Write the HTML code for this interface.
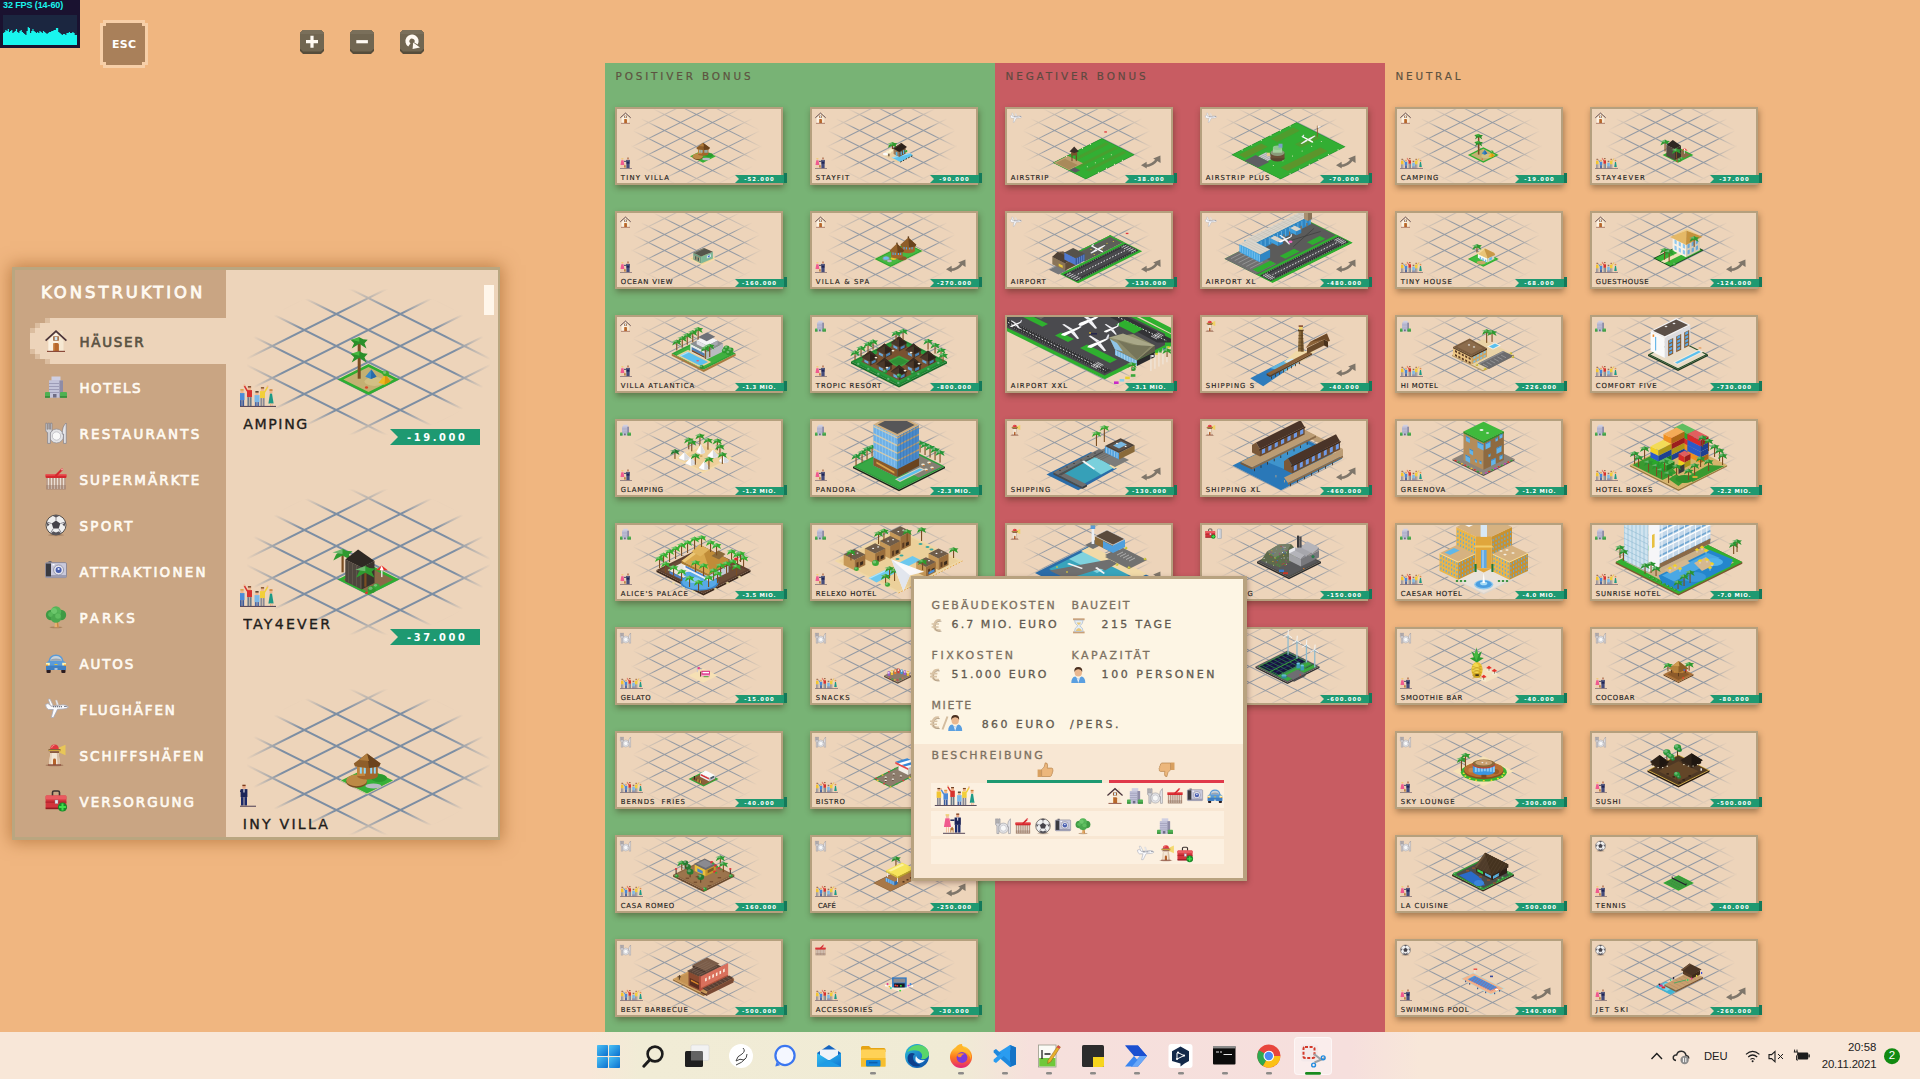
<!DOCTYPE html><html lang="de"><head><meta charset="utf-8"><title>Konstruktion</title><style>
*{box-sizing:border-box;margin:0;padding:0}
html,body{width:1920px;height:1079px;overflow:hidden}
body{background:#f0b680;position:relative;font-family:"DejaVu Sans","Liberation Sans",sans-serif}
.t{position:absolute;line-height:1;white-space:pre;font-weight:bold;font-family:"DejaVu Sans","Liberation Sans",sans-serif}
.t.r{font-weight:normal}
.abs{position:absolute}
.col{position:absolute;top:63px;height:969px;width:390px}
.card{position:absolute;width:168px;height:78px;background:#edd4ba;border:2px solid #b5a07e;box-shadow:1px 3px 6px rgba(60,40,20,.42)}
.card svg{position:absolute;left:-2px;top:-2px;overflow:visible}
.tag{position:absolute;left:122px;top:66px;width:44.5px;height:8px;background:#1e9971}
.tag:before{content:"";position:absolute;left:-4px;top:0;border-style:solid;border-width:4px 4px 4px 4px;border-color:#1e9971 #1e9971 #1e9971 transparent;width:0;height:0}
.tag:after{content:"";position:absolute;right:-3px;top:-2px;width:3px;height:10px;background:#13795a}
.tb{position:absolute;left:0;top:1032px;width:1920px;height:47px;background:linear-gradient(90deg,#f8e7d8 0,#f8e7d8 590px,#f1ecd6 640px,#f0ebd5 960px,#f6e0dc 1030px,#f6dfdd 1350px,#f8e7d9 1420px,#f8e7d9 100%)}
.ls{font-family:"Liberation Sans",sans-serif;position:absolute;white-space:nowrap;line-height:1}
</style></head><body>
<svg width="0" height="0" style="position:absolute"><defs>
<radialGradient id="gm" cx="81.5" cy="36" r="1" gradientUnits="userSpaceOnUse" gradientTransform="translate(81.5 36) scale(66 45) translate(-81.5 -36)"><stop offset="0" stop-color="#fff"/><stop offset=".66" stop-color="#fff"/><stop offset=".82" stop-color="#606060"/><stop offset="1" stop-color="#000"/></radialGradient>
<mask id="gmask" maskUnits="userSpaceOnUse" x="0" y="0" width="168" height="78"><rect x="2" y="2" width="164" height="74" fill="url(#gm)"/></mask>
<symbol id="grid" overflow="visible"><g mask="url(#gmask)"><path d="M1.5 -80.5L166.5 2.0M1.5 -64.5L166.5 18.0M1.5 15.5L166.5 -67.0M1.5 -48.5L166.5 34.0M1.5 31.5L166.5 -51.0M1.5 -32.5L166.5 50.0M1.5 47.5L166.5 -35.0M1.5 -16.5L166.5 66.0M1.5 63.5L166.5 -19.0M1.5 -0.5L166.5 82.0M1.5 79.5L166.5 -3.0M1.5 15.5L166.5 98.0M1.5 95.5L166.5 13.0M1.5 31.5L166.5 114.0M1.5 111.5L166.5 29.0M1.5 47.5L166.5 130.0M1.5 127.5L166.5 45.0M1.5 63.5L166.5 146.0M1.5 143.5L166.5 61.0M1.5 159.5L166.5 77.0" stroke="#5d7896" stroke-opacity=".62" stroke-width="1.05" fill="none"/></g></symbol>
<radialGradient id="gm2" cx="0" cy="0" r="1" gradientUnits="userSpaceOnUse" gradientTransform="translate(368.5 362) scale(122 74)"><stop offset="0" stop-color="#fff"/><stop offset=".72" stop-color="#fff"/><stop offset=".88" stop-color="#666"/><stop offset="1" stop-color="#000"/></radialGradient>
<mask id="gmask2" maskUnits="userSpaceOnUse" x="226" y="270" width="272" height="220"><rect x="240" y="270" width="258" height="220" fill="url(#gm2)"/></mask>
<symbol id="grid2" overflow="visible"><g mask="url(#gmask2)"><path d="M240.0 169.8L498.0 298.8M240.0 298.2L498.0 169.2M240.0 201.8L498.0 330.8M240.0 330.2L498.0 201.2M240.0 233.8L498.0 362.8M240.0 362.2L498.0 233.2M240.0 265.8L498.0 394.8M240.0 394.2L498.0 265.2M240.0 297.8L498.0 426.8M240.0 426.2L498.0 297.2M240.0 329.8L498.0 458.8M240.0 458.2L498.0 329.2M240.0 361.8L498.0 490.8M240.0 490.2L498.0 361.2M240.0 393.8L498.0 522.8M240.0 522.2L498.0 393.2M240.0 425.8L498.0 554.8M240.0 554.2L498.0 425.2M240.0 457.8L498.0 586.8M240.0 586.2L498.0 457.2" stroke="#5f7c9e" stroke-opacity=".8" stroke-width="2" fill="none"/></g></symbol>
<clipPath id="cardclip"><rect x="2" y="2" width="164" height="74"/></clipPath>
<symbol id="i-house" overflow="visible"><rect x="15.3" y="1" width="2.4" height="7" fill="#f3e2c8"/><path d="M3.5 10L11 3L18.5 10V21H3.5Z" fill="#f6e8d2"/><path d="M3.5 10L11 3L13 5V21H3.5Z" fill="#fbf1e2"/><rect x="8.2" y="6.3" width="5.6" height="4.4" fill="#9a5a2c"/><rect x="9.6" y="6.8" width="2.8" height="3.4" fill="#cfe6f5"/><path d="M8.3 21V14.5Q8.3 13 9.8 13H12.4Q13.9 13 13.9 14.5V21Z" fill="#b8682c"/><rect x="8.3" y="13" width="1.2" height="8" fill="#cf8a4a"/><path d="M.6 10.6L11 1.2L21.4 10.6" fill="none" stroke="#4a343a" stroke-width="1.7" stroke-linejoin="miter"/><rect x="2" y="20.8" width="18" height="1.2" fill="#8a4a3a"/></symbol><symbol id="i-hotel" overflow="visible"><rect x="6.5" y="0.5" width="9" height="5" fill="#cfcfe2"/><rect x="4" y="4.5" width="14" height="17" fill="#b5b4cc"/><rect x="4" y="4.5" width="10" height="17" fill="#c3c3d9"/><rect x="14.5" y="4.5" width="3.5" height="17" fill="#8f8ca6"/><path d="M4 7.5h10M4 10.5h10M4 13.5h10M4 16.5h10" stroke="#9d9cb8" stroke-width="1"/><rect x="8" y="18" width="3.5" height="3.5" fill="#6e6c84"/><rect x="0" y="16" width="5" height="5.8" rx="1" fill="#4fb152"/><rect x="15" y="16" width="7" height="5.8" rx="1" fill="#4fb152"/><rect x="0" y="20" width="5" height="1.8" fill="#3a8f3e"/><rect x="15" y="20" width="7" height="1.8" fill="#3a8f3e"/></symbol><symbol id="i-rest" overflow="visible"><circle cx="11.5" cy="14" r="7" fill="#e4e4e6" stroke="#8e8e96" stroke-width=".7"/><circle cx="11.5" cy="14" r="4.2" fill="#f8f8f8" stroke="#bdbdc4" stroke-width=".9"/><path d="M.8 1.2h1.4v6h1V1.2h1.4v6h1V1.2H7v7.3Q7 10 5.4 10.6V21.4H2.6V10.6Q.8 10 .8 8.5Z" fill="#d4d4d8" stroke="#7e7e88" stroke-width=".7"/><path d="M21.2 1V21.4H18.6V12H17.2Q17.2 4 21.2 1Z" fill="#e6e6ea" stroke="#7e7e88" stroke-width=".7"/></symbol><symbol id="i-basket" overflow="visible"><rect x="1.2" y="9" width="19.6" height="12.5" fill="#b89a86"/><path d="M3.5 10v11M6.5 10v11M9.5 10v11M12.5 10v11M15.5 10v11M18.5 10v11" stroke="#eadfd6" stroke-width="1.3"/><rect x="1.2" y="17" width="19.6" height="4.5" fill="#8a6a58" opacity=".35"/><rect x=".5" y="6.3" width="21" height="3.6" rx=".8" fill="#d5282e"/><rect x=".5" y="6.3" width="21" height="1.2" fill="#ee5a5a"/><path d="M11 7.5L17 1.5" stroke="#d5282e" stroke-width="2.2" stroke-linecap="round"/><circle cx="17" cy="1.6" r="1" fill="#f6a0a0"/></symbol><symbol id="i-ball" overflow="visible"><ellipse cx="11" cy="21" rx="8" ry="1.2" fill="#7a5a40" opacity=".35"/><circle cx="11" cy="11" r="10" fill="#efefef" stroke="#55504c" stroke-width="1"/><path d="M11 6.5L15.3 9.6L13.7 14.6H8.3L6.7 9.6Z" fill="#45434a"/><path d="M11 6.5V1.5M15.3 9.6L20 8M13.7 14.6L16.5 19M8.3 14.6L5.5 19M6.7 9.6L2 8" stroke="#8a8890" stroke-width="1"/><path d="M7.5 1.8L11 1L14.5 1.8L11 3.6Z M1.3 8L2.5 12.5L4.6 10.4Z M20.7 8L19.5 12.5L17.4 10.4Z M6 19.5L8 17.2L11 18.6L14 17.2L16 19.5Q11 22.5 6 19.5Z" fill="#55535a"/></symbol><symbol id="i-camera" overflow="visible"><rect x="3.5" y="1" width="3" height="2" fill="#6a6a72"/><rect x=".5" y="2.6" width="21" height="15" rx="1.3" fill="#c9c9dc" stroke="#77778a" stroke-width=".7"/><rect x=".8" y="15" width="20.4" height="2.6" fill="#9c9cb2"/><rect x="1" y="3.4" width="5" height="13" fill="#3a3a40"/><circle cx="13.6" cy="10" r="5" fill="#e4e4ee" stroke="#8a8a9c" stroke-width=".8"/><circle cx="13.6" cy="10" r="3" fill="#4a5fae"/><circle cx="13.6" cy="9" r="1.1" fill="#dfe8ff"/><rect x="7.5" y="4" width="2" height="1.4" fill="#fff"/></symbol><symbol id="i-tree" overflow="visible"><ellipse cx="11" cy="21.3" rx="6.5" ry=".9" fill="#8a6038" opacity=".5"/><path d="M9.4 21.3L10.4 14h2.4l1 7.3Z" fill="#e8b070"/><path d="M11.6 14h1.2l1 7.3h-1.6Z" fill="#c88a48"/><circle cx="6" cy="9" r="5.2" fill="#3f9a44"/><circle cx="16" cy="9" r="5.2" fill="#3f9a44"/><circle cx="11" cy="5.4" r="5.2" fill="#55b558"/><circle cx="11" cy="11.5" r="5.3" fill="#4aa84e"/><circle cx="9" cy="5" r="3" fill="#6cc76c"/><circle cx="5.5" cy="8.5" r="2.4" fill="#58b85a"/><circle cx="13" cy="10" r="2.8" fill="#5fbe60"/></symbol><symbol id="i-car" overflow="visible"><rect x="1.5" y="16" width="4.2" height="5" rx="1" fill="#2a1c20"/><rect x="16.3" y="16" width="4.2" height="5" rx="1" fill="#2a1c20"/><path d="M3.5 9Q4.5 2.5 11 2.5Q17.5 2.5 18.5 9L21 10.5V18H1V10.5Z" fill="#5b9bd8"/><path d="M5 8.8Q6 4 11 4Q16 4 17 8.8Z" fill="#c9d3dc"/><path d="M5 8.8Q6 6.5 11 6.5Q16 6.5 17 8.8Z" fill="#9aa6b2"/><rect x="1" y="13.6" width="20" height="4.4" fill="#3f7fc2"/><rect x="1" y="10.8" width="3.8" height="2.6" fill="#fff3b0"/><rect x="17.2" y="10.8" width="3.8" height="2.6" fill="#fff3b0"/><rect x="1" y="12.6" width="2" height="1.2" fill="#f39a1e"/><rect x="19" y="12.6" width="2" height="1.2" fill="#f39a1e"/><rect x="9.5" y="12" width="3" height="1" fill="#e8c030"/><rect x="9.5" y="16.4" width="3" height="1.2" fill="#eee"/></symbol><symbol id="i-plane" overflow="visible"><path d="M0.5 6.5L3 5.5L6.5 8.2L18 6.8Q21.5 6.8 23.5 9Q21.5 11 18 11L12.5 11.3L8.5 19.5H6.3L8.3 11.5L3.5 11.5Q.8 10.5 .5 6.5Z" fill="#fbfbfd" stroke="#a4a8b6" stroke-width=".8"/><path d="M3.2 1L5 1L8.3 7.8L5.6 8Z" fill="#fff" stroke="#a9adba" stroke-width=".7"/><path d="M10.5 2.2L12 2.2L13.5 6.8L11.8 7Z" fill="#eceef2" stroke="#c4c7d0" stroke-width=".4"/><path d="M8 8.8H17" stroke="#4a4f60" stroke-width="1.1" stroke-dasharray="1.3 .7"/><path d="M19 8.2h2.4l1 .9h-3.4Z" fill="#5a6070"/></symbol><symbol id="i-light" overflow="visible"><ellipse cx="9.5" cy="21.3" rx="9" ry="1" fill="#7a4a30" opacity=".45"/><path d="M13 4L20.5 .8V11.2L13 8Z" fill="#f2d24a" opacity=".75"/><path d="M5.2 5.2Q5.2 .4 9.5 .4Q13.8 .4 13.8 5.2Z" fill="#e0383e"/><path d="M6.6 4Q6.8 1.4 9.5 1.2" stroke="#f58a8a" stroke-width="1" fill="none"/><rect x="3.6" y="5" width="11.8" height="2.2" fill="#6a4a3a"/><rect x="3.6" y="5.8" width="11.8" height="1" fill="#e8c040"/><rect x="5" y="7.2" width="9" height="1.8" fill="#8a5a40"/><path d="M5.4 9H13.6L15.2 21H3.8Z" fill="#f4e6d4"/><path d="M11.8 9H13.6L15.2 21H12.6Z" fill="#d8bfa6"/><path d="M5.4 9H7L6 21H3.8Z" fill="#e6d2bc"/><path d="M8 21V16Q8 14.6 9.5 14.6Q11 14.6 11 16V21Z" fill="#b5622a"/><rect x="3" y="20.3" width="13" height="1.2" fill="#8a4a3a"/></symbol><symbol id="i-med" overflow="visible"><path d="M7.5 6V2.6Q7.5 1 9 1H13Q14.5 1 14.5 2.6V6" fill="none" stroke="#3c3230" stroke-width="1.6"/><rect x=".6" y="5.4" width="20.8" height="13.6" rx="1.4" fill="#d3343c"/><rect x=".6" y="5.4" width="20.8" height="4" rx="1.2" fill="#ea5a60"/><rect x=".6" y="11.6" width="20.8" height="1" fill="#a82028"/><rect x=".6" y="17.6" width="20.8" height="1.6" fill="#8e1c22"/><rect x="10" y="10" width="3" height="3.6" fill="#e8e8ee" stroke="#8a8a96" stroke-width=".4"/><circle cx="17.5" cy="17" r="4.6" fill="#1a8a2a"/><path d="M17.5 13.6V20.4M14.1 17H20.9" stroke="#3fe04a" stroke-width="2"/></symbol><symbol id="i-med2" overflow="visible"><g transform="scale(.95)"><path d="M7.5 6V2.6Q7.5 1 9 1H13Q14.5 1 14.5 2.6V6" fill="none" stroke="#3c3230" stroke-width="1.6"/><rect x=".6" y="5.4" width="20.8" height="13.6" rx="1.4" fill="#d3343c"/><rect x=".6" y="5.4" width="20.8" height="4" rx="1.2" fill="#ea5a60"/><rect x=".6" y="11.6" width="20.8" height="1" fill="#a82028"/><rect x=".6" y="17.6" width="20.8" height="1.6" fill="#8e1c22"/><rect x="10" y="10" width="3" height="3.6" fill="#e8e8ee" stroke="#8a8a96" stroke-width=".4"/><circle cx="17.5" cy="17" r="4.6" fill="#1a8a2a"/><path d="M17.5 13.6V20.4M14.1 17H20.9" stroke="#3fe04a" stroke-width="2"/></g><rect x="25" y="1" width="8" height="19" rx="1" fill="#c9cdd4" stroke="#8f949c" stroke-width=".8"/><rect x="26.4" y="2" width="2.2" height="17" fill="#e8ebef"/></symbol><symbol id="i-group" overflow="visible"><rect x="2.9" y="3.0" width="3.2" height="3.4" fill="#f0b48a"/><rect x="2.9" y="2.7" width="3.2" height="1.3" fill="#5a3a24"/><rect x="2.0" y="6.6" width="5.0" height="7" fill="#f2c531"/><rect x="2.4" y="13.6" width="1.8" height="8.0" fill="#8a8a94"/><rect x="4.8" y="13.6" width="1.8" height="8.0" fill="#8a8a94"/><rect x="10.4" y="5.0" width="3.2" height="3.4" fill="#f0b48a"/><rect x="10.4" y="4.7" width="3.2" height="1.3" fill="#d8a040"/><rect x="9.5" y="8.6" width="5.0" height="7" fill="#4a8ad8"/><rect x="9.9" y="15.6" width="1.8" height="6.0" fill="#3c5a9a"/><rect x="12.3" y="15.6" width="1.8" height="6.0" fill="#3c5a9a"/><path d="M9.9 9.6L6.9 4.4" stroke="#4a8ad8" stroke-width="1.6"/><rect x="6.1" y="3.0" width="1.6" height="1.6" fill="#f0b48a"/><rect x="17.9" y="2.0" width="3.2" height="3.4" fill="#f0b48a"/><rect x="17.9" y="1.7" width="3.2" height="1.3" fill="#6a3a20"/><rect x="17.0" y="5.6" width="5.0" height="7" fill="#d8322e"/><rect x="17.4" y="12.6" width="1.8" height="9.0" fill="#6a7a88"/><rect x="19.8" y="12.6" width="1.8" height="9.0" fill="#6a7a88"/><path d="M17.4 6.6L14.4 1.4" stroke="#d8322e" stroke-width="1.6"/><rect x="13.6" y="0.0" width="1.6" height="1.6" fill="#f0b48a"/><rect x="25.4" y="7.0" width="3.2" height="3.4" fill="#f0b48a"/><rect x="25.4" y="6.7" width="3.2" height="1.3" fill="#3a2a20"/><rect x="24.5" y="10.6" width="5.0" height="7" fill="#7ab8e8"/><rect x="24.9" y="17.6" width="1.8" height="4.0" fill="#4a6aa8"/><rect x="27.3" y="17.6" width="1.8" height="4.0" fill="#4a6aa8"/><rect x="30.9" y="3.0" width="3.2" height="3.4" fill="#f0b48a"/><rect x="30.9" y="2.7" width="3.2" height="1.3" fill="#7a4a24"/><rect x="30.0" y="6.6" width="5.0" height="7" fill="#f2cf3a"/><rect x="30.4" y="13.6" width="1.8" height="8.0" fill="#8a8a94"/><rect x="32.8" y="13.6" width="1.8" height="8.0" fill="#8a8a94"/><path d="M34.6 7.6L37.6 2.4" stroke="#f2cf3a" stroke-width="1.6"/><rect x="36.8" y="1.0" width="1.6" height="1.6" fill="#f0b48a"/><path d="M40 9L38.4 19H43.6L42 9Z" fill="#1e9a86"/><rect x="39.5" y="5.4" width="3" height="3.4" fill="#f0b48a"/><rect x="39.5" y="4.8" width="3" height="1.4" fill="#c87830"/><rect x="40" y="19" width="1" height="2.4" fill="#f0b48a"/><rect x="41.6" y="19" width="1" height="2.4" fill="#f0b48a"/><rect x="0" y="21.4" width="46" height="1.1" fill="#5a4a5a"/></symbol><symbol id="i-couple" overflow="visible"><rect x="3.2" y="1.6" width="3.2" height="3.4" fill="#f3c0a0"/><rect x="2.8" y="1" width="4" height="1.6" fill="#f0d070"/><path d="M2.6 5.4H7L8.8 15H1Z" fill="#f05a8e"/><rect x="3.2" y="15" width="1.1" height="5.8" fill="#f3c0a0"/><rect x="5.4" y="15" width="1.1" height="5.8" fill="#f3c0a0"/><path d="M8 16.5L10 14.5L11.5 16.5V20.8H10.5V18.5H9V20.8H8Z" fill="#b87838"/><path d="M8 7.5H12.5" stroke="#1c2458" stroke-width="1.6"/><rect x="14.4" y="0.8" width="3.2" height="3.4" fill="#e8a888"/><rect x="14.4" y=".2" width="3.2" height="1.4" fill="#7a3a1a"/><rect x="12.6" y="4.6" width="6.8" height="8" fill="#1c2458"/><rect x="15.5" y="4.6" width="1" height="3.4" fill="#fff"/><rect x="13" y="12.6" width="2.6" height="8.4" fill="#1c2a6a"/><rect x="16.4" y="12.6" width="2.6" height="8.4" fill="#1c2a6a"/><rect x="0" y="21.2" width="24" height="1.1" fill="#5a4a5a"/></symbol><symbol id="i-man" overflow="visible"><path d="M2 12L6 19" stroke="#c87a4a" stroke-width="1.2"/><path d="M4 9L9 6.4" stroke="#1c2458" stroke-width="1.6"/><rect x="2.6" y="8" width="1.8" height="1.8" fill="#e8a888"/><rect x="10.4" y="0.8" width="3.2" height="3.4" fill="#e8a888"/><rect x="10.4" y=".2" width="3.2" height="1.4" fill="#7a3a1a"/><rect x="8.6" y="4.6" width="6.8" height="8" fill="#1c2458"/><rect x="11.5" y="4.6" width="1" height="3.4" fill="#fff"/><rect x="9" y="12.6" width="2.6" height="8.4" fill="#1c2a6a"/><rect x="12.4" y="12.6" width="2.6" height="8.4" fill="#1c2a6a"/><rect x="0" y="21.2" width="24" height="1.1" fill="#5a4a5a"/></symbol><symbol id="i-euro" overflow="visible"><path d="M10 2.2Q4.4 1.2 3.6 7.4Q3 12.8 10 12.2" fill="none" stroke="#d9c3a5" stroke-width="2.4"/><path d="M10 2.2Q4.4 1.2 3.6 7.4Q3 12.8 10 12.2" fill="none" stroke="#8a7a68" stroke-width=".5" transform="translate(.9 .9)"/><path d="M1 5.8H8.4M1 8.8H8" stroke="#d9c3a5" stroke-width="1.6"/></symbol><symbol id="i-hour" overflow="visible"><rect x="1" y=".5" width="11" height="1.8" fill="#c9a078"/><rect x="1" y="13" width="11" height="1.8" fill="#c9a078"/><path d="M2.4 2.3H10.6Q10.6 6 7.4 7.6Q10.6 9.4 10.6 13H2.4Q2.4 9.4 5.6 7.6Q2.4 6 2.4 2.3Z" fill="#e4edf5" stroke="#a8b4c4" stroke-width=".6"/><path d="M3.6 12.6Q4 10.2 6.5 9.6Q9 10.2 9.4 12.6Z" fill="#e8c87a"/><path d="M4.4 4.4H8.6Q8 6 6.5 6.8Q5 6 4.4 4.4Z" fill="#e8c87a"/></symbol><symbol id="i-pers" overflow="visible"><path d="M.5 16.5Q.5 10.5 4.5 10L7.5 12.5L10.5 10Q14.5 10.5 14.5 16.5Z" fill="#5a9fe0"/><path d="M5.6 10.5L7.5 13L9.4 10.5L7.5 16.5Z" fill="#e6eef8"/><ellipse cx="7.5" cy="5.8" rx="3.7" ry="4.3" fill="#eab890"/><path d="M3.6 5.5Q3 .6 7.5 .6Q12 .6 11.4 5.5Q10.5 2.6 7.5 2.8Q4.5 2.6 3.6 5.5Z" fill="#4a3020"/></symbol><symbol id="i-up" overflow="visible"><path d="M1 8H5V15.5H1Z" fill="#d8a060"/><path d="M5 8.2Q8.4 6 8.6 1.4Q11.2 1 11 4.4L10.6 6.6H15Q16.6 6.8 16.2 8.4Q16.8 9.6 15.8 10.6Q16.2 11.8 15.2 12.6Q15.4 14.4 13.6 15H5Z" fill="#ecb77c" stroke="#b8844c" stroke-width=".7"/></symbol><symbol id="i-down" overflow="visible"><g transform="translate(17 16.5) scale(-1 -1)"><path d="M1 8H5V15.5H1Z" fill="#d8a060"/><path d="M5 8.2Q8.4 6 8.6 1.4Q11.2 1 11 4.4L10.6 6.6H15Q16.6 6.8 16.2 8.4Q16.8 9.6 15.8 10.6Q16.2 11.8 15.2 12.6Q15.4 14.4 13.6 15H5Z" fill="#ecb77c" stroke="#b8844c" stroke-width=".7"/></g></symbol><symbol id="rot" overflow="visible"><path d="M3.2 10.2Q11.5 10.5 16.2 3.6" fill="none" stroke="#7f766a" stroke-width="2.6"/><path d="M0 9.6L5.6 6.2L5.8 13Z" fill="#7f766a"/><path d="M12.2 3L19.4 0L19.6 7.4Z" fill="#7f766a"/></symbol>
</defs></svg>
<div class="abs" style="left:0;top:0;width:80px;height:48px;background:#1a1230"></div>
<div class="abs" style="left:3px;top:15px;width:74px;height:30px;background:#1b2640"></div>
<svg class="abs" style="left:0;top:0" width="80" height="48"><path d="M3 45L3.0 33.0L4.2 33.0L4.2 32.0L5.3 32.0L5.3 30.0L6.5 30.0L6.5 31.0L7.7 31.0L7.7 29.0L8.9 29.0L8.9 32.0L10.0 32.0L10.0 31.0L11.2 31.0L11.2 30.0L12.4 30.0L12.4 33.0L13.6 33.0L13.6 32.0L14.7 32.0L14.7 31.0L15.9 31.0L15.9 29.0L17.1 29.0L17.1 32.0L18.3 32.0L18.3 33.0L19.4 33.0L19.4 31.0L20.6 31.0L20.6 30.0L21.8 30.0L21.8 32.0L23.0 32.0L23.0 33.0L24.1 33.0L24.1 34.0L25.3 34.0L25.3 35.0L26.5 35.0L26.5 31.0L27.7 31.0L27.7 27.0L28.8 27.0L28.8 28.0L30.0 28.0L30.0 33.0L31.2 33.0L31.2 31.0L32.4 31.0L32.4 29.0L33.5 29.0L33.5 31.0L34.7 31.0L34.7 32.0L35.9 32.0L35.9 33.0L37.1 33.0L37.1 32.0L38.2 32.0L38.2 33.0L39.4 33.0L39.4 31.0L40.6 31.0L40.6 32.0L41.8 32.0L41.8 33.0L42.9 33.0L42.9 31.0L44.1 31.0L44.1 32.0L45.3 32.0L45.3 33.0L46.5 33.0L46.5 34.0L47.6 34.0L47.6 33.0L48.8 33.0L48.8 32.0L50.0 32.0L50.0 32.0L51.2 32.0L51.2 31.0L52.3 31.0L52.3 31.0L53.5 31.0L53.5 30.0L54.7 30.0L54.7 30.0L55.9 30.0L55.9 28.0L57.0 28.0L57.0 28.0L58.2 28.0L58.2 32.0L59.4 32.0L59.4 33.0L60.6 33.0L60.6 34.0L61.7 34.0L61.7 35.0L62.9 35.0L62.9 34.0L64.1 34.0L64.1 34.0L65.3 34.0L65.3 35.0L66.4 35.0L66.4 33.0L67.6 33.0L67.6 33.0L68.8 33.0L68.8 32.0L70.0 32.0L70.0 33.0L71.1 33.0L71.1 33.0L72.3 33.0L72.3 32.0L73.5 32.0L73.5 33.0L74.7 33.0L74.7 35.0L75.8 35.0L75.8 35.0L77.0 35.0L77 45Z" fill="#19f5ee"/></svg>
<span class="ls" style="left:3px;top:1px;font-size:9px;font-weight:bold;color:#19f5ee;letter-spacing:-.1px">32 FPS (14-60)</span>
<div class="abs" style="left:100px;top:23px;width:48px;height:42px;background:#f7cfa8"></div>
<div class="abs" style="left:103px;top:20px;width:42px;height:48px;background:#f7cfa8"></div>
<div class="abs" style="left:103px;top:26px;width:42px;height:36px;background:#a9805a"></div>
<div class="abs" style="left:106px;top:23px;width:36px;height:42px;background:#a9805a"></div>
<span class="t" style="left:112.0px;top:40.2px;font-size:10.97px;letter-spacing:0.27px;color:#fff;">ESC</span>
<svg class="abs" style="left:300px;top:30px" width="24" height="24"><path d="M3 0H21L24 3V21L21 24H3L0 21V3Z" fill="#564c3a"/><path d="M3 0H21L24 3V18.5L21 21.5H3L0 18.5V3Z" fill="#716651"/><path d="M3 0H21L24 3V4H0V3Z" fill="#7a6f5a"/>
<path d="M6 11.7h12M12 5.7v12" stroke="#fffaf2" stroke-width="3.2"/>
</svg>
<svg class="abs" style="left:350px;top:30px" width="24" height="24"><path d="M3 0H21L24 3V21L21 24H3L0 21V3Z" fill="#564c3a"/><path d="M3 0H21L24 3V18.5L21 21.5H3L0 18.5V3Z" fill="#716651"/><path d="M3 0H21L24 3V4H0V3Z" fill="#7a6f5a"/>
<path d="M6.3 11.7h11.6" stroke="#fffaf2" stroke-width="3.2"/>
</svg>
<svg class="abs" style="left:400px;top:30px" width="24" height="24"><path d="M3 0H21L24 3V21L21 24H3L0 21V3Z" fill="#564c3a"/><path d="M3 0H21L24 3V18.5L21 21.5H3L0 18.5V3Z" fill="#716651"/><path d="M3 0H21L24 3V4H0V3Z" fill="#7a6f5a"/>
<path d="M9.4 14.9A4.6 4.6 0 1 1 16 13.4" stroke="#fffaf2" stroke-width="4" fill="none"/><path d="M13.2 12.4L20 17.6L12.6 19Z" fill="#fffaf2"/>
</svg>
<div class="col" style="left:605px;background:#78b375"></div>
<div class="col" style="left:995px;background:#c85c62"></div>
<span class="t r" style="left:615.5px;top:70.7px;font-size:10.43px;letter-spacing:2.85px;color:#5d5240;-webkit-text-stroke:0.18px #5d5240;">POSITIVER BONUS</span>
<span class="t r" style="left:1005.5px;top:70.7px;font-size:10.43px;letter-spacing:2.88px;color:#5d4a40;-webkit-text-stroke:0.18px #5d4a40;">NEGATIVER BONUS</span>
<span class="t r" style="left:1395.5px;top:70.7px;font-size:10.43px;letter-spacing:2.81px;color:#5d5240;-webkit-text-stroke:0.18px #5d5240;">NEUTRAL</span>
<div class="card" style="left:615px;top:107px">
<svg width="168" height="78" viewBox="0 0 168 78"><use href="#grid"/>
<g clip-path="url(#cardclip)"><polygon points="74.4,49.3 88.0,42.5 101.6,49.3 88.0,56.1" fill="#f3d9a6"/><polygon points="75.0,49.3 88.0,42.9 101.0,49.3 88.0,55.7" fill="#37b038"/><ellipse cx="94.0" cy="48.0" rx="4.0" ry="2.0" fill="#2c9a2e"/><ellipse cx="82.8" cy="50.0" rx="5.2" ry="2.9" fill="#7a4c20"/><ellipse cx="82.8" cy="49.2" rx="5.2" ry="2.9" fill="#bd8a45"/><ellipse cx="91.2" cy="52.0" rx="4.0" ry="1.3" fill="#b9bac4"/><rect x="83.0" y="41.0" width="10.4" height="6.0" fill="#a2652a"/><ellipse cx="88.2" cy="47.0" rx="5.2" ry="1.7" fill="#a2652a"/><rect x="83.0" y="41.0" width="4.0" height="6.0" fill="#c0843c"/><rect x="84.4" y="42.6" width="1.0" height="3.2" fill="#8fd6f5"/><rect x="86.4" y="42.6" width="1.0" height="3.2" fill="#8fd6f5"/><rect x="89.6" y="42.6" width="1.0" height="3.2" fill="#8fd6f5"/><rect x="91.4" y="42.6" width="1.0" height="3.2" fill="#8fd6f5"/><polygon points="81.4,40.8 88.0,35.8 94.8,40.8 94.0,42.2 88.0,43.0 82.0,42.2" fill="#8e5e2a"/><polygon points="88.0,35.8 94.8,40.8 94.0,42.2 89.0,43.0" fill="#6b431c"/><polygon points="84.0,39.0 88.0,35.8 89.0,39.5" fill="#b07c3c"/></g>
<use href="#i-house" transform="translate(5 5.5) scale(.5)"/>
<use href="#i-couple" transform="translate(5 50.6) scale(.5)"/>
</svg>
<span class="t r" style="left:3.8px;top:65.5px;font-size:6.86px;letter-spacing:1.24px;color:#1f1d1b;-webkit-text-stroke:.14px #1f1d1b;">TINY VILLA</span>
<div class="tag"></div>
<span class="t" style="left:127.2px;top:68.1px;font-size:5.35px;letter-spacing:1.11px;color:#fff;">-52.000</span>
</div>
<div class="card" style="left:810px;top:107px">
<svg width="168" height="78" viewBox="0 0 168 78"><use href="#grid"/>
<g clip-path="url(#cardclip)"><polygon points="72.6,48.5 88.0,41.1 103.4,48.5 88.0,55.9" fill="#e9cfa4"/><polygon points="81.7,50.6 100.0,46.1 103.0,48.3 90.3,54.9" fill="#5cc3ee"/><polygon points="81.7,50.6 100.0,46.1 100.8,46.7 83.0,51.3" fill="#9fe0fa"/><polyline points="90.3,55.1 103.2,48.3" fill="none" stroke="#2a241c" stroke-width="1.0" stroke-dasharray="1.5 1.5"/><ellipse cx="75.5" cy="47.0" rx="2.6" ry="1.6" fill="#fbfbfb"/><ellipse cx="78.6" cy="44.9" rx="2.6" ry="1.5" fill="#f6f0d2"/><ellipse cx="81.0" cy="43.5" rx="2.0" ry="1.2" fill="#fff7d0"/><rect x="78.4" y="46.7" width="1.0" height="2.6" fill="#3a2a20"/><rect x="81.9" y="37.8" width="1.1" height="4.2" fill="#7a4e22"/><path d="M82.4 35.0l2.2 1.1l2.8 0.2l-1.8 1.6l1.4 3.0l-4.6 -2.5l-4.6 2.5l1.4 -3.0Z" fill="#2f9a2c"/><path d="M77.4 36.9l5.0 -1.8l0.0 2.6Z" fill="#6db86b"/><polygon points="83.6,41.7 89.2,44.1 89.2,49.9 83.6,47.1" fill="#9a7a58"/><polygon points="89.2,44.1 95.6,40.5 95.6,46.5 89.2,49.9" fill="#6b4f35"/><rect x="85.8" y="44.7" width="1.6" height="3.6" fill="#58b8e8" transform="skewY(22)" style="transform-box:fill-box"/><polygon points="90.6,44.9 91.8,44.2 91.8,47.9 90.6,48.6" fill="#58b8e8"/><polygon points="93.0,43.5 94.2,42.8 94.2,46.5 93.0,47.2" fill="#58b8e8"/><polygon points="83.0,41.5 91.4,35.9 97.0,39.9 89.2,44.9" fill="#2c201a"/><polygon points="83.0,41.5 91.4,35.9 92.4,36.6 84.2,42.1" fill="#4a382c"/><ellipse cx="96.0" cy="44.1" rx="1.4" ry="1.2" fill="#2fa030"/><ellipse cx="95.6" cy="43.7" rx="0.7" ry="0.6" fill="#6dbc6e"/></g>
<use href="#i-house" transform="translate(5 5.5) scale(.5)"/>
<use href="#i-couple" transform="translate(5 50.6) scale(.5)"/>
</svg>
<span class="t r" style="left:3.8px;top:65.5px;font-size:6.86px;letter-spacing:1.15px;color:#1f1d1b;-webkit-text-stroke:.14px #1f1d1b;">STAYFIT</span>
<div class="tag"></div>
<span class="t" style="left:127.2px;top:68.1px;font-size:5.35px;letter-spacing:1.11px;color:#fff;">-90.000</span>
</div>
<div class="card" style="left:1005px;top:107px">
<svg width="168" height="78" viewBox="0 0 168 78"><use href="#grid"/>
<g clip-path="url(#cardclip)"><polygon points="96.8,31.2 129.7,47.7 80.8,72.2 47.8,55.7" fill="#1f8f25"/><polygon points="96.8,31.7 128.8,47.7 80.8,71.7 48.8,55.7" fill="#33ae33"/><polygon points="100.8,35.3 104.0,36.9 66.3,55.7 63.1,54.1" fill="#5d8f2c" opacity=".5"/><polygon points="109.5,39.7 112.8,41.3 75.2,60.1 72.0,58.5" fill="#5d8f2c" opacity=".5"/><polygon points="118.3,44.1 121.5,45.7 84.0,64.5 80.8,62.9" fill="#5d8f2c" opacity=".5"/><polygon points="62.8,48.7 78.0,56.3 64.0,63.3 48.8,55.7" fill="#bfa070"/><polygon points="60.0,51.7 72.8,58.1 64.0,62.5 51.1,56.1" fill="#a98a5a"/><polygon points="69.5,60.5 75.2,63.3 70.3,65.7 64.8,62.9" fill="#5a5a5e"/><circle cx="117.5" cy="53.3" r="0.6" fill="#f4f4d0"/><circle cx="85.5" cy="37.3" r="0.6" fill="#f4f4d0"/><circle cx="106.3" cy="47.7" r="0.5" fill="#f4f4d0"/><circle cx="109.5" cy="57.3" r="0.6" fill="#f4f4d0"/><circle cx="77.5" cy="41.3" r="0.6" fill="#f4f4d0"/><circle cx="98.3" cy="51.7" r="0.5" fill="#f4f4d0"/><circle cx="101.5" cy="61.3" r="0.6" fill="#f4f4d0"/><circle cx="69.5" cy="45.3" r="0.6" fill="#f4f4d0"/><circle cx="90.3" cy="55.7" r="0.5" fill="#f4f4d0"/><circle cx="93.5" cy="65.3" r="0.6" fill="#f4f4d0"/><circle cx="61.5" cy="49.3" r="0.6" fill="#f4f4d0"/><circle cx="82.3" cy="59.7" r="0.5" fill="#f4f4d0"/><rect x="66.5" y="48.1" width="1.0" height="6.0" fill="#6a4424"/><rect x="70.8" y="48.1" width="1.0" height="6.0" fill="#6a4424"/><rect x="66.2" y="44.1" width="6.0" height="4.4" fill="#7a522c"/><polygon points="64.5,44.5 69.2,39.5 73.8,44.5 69.2,46.1" fill="#3a2e28"/><rect x="99.3" y="24.3" width="2.6" height="1.3" fill="#e0343a"/></g>
<use href="#rot" x="136" y="48.6"/>
<use href="#i-plane" transform="translate(5 5.5) scale(.5)"/>
</svg>
<span class="t r" style="left:3.8px;top:65.5px;font-size:6.86px;letter-spacing:0.95px;color:#1f1d1b;-webkit-text-stroke:.14px #1f1d1b;">AIRSTRIP</span>
<div class="tag"></div>
<span class="t" style="left:127.2px;top:68.1px;font-size:5.35px;letter-spacing:1.11px;color:#fff;">-38.000</span>
</div>
<div class="card" style="left:1200px;top:107px">
<svg width="168" height="78" viewBox="0 0 168 78"><use href="#grid"/>
<g clip-path="url(#cardclip)"><polygon points="96.5,15.2 145.5,39.7 80.5,72.2 31.5,47.7" fill="#1f8f25"/><polygon points="96.5,15.7 144.5,39.7 80.5,71.7 32.5,47.7" fill="#33ae33"/><polygon points="61.3,36.5 67.7,39.7 45.3,50.9 38.9,47.7" fill="#6d8a2a" opacity=".7"/><polygon points="93.3,20.5 99.7,23.7 77.3,34.9 70.9,31.7" fill="#6d8a2a" opacity=".5"/><polygon points="120.5,40.5 127.7,44.1 87.7,64.1 80.5,60.5" fill="#6d8a2a" opacity=".7"/><polygon points="114.1,27.7 120.5,30.9 101.3,40.5 94.9,37.3" fill="#6d8a2a" opacity=".45"/><circle cx="138.1" cy="42.9" r="0.6" fill="#f4f4d0"/><circle cx="90.1" cy="18.9" r="0.6" fill="#f4f4d0"/><circle cx="121.3" cy="34.5" r="0.5" fill="#f4f4d0"/><circle cx="128.5" cy="47.7" r="0.6" fill="#f4f4d0"/><circle cx="80.5" cy="23.7" r="0.6" fill="#f4f4d0"/><circle cx="111.7" cy="39.3" r="0.5" fill="#f4f4d0"/><circle cx="118.9" cy="52.5" r="0.6" fill="#f4f4d0"/><circle cx="70.9" cy="28.5" r="0.6" fill="#f4f4d0"/><circle cx="102.1" cy="44.1" r="0.5" fill="#f4f4d0"/><circle cx="109.3" cy="57.3" r="0.6" fill="#f4f4d0"/><circle cx="61.3" cy="33.3" r="0.6" fill="#f4f4d0"/><circle cx="92.5" cy="48.9" r="0.5" fill="#f4f4d0"/><circle cx="99.7" cy="62.1" r="0.6" fill="#f4f4d0"/><circle cx="51.7" cy="38.1" r="0.6" fill="#f4f4d0"/><circle cx="82.9" cy="53.7" r="0.5" fill="#f4f4d0"/><circle cx="90.1" cy="66.9" r="0.6" fill="#f4f4d0"/><circle cx="42.1" cy="42.9" r="0.6" fill="#f4f4d0"/><circle cx="73.3" cy="58.5" r="0.5" fill="#f4f4d0"/><polygon points="55.7,48.1 69.3,54.9 58.1,60.5 44.5,53.7" fill="#5e5e62"/><polygon points="66.1,45.3 75.7,50.1 67.7,54.1 58.1,49.3" fill="#a9a9ac"/><line x1="66.1" y1="46.1" x2="59.2" y2="49.5" stroke="#f0f0f0" stroke-width="0.5"/><line x1="68.0" y1="47.1" x2="61.1" y2="50.5" stroke="#f0f0f0" stroke-width="0.5"/><line x1="69.9" y1="48.0" x2="63.1" y2="51.5" stroke="#f0f0f0" stroke-width="0.5"/><line x1="71.9" y1="49.0" x2="65.0" y2="52.4" stroke="#f0f0f0" stroke-width="0.5"/><line x1="73.8" y1="49.9" x2="66.9" y2="53.4" stroke="#f0f0f0" stroke-width="0.5"/><ellipse cx="77.5" cy="51.3" rx="7.0" ry="3.2" fill="#5a4430"/><rect x="70.5" y="45.7" width="14.0" height="5.6" fill="#6a4e36"/><ellipse cx="77.5" cy="45.7" rx="7.0" ry="3.2" fill="#8a9a7a"/><rect x="72.9" y="40.7" width="9.2" height="5.0" fill="#a6d0a0"/><ellipse cx="77.5" cy="40.7" rx="4.6" ry="2.2" fill="#8fc88f"/><rect x="78.5" y="36.7" width="4.0" height="4.0" fill="#7aa0c8"/><rect x="66.9" y="45.7" width="3.0" height="3.4" fill="#e8c890"/><polygon points="101.4,29.8 102.5,29.1 112.8,34.3 113.3,35.7 111.7,35.5" fill="#ffffff"/><polygon points="108.1,31.7 114.5,28.6 115.6,29.1 109.6,33.2" fill="#f2f2f6"/><polygon points="106.3,32.4 100.5,36.5 101.9,37.0 107.9,33.8" fill="#f2f2f6"/><polygon points="101.7,29.4 103.8,27.5 104.3,28.1 103.3,30.4" fill="#e4e6ee"/><rect x="116.9" y="18.7" width="0.9" height="11.0" fill="#8a5a2a"/><polygon points="117.7,18.7 121.1,19.7 117.7,21.1" fill="#f4f4f4"/></g>
<use href="#rot" x="136" y="48.6"/>
<use href="#i-plane" transform="translate(5 5.5) scale(.5)"/>
</svg>
<span class="t r" style="left:3.8px;top:65.5px;font-size:6.86px;letter-spacing:1.11px;color:#1f1d1b;-webkit-text-stroke:.14px #1f1d1b;">AIRSTRIP PLUS</span>
<div class="tag"></div>
<span class="t" style="left:127.2px;top:68.1px;font-size:5.35px;letter-spacing:1.11px;color:#fff;">-70.000</span>
</div>
<div class="card" style="left:1395px;top:107px">
<svg width="168" height="78" viewBox="0 0 168 78"><use href="#grid"/>
<g clip-path="url(#cardclip)"><polygon points="72.9,48.0 88.3,40.3 103.7,48.0 88.3,55.7" fill="#2fae30"/><polygon points="75.7,48.0 88.3,41.7 100.9,48.0 88.3,54.3" fill="#c4b072"/><ellipse cx="91.3" cy="49.0" rx="5.0" ry="2.2" fill="#d2c084"/><rect x="82.9" y="30.0" width="1.5" height="17.6" fill="#7a4e22"/><polygon points="83.7,26.9 85.7,27.9 87.9,28.1 86.3,29.9 87.3,32.5 83.7,30.1 79.9,32.5 81.1,29.9 79.3,28.1 81.7,27.9" fill="#2a8f2a"/><polygon points="79.7,28.1 83.7,26.7 83.7,29.1" fill="#46b840"/><polygon points="83.7,33.9 85.7,34.9 87.9,35.1 86.3,36.9 87.3,39.5 83.7,37.1 79.9,39.5 81.1,36.9 79.3,35.1 81.7,34.9" fill="#2a8f2a"/><polygon points="79.7,35.1 83.7,33.7 83.7,36.1" fill="#46b840"/><polygon points="86.7,46.6 89.7,43.0 92.3,46.6 89.5,47.8" fill="#3a8ac8"/><polygon points="89.7,43.0 92.3,46.6 89.5,47.8" fill="#2a6aa8"/><polygon points="93.3,49.6 96.7,45.4 99.3,49.0 96.3,50.6" fill="#f0b820"/><polygon points="96.7,45.4 99.3,49.0 96.3,50.6" fill="#d89810"/><ellipse cx="96.9" cy="45.0" rx="1.6" ry="1.4" fill="#3aa830"/><ellipse cx="96.4" cy="44.5" rx="0.8" ry="0.7" fill="#75c26e"/><ellipse cx="87.3" cy="52.0" rx="0.8" ry="0.6" fill="#d8482a"/></g>
<use href="#i-house" transform="translate(5 5.5) scale(.5)"/>
<use href="#i-group" transform="translate(5 50.5) scale(.5)"/>
</svg>
<span class="t r" style="left:3.8px;top:65.5px;font-size:6.86px;letter-spacing:0.93px;color:#1f1d1b;-webkit-text-stroke:.14px #1f1d1b;">CAMPING</span>
<div class="tag"></div>
<span class="t" style="left:127.2px;top:68.1px;font-size:5.35px;letter-spacing:1.11px;color:#fff;">-19.000</span>
</div>
<div class="card" style="left:1590px;top:107px">
<svg width="168" height="78" viewBox="0 0 168 78"><use href="#grid"/>
<g clip-path="url(#cardclip)"><polygon points="72.6,48.0 88.0,40.3 103.4,48.0 88.0,55.7" fill="#2fae30"/><polygon points="75.4,48.0 88.0,41.7 100.6,48.0 88.0,54.3" fill="#8a6a48"/><rect x="74.5" y="35.4" width="1.1" height="9.0" fill="#7a4e22"/><path d="M75.0 32.6l2.2 1.1l2.8 0.2l-1.8 1.6l1.4 3.0l-4.6 -2.5l-4.6 2.5l1.4 -3.0Z" fill="#2f9a30"/><path d="M70.0 34.5l5.0 -1.8l0.0 2.6Z" fill="#6db86e"/><polygon points="76.4,38.0 84.6,42.0 84.6,53.0 76.4,49.0" fill="#4e463e"/><polygon points="84.6,42.0 91.0,38.8 91.0,49.8 84.6,53.0" fill="#3a332c"/><polygon points="76.4,38.0 82.8,33.0 91.0,38.8 84.6,42.0" fill="#2e2823"/><polyline points="78.0,38.8 78.0,49.6" fill="none" stroke="#5e554b" stroke-width="0.5"/><polyline points="80.0,39.8 80.0,50.6" fill="none" stroke="#5e554b" stroke-width="0.5"/><polyline points="82.0,40.8 82.0,51.6" fill="none" stroke="#5e554b" stroke-width="0.5"/><polyline points="84.0,41.8 84.0,52.6" fill="none" stroke="#5e554b" stroke-width="0.5"/><rect x="85.9" y="44.0" width="1.1" height="7.6" fill="#7a4e22"/><path d="M86.4 41.2l2.2 1.1l2.8 0.2l-1.8 1.6l1.4 3.0l-4.6 -2.5l-4.6 2.5l1.4 -3.0Z" fill="#2f9a30"/><path d="M81.4 43.1l5.0 -1.8l0.0 2.6Z" fill="#6db86e"/><polygon points="91.6,43.4 94.6,41.0 97.6,43.4" fill="#e8302a"/><polygon points="93.6,43.4 94.6,41.0 95.6,43.4" fill="#ffffff"/><rect x="94.3" y="43.4" width="0.7" height="3.4" fill="#e8e8e8"/><ellipse cx="89.6" cy="53.0" rx="2.0" ry="1.7" fill="#2f9a30"/><ellipse cx="89.0" cy="52.4" rx="1.0" ry="0.9" fill="#6db86e"/><ellipse cx="92.0" cy="51.4" rx="1.6" ry="1.4" fill="#38a838"/><ellipse cx="91.5" cy="50.9" rx="0.8" ry="0.7" fill="#73c273"/><ellipse cx="87.0" cy="54.6" rx="0.7" ry="0.6" fill="#e8302a"/></g>
<use href="#i-house" transform="translate(5 5.5) scale(.5)"/>
<use href="#i-group" transform="translate(5 50.5) scale(.5)"/>
</svg>
<span class="t r" style="left:3.8px;top:65.5px;font-size:6.86px;letter-spacing:1.27px;color:#1f1d1b;-webkit-text-stroke:.14px #1f1d1b;">STAY4EVER</span>
<div class="tag"></div>
<span class="t" style="left:127.2px;top:68.1px;font-size:5.35px;letter-spacing:1.11px;color:#fff;">-37.000</span>
</div>
<div class="card" style="left:615px;top:211px">
<svg width="168" height="78" viewBox="0 0 168 78"><use href="#grid"/>
<g clip-path="url(#cardclip)"><polygon points="72.9,47.6 87.5,40.6 102.1,47.6 87.5,54.6" fill="#f6dfae"/><polygon points="75.5,47.6 87.5,42.0 99.5,47.6 87.5,53.2" fill="#f1d295"/><polygon points="78.3,41.8 86.1,45.4 86.1,52.4 78.3,48.6" fill="#6f9f84"/><polygon points="86.1,45.4 97.9,40.8 97.9,47.4 86.1,52.4" fill="#7fb897"/><polygon points="78.3,41.8 89.1,37.0 97.9,40.8 86.1,45.4" fill="#55564c"/><polygon points="78.3,41.8 89.1,37.0 90.1,37.5 79.5,42.4" fill="#7a7c6e"/><polygon points="79.5,44.4 84.9,46.8 84.9,50.8 79.5,48.2" fill="#cdb48a"/><polygon points="80.1,45.0 81.5,45.6 81.5,49.0 80.1,48.4" fill="#3f5a50"/><polygon points="82.5,46.0 84.1,46.7 84.1,50.2 82.5,49.5" fill="#3f5a50"/><polygon points="91.9,44.8 95.9,43.2 95.9,45.8 91.9,47.4" fill="#dbe9f3"/><polygon points="92.9,45.0 94.9,44.2 94.9,45.6 92.9,46.4" fill="#3a6fc0"/></g>
<use href="#i-house" transform="translate(5 5.5) scale(.5)"/>
<use href="#i-couple" transform="translate(5 50.6) scale(.5)"/>
</svg>
<span class="t r" style="left:3.8px;top:65.5px;font-size:6.86px;letter-spacing:0.81px;color:#1f1d1b;-webkit-text-stroke:.14px #1f1d1b;">OCEAN VIEW</span>
<div class="tag"></div>
<span class="t" style="left:125.0px;top:68.1px;font-size:5.35px;letter-spacing:1.06px;color:#fff;">-160.000</span>
</div>
<div class="card" style="left:810px;top:211px">
<svg width="168" height="78" viewBox="0 0 168 78"><use href="#grid"/>
<g clip-path="url(#cardclip)"><polygon points="96.5,31.4 113.8,40.0 80.5,56.6 63.2,48.0" fill="#f3d9a6"/><polygon points="96.5,32.0 112.5,40.0 80.5,56.0 64.5,48.0" fill="#2fa532"/><polygon points="96.5,33.3 109.9,40.0 80.5,54.7 67.1,48.0" fill="#46b840"/><ellipse cx="76.1" cy="47.4" rx="3.6" ry="2.2" fill="#8f8f98"/><ellipse cx="76.1" cy="47.2" rx="2.8" ry="1.6" fill="#6cc0ee"/><ellipse cx="83.5" cy="47.6" rx="3.0" ry="1.4" fill="#e8c52e"/><ellipse cx="79.5" cy="50.0" rx="2.4" ry="1.2" fill="#b7b9c2"/><ellipse cx="92.1" cy="47.2" rx="4.6" ry="2.0" fill="#8a5a2a"/><rect x="91.7" y="33.6" width="13.2" height="6.4" fill="#a2652a"/><ellipse cx="98.3" cy="40.0" rx="6.6" ry="2.2" fill="#a2652a"/><rect x="93.5" y="35.4" width="1.1" height="3.0" fill="#5aa8e0"/><rect x="95.9" y="35.4" width="1.1" height="3.0" fill="#5aa8e0"/><rect x="99.1" y="35.4" width="1.1" height="3.0" fill="#5aa8e0"/><rect x="101.5" y="35.4" width="1.1" height="3.0" fill="#5aa8e0"/><polygon points="90.3,33.8 98.3,26.4 106.3,33.8 105.1,35.6 98.3,36.6 91.5,35.6" fill="#8e5e2a"/><polygon points="98.3,26.4 106.3,33.8 105.1,35.6 99.1,36.6" fill="#6b431c"/><rect x="97.7" y="25.4" width="1.4" height="1.6" fill="#5a3a18"/><rect x="81.1" y="39.2" width="11.6" height="6.2" fill="#a2652a"/><ellipse cx="86.9" cy="45.4" rx="5.8" ry="2.0" fill="#a2652a"/><rect x="82.5" y="41.0" width="1.1" height="3.0" fill="#5aa8e0"/><rect x="84.7" y="41.0" width="1.1" height="3.0" fill="#5aa8e0"/><rect x="87.9" y="41.0" width="1.1" height="3.0" fill="#5aa8e0"/><rect x="90.1" y="41.0" width="1.1" height="3.0" fill="#5aa8e0"/><polygon points="79.7,39.4 86.9,32.6 94.1,39.4 93.1,41.0 86.9,42.0 80.7,41.0" fill="#94622c"/><polygon points="86.9,32.6 94.1,39.4 93.1,41.0 87.7,42.0" fill="#6b431c"/><rect x="86.3" y="31.6" width="1.3" height="1.5" fill="#5a3a18"/></g>
<use href="#rot" x="136" y="48.6"/>
<use href="#i-house" transform="translate(5 5.5) scale(.5)"/>
<use href="#i-couple" transform="translate(5 50.6) scale(.5)"/>
</svg>
<span class="t r" style="left:3.8px;top:65.5px;font-size:6.86px;letter-spacing:1.17px;color:#1f1d1b;-webkit-text-stroke:.14px #1f1d1b;">VILLA &amp; SPA</span>
<div class="tag"></div>
<span class="t" style="left:125.0px;top:68.1px;font-size:5.35px;letter-spacing:1.06px;color:#fff;">-270.000</span>
</div>
<div class="card" style="left:1005px;top:211px">
<svg width="168" height="78" viewBox="0 0 168 78"><use href="#grid"/>
<g clip-path="url(#cardclip)"><polygon points="118.8,31.0 137.2,40.2 73.2,72.2 54.8,63.0" fill="#2fae30"/><polygon points="120.4,32.8 133.7,39.4 71.6,70.4 58.3,63.8" fill="#333336"/><polygon points="122.6,33.9 131.4,38.3 69.4,69.3 60.6,64.9" fill="#48484c"/><line x1="120.0" y1="39.6" x2="72.0" y2="63.6" stroke="#f4f4f4" stroke-width="0.9" stroke-dasharray="1.6 1.6"/><line x1="118.8" y1="34.2" x2="61.2" y2="63.0" stroke="#e8e8e8" stroke-width="0.5" stroke-dasharray=".8 1.6"/><line x1="130.8" y1="40.2" x2="73.2" y2="69.0" stroke="#e8e8e8" stroke-width="0.5" stroke-dasharray=".8 1.6"/><line x1="61.2" y1="64.3" x2="66.0" y2="61.9" stroke="#f4f4f4" stroke-width="0.7"/><line x1="121.4" y1="34.2" x2="116.6" y2="36.6" stroke="#f4f4f4" stroke-width="0.7"/><line x1="63.6" y1="65.5" x2="68.4" y2="63.1" stroke="#f4f4f4" stroke-width="0.7"/><line x1="123.7" y1="35.4" x2="118.9" y2="37.8" stroke="#f4f4f4" stroke-width="0.7"/><line x1="65.9" y1="66.6" x2="70.7" y2="64.2" stroke="#f4f4f4" stroke-width="0.7"/><line x1="126.1" y1="36.6" x2="121.3" y2="39.0" stroke="#f4f4f4" stroke-width="0.7"/><line x1="68.3" y1="67.8" x2="73.1" y2="65.4" stroke="#f4f4f4" stroke-width="0.7"/><line x1="128.4" y1="37.7" x2="123.6" y2="40.1" stroke="#f4f4f4" stroke-width="0.7"/><line x1="70.6" y1="69.0" x2="75.4" y2="66.6" stroke="#f4f4f4" stroke-width="0.7"/><line x1="130.8" y1="38.9" x2="126.0" y2="41.3" stroke="#f4f4f4" stroke-width="0.7"/><polygon points="105.2,24.2 118.8,31.0 79.6,50.6 66.0,43.8" fill="#5d5e58"/><polygon points="105.2,24.2 106.8,25.0 67.6,44.6 66.0,43.8" fill="#2fae30"/><polygon points="105.2,24.2 118.8,31.0 117.2,31.8 103.6,25.0" fill="#2fae30"/><ellipse cx="102.0" cy="32.2" rx="0.7" ry="0.5" fill="#d8c838"/><ellipse cx="97.2" cy="37.8" rx="0.7" ry="0.5" fill="#d8c838"/><ellipse cx="86.0" cy="38.6" rx="0.7" ry="0.5" fill="#d8c838"/><ellipse cx="89.2" cy="43.4" rx="0.7" ry="0.5" fill="#d8c838"/><ellipse cx="108.4" cy="30.6" rx="0.7" ry="0.5" fill="#d8c838"/><polygon points="53.2,54.2 62.8,59.0 53.5,63.6 43.9,58.8" fill="#77777a"/><polygon points="47.3,53.2 60.1,59.6 60.1,52.2 47.3,45.8" fill="#8a7458"/><polygon points="70.8,54.2 60.1,59.6 60.1,52.2 70.8,46.8" fill="#5f4c38"/><polygon points="58.0,40.4 70.8,46.8 60.1,52.2 47.3,45.8" fill="#5a4a3c"/><polygon points="58.0,40.4 70.8,46.8 65.5,47.2 52.7,40.8" fill="#6a5848"/><polygon points="47.3,45.8 60.1,52.2 65.5,47.2 52.7,40.8" fill="#4e4034"/><polygon points="53.7,54.9 57.7,56.9 57.7,54.4 53.7,52.4" fill="#e8c838"/><polygon points="59.3,48.4 70.8,54.2 70.8,47.2 59.3,41.4" fill="#4f79cf"/><polygon points="79.6,49.8 70.8,54.2 70.8,47.2 79.6,42.8" fill="#35579f"/><polygon points="68.1,37.0 79.6,42.8 70.8,47.2 59.3,41.4" fill="#55524c"/><line x1="78.8" y1="49.6" x2="78.8" y2="43.8" stroke="#8fb4f0" stroke-width="0.5"/><line x1="76.7" y1="50.6" x2="76.7" y2="44.8" stroke="#8fb4f0" stroke-width="0.5"/><line x1="74.6" y1="51.7" x2="74.6" y2="45.9" stroke="#8fb4f0" stroke-width="0.5"/><line x1="72.6" y1="52.7" x2="72.6" y2="46.9" stroke="#8fb4f0" stroke-width="0.5"/><polygon points="85.9,35.3 87.1,34.5 97.7,39.9 98.2,41.2 96.5,41.1" fill="#ffffff"/><polygon points="92.8,37.2 99.4,34.0 100.5,34.5 94.3,38.7" fill="#f2f2f6"/><polygon points="91.0,37.9 85.1,42.1 86.4,42.6 92.6,39.4" fill="#f2f2f6"/><polygon points="86.3,34.8 88.4,32.8 88.9,33.5 87.9,35.8" fill="#e4e6ee"/><rect x="120.8" y="21.8" width="2.6" height="1.3" fill="#e0343a"/></g>
<use href="#rot" x="136" y="48.6"/>
<use href="#i-plane" transform="translate(5 5.5) scale(.5)"/>
</svg>
<span class="t r" style="left:3.8px;top:65.5px;font-size:6.86px;letter-spacing:0.92px;color:#1f1d1b;-webkit-text-stroke:.14px #1f1d1b;">AIRPORT</span>
<div class="tag"></div>
<span class="t" style="left:125.0px;top:68.1px;font-size:5.35px;letter-spacing:1.06px;color:#fff;">-130.000</span>
</div>
<div class="card" style="left:1200px;top:211px">
<svg width="168" height="78" viewBox="0 0 168 78"><use href="#grid"/>
<g clip-path="url(#cardclip)"><polygon points="104.5,7.7 152.5,31.7 72.5,71.7 24.5,47.7" fill="#2fae30"/><polygon points="104.5,8.5 136.5,24.5 57.3,64.1 25.3,48.1" fill="#5b5b5a"/><polygon points="136.5,23.7 152.5,31.7 72.5,71.7 56.5,63.7" fill="#2fae30"/><polygon points="138.1,25.5 149.0,30.9 70.9,69.9 60.0,64.5" fill="#333336"/><polygon points="140.3,26.6 146.7,29.8 68.7,68.8 62.3,65.6" fill="#48484c"/><line x1="136.5" y1="31.7" x2="72.5" y2="63.7" stroke="#f4f4f4" stroke-width="0.9" stroke-dasharray="1.6 1.6"/><line x1="136.5" y1="26.9" x2="62.9" y2="63.7" stroke="#e8e8e8" stroke-width="0.5" stroke-dasharray=".8 1.6"/><line x1="146.1" y1="31.7" x2="72.5" y2="68.5" stroke="#e8e8e8" stroke-width="0.5" stroke-dasharray=".8 1.6"/><line x1="62.9" y1="65.0" x2="67.7" y2="62.6" stroke="#f4f4f4" stroke-width="0.7"/><line x1="139.1" y1="26.9" x2="134.3" y2="29.3" stroke="#f4f4f4" stroke-width="0.7"/><line x1="64.7" y1="65.9" x2="69.5" y2="63.5" stroke="#f4f4f4" stroke-width="0.7"/><line x1="140.8" y1="27.8" x2="136.0" y2="30.2" stroke="#f4f4f4" stroke-width="0.7"/><line x1="66.4" y1="66.7" x2="71.2" y2="64.3" stroke="#f4f4f4" stroke-width="0.7"/><line x1="142.6" y1="28.7" x2="137.8" y2="31.1" stroke="#f4f4f4" stroke-width="0.7"/><line x1="68.2" y1="67.6" x2="73.0" y2="65.2" stroke="#f4f4f4" stroke-width="0.7"/><line x1="144.3" y1="29.5" x2="139.5" y2="31.9" stroke="#f4f4f4" stroke-width="0.7"/><line x1="69.9" y1="68.5" x2="74.7" y2="66.1" stroke="#f4f4f4" stroke-width="0.7"/><line x1="146.1" y1="30.4" x2="141.3" y2="32.8" stroke="#f4f4f4" stroke-width="0.7"/><polygon points="45.3,37.3 76.5,52.9 55.7,63.3 24.5,47.7" fill="#707070"/><line x1="43.7" y1="41.3" x2="30.9" y2="47.7" stroke="#c8c8c8" stroke-width="0.4"/><line x1="47.5" y1="43.2" x2="34.7" y2="49.6" stroke="#c8c8c8" stroke-width="0.4"/><line x1="51.4" y1="45.1" x2="38.6" y2="51.5" stroke="#c8c8c8" stroke-width="0.4"/><line x1="55.2" y1="47.1" x2="42.4" y2="53.5" stroke="#c8c8c8" stroke-width="0.4"/><line x1="59.1" y1="49.0" x2="46.3" y2="55.4" stroke="#c8c8c8" stroke-width="0.4"/><line x1="62.9" y1="50.9" x2="50.1" y2="57.3" stroke="#c8c8c8" stroke-width="0.4"/><line x1="66.7" y1="52.8" x2="53.9" y2="59.2" stroke="#c8c8c8" stroke-width="0.4"/><polygon points="119.7,24.9 125.3,27.7 112.5,34.1 106.9,31.3" fill="#2fae30"/><polygon points="94.1,37.7 99.7,40.5 85.3,47.7 79.7,44.9" fill="#2fae30"/><polygon points="70.1,49.7 75.7,52.5 58.1,61.3 52.5,58.5" fill="#2fae30"/><line x1="114.1" y1="17.3" x2="93.3" y2="35.7" stroke="#3c3c3c" stroke-width="0.7"/><line x1="120.5" y1="20.5" x2="88.5" y2="30.1" stroke="#3c3c3c" stroke-width="0.7"/><polygon points="44.5,37.7 53.3,42.1 53.3,33.1 44.5,28.7" fill="#3f9fdc"/><polygon points="110.9,13.3 53.3,42.1 53.3,33.1 110.9,4.3" fill="#2f86c4"/><polygon points="102.1,-0.1 110.9,4.3 53.3,33.1 44.5,28.7" fill="#d9d5cc"/><line x1="110.1" y1="12.7" x2="110.1" y2="5.7" stroke="#8fd0f4" stroke-width="0.5"/><line x1="106.0" y1="14.7" x2="106.0" y2="7.7" stroke="#8fd0f4" stroke-width="0.5"/><line x1="101.9" y1="16.8" x2="101.9" y2="9.8" stroke="#8fd0f4" stroke-width="0.5"/><line x1="97.9" y1="18.8" x2="97.9" y2="11.8" stroke="#8fd0f4" stroke-width="0.5"/><line x1="93.8" y1="20.9" x2="93.8" y2="13.9" stroke="#8fd0f4" stroke-width="0.5"/><line x1="89.7" y1="22.9" x2="89.7" y2="15.9" stroke="#8fd0f4" stroke-width="0.5"/><line x1="85.6" y1="24.9" x2="85.6" y2="17.9" stroke="#8fd0f4" stroke-width="0.5"/><line x1="81.5" y1="27.0" x2="81.5" y2="20.0" stroke="#8fd0f4" stroke-width="0.5"/><line x1="77.5" y1="29.0" x2="77.5" y2="22.0" stroke="#8fd0f4" stroke-width="0.5"/><line x1="73.4" y1="31.1" x2="73.4" y2="24.1" stroke="#8fd0f4" stroke-width="0.5"/><line x1="69.3" y1="33.1" x2="69.3" y2="26.1" stroke="#8fd0f4" stroke-width="0.5"/><line x1="65.2" y1="35.1" x2="65.2" y2="28.1" stroke="#8fd0f4" stroke-width="0.5"/><line x1="61.1" y1="37.2" x2="61.1" y2="30.2" stroke="#8fd0f4" stroke-width="0.5"/><line x1="57.1" y1="39.2" x2="57.1" y2="32.2" stroke="#8fd0f4" stroke-width="0.5"/><line x1="104.3" y1="1.0" x2="46.7" y2="29.8" stroke="#bdb8ae" stroke-width="0.4"/><line x1="106.6" y1="2.1" x2="49.0" y2="30.9" stroke="#bdb8ae" stroke-width="0.4"/><line x1="108.8" y1="3.2" x2="51.2" y2="32.0" stroke="#bdb8ae" stroke-width="0.4"/><line x1="98.0" y1="1.9" x2="106.8" y2="6.3" stroke="#bdb8ae" stroke-width="0.4"/><line x1="93.9" y1="4.0" x2="102.7" y2="8.4" stroke="#bdb8ae" stroke-width="0.4"/><line x1="89.8" y1="6.0" x2="98.6" y2="10.4" stroke="#bdb8ae" stroke-width="0.4"/><line x1="85.7" y1="8.1" x2="94.5" y2="12.5" stroke="#bdb8ae" stroke-width="0.4"/><line x1="81.5" y1="10.1" x2="90.3" y2="14.5" stroke="#bdb8ae" stroke-width="0.4"/><line x1="77.4" y1="12.2" x2="86.2" y2="16.6" stroke="#bdb8ae" stroke-width="0.4"/><line x1="73.3" y1="14.2" x2="82.1" y2="18.6" stroke="#bdb8ae" stroke-width="0.4"/><line x1="69.2" y1="16.3" x2="78.0" y2="20.7" stroke="#bdb8ae" stroke-width="0.4"/><line x1="65.1" y1="18.4" x2="73.9" y2="22.8" stroke="#bdb8ae" stroke-width="0.4"/><line x1="61.0" y1="20.4" x2="69.8" y2="24.8" stroke="#bdb8ae" stroke-width="0.4"/><line x1="56.9" y1="22.5" x2="65.7" y2="26.9" stroke="#bdb8ae" stroke-width="0.4"/><line x1="52.8" y1="24.5" x2="61.6" y2="28.9" stroke="#bdb8ae" stroke-width="0.4"/><line x1="48.6" y1="26.6" x2="57.4" y2="31.0" stroke="#bdb8ae" stroke-width="0.4"/><line x1="106.9" y1="15.3" x2="106.9" y2="11.9" stroke="#8a6a4a" stroke-width="1.2"/><line x1="101.1" y1="18.2" x2="101.1" y2="14.8" stroke="#8a6a4a" stroke-width="1.2"/><line x1="95.4" y1="21.1" x2="95.4" y2="17.7" stroke="#8a6a4a" stroke-width="1.2"/><line x1="89.6" y1="23.9" x2="89.6" y2="20.5" stroke="#8a6a4a" stroke-width="1.2"/><line x1="83.9" y1="26.8" x2="83.9" y2="23.4" stroke="#8a6a4a" stroke-width="1.2"/><line x1="78.1" y1="29.7" x2="78.1" y2="26.3" stroke="#8a6a4a" stroke-width="1.2"/><line x1="72.3" y1="32.6" x2="72.3" y2="29.2" stroke="#8a6a4a" stroke-width="1.2"/><polygon points="90.1,21.1 96.5,24.3 96.5,20.3 90.1,17.1" fill="#3f9fdc"/><polygon points="101.3,21.9 96.5,24.3 96.5,20.3 101.3,17.9" fill="#2f86c4"/><polygon points="94.9,14.7 101.3,17.9 96.5,20.3 90.1,17.1" fill="#d9d5cc"/><polygon points="70.1,31.1 78.1,35.1 78.1,31.1 70.1,27.1" fill="#3f9fdc"/><polygon points="82.9,32.7 78.1,35.1 78.1,31.1 82.9,28.7" fill="#2f86c4"/><polygon points="74.9,24.7 82.9,28.7 78.1,31.1 70.1,27.1" fill="#d9d5cc"/><polygon points="39.4,41.1 60.2,51.5 60.2,43.5 39.4,33.1" fill="#46a6e2"/><polygon points="70.1,46.5 60.2,51.5 60.2,43.5 70.1,38.5" fill="#2f86c4"/><polygon points="49.3,28.1 70.1,38.5 60.2,43.5 39.4,33.1" fill="#d9d5cc"/><line x1="40.2" y1="40.7" x2="40.2" y2="34.3" stroke="#a2d8f6" stroke-width="0.5"/><line x1="42.6" y1="41.9" x2="42.6" y2="35.5" stroke="#a2d8f6" stroke-width="0.5"/><line x1="45.0" y1="43.1" x2="45.0" y2="36.7" stroke="#a2d8f6" stroke-width="0.5"/><line x1="47.4" y1="44.3" x2="47.4" y2="37.9" stroke="#a2d8f6" stroke-width="0.5"/><line x1="49.8" y1="45.5" x2="49.8" y2="39.1" stroke="#a2d8f6" stroke-width="0.5"/><line x1="52.2" y1="46.7" x2="52.2" y2="40.3" stroke="#a2d8f6" stroke-width="0.5"/><line x1="54.6" y1="47.9" x2="54.6" y2="41.5" stroke="#a2d8f6" stroke-width="0.5"/><line x1="57.0" y1="49.1" x2="57.0" y2="42.7" stroke="#a2d8f6" stroke-width="0.5"/><line x1="59.4" y1="50.3" x2="59.4" y2="43.9" stroke="#a2d8f6" stroke-width="0.5"/><line x1="46.8" y1="29.3" x2="67.6" y2="39.7" stroke="#bdb8ae" stroke-width="0.4"/><line x1="44.3" y1="30.5" x2="65.1" y2="40.9" stroke="#bdb8ae" stroke-width="0.4"/><line x1="41.9" y1="31.8" x2="62.7" y2="42.2" stroke="#bdb8ae" stroke-width="0.4"/><polygon points="104.0,7.9 108.0,9.9 108.0,-11.1 104.0,-13.1" fill="#a89070"/><polygon points="112.0,7.9 108.0,9.9 108.0,-11.1 112.0,-13.1" fill="#8a7458"/><polygon points="108.0,-15.1 112.0,-13.1 108.0,-11.1 104.0,-13.1" fill="#8a7458"/><polygon points="78.5,31.1 79.3,30.0 90.5,25.5 91.6,25.8 89.7,27.1 80.9,31.6" fill="#ffffff"/><polygon points="84.1,27.9 79.3,24.2 80.6,23.9 86.5,27.4" fill="#f0f0f4"/><polygon points="84.4,29.2 88.9,33.5 90.2,33.2 86.8,28.4" fill="#f0f0f4"/><polygon points="90.0,25.7 91.3,23.1 92.1,23.4 91.5,26.0" fill="#e2e4ec"/><ellipse cx="90.5" cy="30.7" rx="2.0" ry="1.2" fill="#f06ac0"/></g>
<use href="#rot" x="136" y="48.6"/>
<use href="#i-plane" transform="translate(5 5.5) scale(.5)"/>
</svg>
<span class="t r" style="left:3.8px;top:65.5px;font-size:6.86px;letter-spacing:1.03px;color:#1f1d1b;-webkit-text-stroke:.14px #1f1d1b;">AIRPORT XL</span>
<div class="tag"></div>
<span class="t" style="left:125.0px;top:68.1px;font-size:5.35px;letter-spacing:1.06px;color:#fff;">-480.000</span>
</div>
<div class="card" style="left:1395px;top:211px">
<svg width="168" height="78" viewBox="0 0 168 78"><use href="#grid"/>
<g clip-path="url(#cardclip)"><polygon points="72.9,48.0 88.3,40.3 103.7,48.0 88.3,55.7" fill="#2fae30"/><polygon points="74.9,48.0 88.3,41.3 101.7,48.0 88.3,54.7" fill="#41bc3e"/><ellipse cx="86.3" cy="51.6" rx="4.6" ry="1.8" fill="#c8a868"/><rect x="81.4" y="35.8" width="1.1" height="5.6" fill="#7a4e22"/><path d="M81.9 33.0l2.2 1.1l2.8 0.2l-1.8 1.6l1.4 3.0l-4.6 -2.5l-4.6 2.5l1.4 -3.0Z" fill="#2f9a30"/><path d="M76.9 34.9l5.0 -1.8l0.0 2.6Z" fill="#6db86e"/><polygon points="82.9,42.4 92.3,47.0 92.3,51.4 82.9,46.8" fill="#fbfbf6"/><polygon points="92.3,47.0 99.3,43.6 99.3,48.0 92.3,51.4" fill="#d9d4c8"/><polygon points="81.7,42.6 88.9,37.0 99.3,42.0 92.3,47.4" fill="#e9c478"/><polygon points="88.9,37.0 99.3,42.0 100.3,44.0 92.3,47.4 92.3,46.0" fill="#c89848"/><polygon points="81.7,42.6 88.9,37.0 90.3,37.6 83.1,43.2" fill="#f6dc9c"/><polygon points="84.7,45.6 86.1,46.3 86.1,49.0 84.7,48.3" fill="#6ab8e8"/><polygon points="87.3,46.9 88.7,47.6 88.7,50.3 87.3,49.6" fill="#6ab8e8"/><polygon points="89.9,48.2 91.3,48.9 91.3,51.6 89.9,50.9" fill="#6ab8e8"/><polygon points="94.3,47.0 96.9,45.7 96.9,48.4 94.3,49.7" fill="#6ab8e8"/></g>
<use href="#i-house" transform="translate(5 5.5) scale(.5)"/>
<use href="#i-group" transform="translate(5 50.5) scale(.5)"/>
</svg>
<span class="t r" style="left:3.8px;top:65.5px;font-size:6.86px;letter-spacing:1.00px;color:#1f1d1b;-webkit-text-stroke:.14px #1f1d1b;">TINY HOUSE</span>
<div class="tag"></div>
<span class="t" style="left:127.2px;top:68.1px;font-size:5.35px;letter-spacing:1.11px;color:#fff;">-68.000</span>
</div>
<div class="card" style="left:1590px;top:211px">
<svg width="168" height="78" viewBox="0 0 168 78"><use href="#grid"/>
<g clip-path="url(#cardclip)"><polygon points="96.5,30.7 113.8,39.3 80.5,55.9 63.2,47.3" fill="#1a4a1c"/><polygon points="96.5,31.6 111.9,39.3 80.5,55.0 65.1,47.3" fill="#38b236"/><polygon points="89.8,40.7 93.6,42.7 74.7,52.1 70.9,50.2" fill="#f1e2b8"/><polygon points="82.6,39.5 96.0,46.3 96.0,32.7 82.6,25.9" fill="#f8f2e6"/><polygon points="109.9,39.3 96.0,46.3 96.0,32.7 109.9,25.7" fill="#d6ccb8"/><polygon points="96.5,19.0 109.9,25.7 96.0,32.7 82.6,25.9" fill="#f4ecdc"/><polygon points="84.5,32.5 86.7,33.6 86.7,29.6 84.5,28.5" fill="#8fc8ee"/><polygon points="84.5,38.5 86.7,39.6 86.7,35.6 84.5,34.5" fill="#8fc8ee"/><polygon points="88.7,34.6 90.9,35.7 90.9,31.7 88.7,30.6" fill="#8fc8ee"/><polygon points="88.7,40.6 90.9,41.7 90.9,37.7 88.7,36.6" fill="#8fc8ee"/><polygon points="92.8,36.7 95.1,37.8 95.1,33.8 92.8,32.7" fill="#8fc8ee"/><polygon points="92.8,42.7 95.1,43.8 95.1,39.8 92.8,38.7" fill="#8fc8ee"/><polygon points="108.0,32.3 105.8,33.4 105.8,29.4 108.0,28.3" fill="#6aa8d8"/><polygon points="108.0,38.3 105.8,39.4 105.8,35.4 108.0,34.3" fill="#6aa8d8"/><polygon points="103.9,34.3 101.6,35.5 101.6,31.5 103.9,30.3" fill="#6aa8d8"/><polygon points="103.9,40.3 101.6,41.5 101.6,37.5 103.9,36.3" fill="#6aa8d8"/><polygon points="99.7,36.4 97.5,37.5 97.5,33.5 99.7,32.4" fill="#6aa8d8"/><polygon points="99.7,42.4 97.5,43.5 97.5,39.5 99.7,38.4" fill="#6aa8d8"/><polygon points="96.5,17.7 112.5,25.7 96.3,19.4" fill="#f0cf88"/><polygon points="96.5,17.7 80.0,25.9 96.3,19.4" fill="#f0cf88"/><polygon points="80.0,25.9 96.0,33.9 96.3,19.4" fill="#e4b866"/><polygon points="112.5,25.7 96.0,33.9 96.3,19.4" fill="#c4923e"/><rect x="74.0" y="39.7" width="1.1" height="9.0" fill="#7a4e22"/><path d="M74.5 36.9l2.2 1.1l2.8 0.2l-1.8 1.6l1.4 3.0l-4.6 -2.5l-4.6 2.5l1.4 -3.0Z" fill="#2f9a30"/><path d="M69.5 38.8l5.0 -1.8l0.0 2.6Z" fill="#6db86e"/><rect x="78.6" y="41.3" width="1.1" height="9.6" fill="#7a4e22"/><path d="M79.1 38.5l2.2 1.1l2.8 0.2l-1.8 1.6l1.4 3.0l-4.6 -2.5l-4.6 2.5l1.4 -3.0Z" fill="#2f9a30"/><path d="M74.1 40.4l5.0 -1.8l0.0 2.6Z" fill="#6db86e"/><rect x="103.6" y="27.9" width="1.1" height="8.0" fill="#7a4e22"/><path d="M104.1 25.1l2.2 1.1l2.8 0.2l-1.8 1.6l1.4 3.0l-4.6 -2.5l-4.6 2.5l1.4 -3.0Z" fill="#2f9a30"/><path d="M99.1 27.0l5.0 -1.8l0.0 2.6Z" fill="#6db86e"/><ellipse cx="84.5" cy="52.9" rx="1.8" ry="1.5" fill="#2f9a30"/><ellipse cx="84.0" cy="52.4" rx="0.9" ry="0.8" fill="#6db86e"/></g>
<use href="#rot" x="136" y="48.6"/>
<use href="#i-house" transform="translate(5 5.5) scale(.5)"/>
<use href="#i-group" transform="translate(5 50.5) scale(.5)"/>
</svg>
<span class="t r" style="left:3.8px;top:65.5px;font-size:6.86px;letter-spacing:0.58px;color:#1f1d1b;-webkit-text-stroke:.14px #1f1d1b;">GUESTHOUSE</span>
<div class="tag"></div>
<span class="t" style="left:125.0px;top:68.1px;font-size:5.35px;letter-spacing:1.06px;color:#fff;">-124.000</span>
</div>
<div class="card" style="left:615px;top:315px">
<svg width="168" height="78" viewBox="0 0 168 78"><use href="#grid"/>
<g clip-path="url(#cardclip)"><polygon points="56.7,38.4 88.7,54.4 120.7,38.4 120.7,40.8 88.7,57.0 56.7,40.8" fill="#a87a40"/><polygon points="56.7,38.4 88.7,22.4 120.7,38.4 88.7,54.4" fill="#2fa136"/><polygon points="59.7,38.4 88.7,23.9 117.7,38.4 88.7,52.9" fill="#3fb03f"/><polygon points="61.7,40.4 73.1,34.8 96.3,47.0 85.3,52.4" fill="#ecd09a"/><polygon points="64.7,40.6 72.7,36.8 93.1,47.0 85.3,50.8" fill="#5cc0ee"/><polygon points="64.7,40.6 72.7,36.8 74.1,37.5 66.1,41.3" fill="#a8e2fa"/><ellipse cx="82.7" cy="45.8" rx="1.4" ry="0.8" fill="#e85a6a"/><rect x="61.2" y="27.4" width="1.1" height="8.0" fill="#7a4e22"/><path d="M61.7 24.6l2.2 1.1l2.8 0.2l-1.8 1.6l1.4 3.0l-4.6 -2.5l-4.6 2.5l1.4 -3.0Z" fill="#2f9a2c"/><path d="M56.7 26.5l5.0 -1.8l0.0 2.6Z" fill="#6db86b"/><rect x="66.7" y="23.9" width="1.1" height="8.5" fill="#7a4e22"/><path d="M67.2 21.1l2.2 1.1l2.8 0.2l-1.8 1.6l1.4 3.0l-4.6 -2.5l-4.6 2.5l1.4 -3.0Z" fill="#2f9a2c"/><path d="M62.2 23.0l5.0 -1.8l0.0 2.6Z" fill="#6db86b"/><rect x="71.7" y="20.8" width="1.1" height="9.0" fill="#7a4e22"/><path d="M72.2 18.0l2.2 1.1l2.8 0.2l-1.8 1.6l1.4 3.0l-4.6 -2.5l-4.6 2.5l1.4 -3.0Z" fill="#2f9a2c"/><path d="M67.2 19.9l5.0 -1.8l0.0 2.6Z" fill="#6db86b"/><rect x="77.2" y="17.9" width="1.1" height="9.5" fill="#7a4e22"/><path d="M77.7 15.1l2.2 1.1l2.8 0.2l-1.8 1.6l1.4 3.0l-4.6 -2.5l-4.6 2.5l1.4 -3.0Z" fill="#2f9a2c"/><path d="M72.7 17.0l5.0 -1.8l0.0 2.6Z" fill="#6db86b"/><rect x="82.6" y="14.8" width="1.1" height="10.0" fill="#7a4e22"/><path d="M83.1 12.0l2.2 1.1l2.8 0.2l-1.8 1.6l1.4 3.0l-4.6 -2.5l-4.6 2.5l1.4 -3.0Z" fill="#2f9a2c"/><path d="M78.1 13.9l5.0 -1.8l0.0 2.6Z" fill="#6db86b"/><polygon points="75.3,28.8 91.3,37.0 91.3,44.8 75.3,36.6" fill="#e9e9ec"/><polygon points="91.3,37.0 108.1,28.6 108.1,36.4 91.3,44.8" fill="#b9bac0"/><polygon points="75.3,28.8 92.1,20.4 108.1,28.6 91.3,37.0" fill="#8c8e94"/><polygon points="81.7,25.4 92.1,20.2 102.7,25.6 92.3,30.8" fill="#f4f4f6"/><polygon points="81.7,25.4 92.3,30.8 92.3,34.6 81.7,29.2" fill="#dfe0e4"/><polygon points="92.3,30.8 102.7,25.6 102.7,29.4 92.3,34.6" fill="#a6a8b0"/><polygon points="83.3,22.0 92.1,17.6 100.3,21.8 91.7,26.2" fill="#6f7178"/><polygon points="76.7,32.0 89.7,38.6 89.7,41.6 76.7,35.0" fill="#4f7fb0"/><polygon points="76.7,34.8 89.7,41.4 89.7,43.0 76.7,36.4" fill="#7a4a2a"/><rect x="89.8" y="34.0" width="1.1" height="10.0" fill="#7a4e22"/><path d="M90.3 31.2l2.2 1.1l2.8 0.2l-1.8 1.6l1.4 3.0l-4.6 -2.5l-4.6 2.5l1.4 -3.0Z" fill="#2f9a2c"/><path d="M85.3 33.1l5.0 -1.8l0.0 2.6Z" fill="#6db86b"/><rect x="94.2" y="31.5" width="1.1" height="10.5" fill="#7a4e22"/><path d="M94.7 28.7l2.2 1.1l2.8 0.2l-1.8 1.6l1.4 3.0l-4.6 -2.5l-4.6 2.5l1.4 -3.0Z" fill="#2f9a2c"/><path d="M89.7 30.6l5.0 -1.8l0.0 2.6Z" fill="#6db86b"/><ellipse cx="111.7" cy="32.8" rx="2.8" ry="2.4" fill="#2f9a30"/><ellipse cx="110.9" cy="32.0" rx="1.4" ry="1.3" fill="#6db86e"/><ellipse cx="115.7" cy="35.0" rx="2.8" ry="2.4" fill="#2f9a30"/><ellipse cx="114.9" cy="34.2" rx="1.4" ry="1.3" fill="#6db86e"/><ellipse cx="109.7" cy="35.8" rx="2.8" ry="2.4" fill="#2f9a30"/><ellipse cx="108.9" cy="35.0" rx="1.4" ry="1.3" fill="#6db86e"/><ellipse cx="113.7" cy="37.8" rx="2.8" ry="2.4" fill="#2f9a30"/><ellipse cx="112.9" cy="37.0" rx="1.4" ry="1.3" fill="#6db86e"/><ellipse cx="86.7" cy="52.0" rx="2.2" ry="1.9" fill="#2f8f30"/><ellipse cx="86.0" cy="51.3" rx="1.1" ry="1.0" fill="#6db06e"/></g>
<use href="#i-house" transform="translate(5 5.5) scale(.5)"/>
<use href="#i-couple" transform="translate(5 50.6) scale(.5)"/>
</svg>
<span class="t r" style="left:3.8px;top:65.5px;font-size:6.86px;letter-spacing:1.02px;color:#1f1d1b;-webkit-text-stroke:.14px #1f1d1b;">VILLA ATLANTICA</span>
<div class="tag"></div>
<span class="t" style="left:125.5px;top:68.1px;font-size:5.35px;letter-spacing:0.71px;color:#fff;">-1.3 MIO.</span>
</div>
<div class="card" style="left:810px;top:315px">
<svg width="168" height="78" viewBox="0 0 168 78"><use href="#grid"/>
<g clip-path="url(#cardclip)"><polygon points="41.0,46.6 89.0,70.6 137.0,46.6 137.0,48.6 89.0,72.6 41.0,48.6" fill="#146a28"/><polygon points="41.0,46.6 89.0,22.6 137.0,46.6 89.0,70.6" fill="#1f8a34"/><polygon points="45.0,46.6 89.0,24.6 133.0,46.6 89.0,68.6" fill="#2a9a3c"/><polygon points="51.0,46.6 89.0,27.6 127.0,46.6 89.0,65.6" fill="#7a5230"/><polygon points="76.5,46.6 89.0,40.4 101.5,46.6 89.0,52.8" fill="#3da13f"/><polygon points="80.0,46.6 89.0,42.2 98.0,46.6 89.0,51.0" fill="#2f8f35"/><polygon points="81.6,28.2 89.0,31.9 89.0,36.4 81.6,32.6" fill="#6f5238"/><polygon points="89.0,31.9 96.4,28.2 96.4,32.6 89.0,36.4" fill="#4d3826"/><polygon points="83.4,30.0 87.4,32.0 87.4,34.6 83.4,32.6" fill="#6aa6d8"/><polygon points="90.6,32.0 94.6,30.0 94.6,32.6 90.6,34.6" fill="#4a84b8"/><polygon points="80.6,28.0 89.0,21.2 89.0,32.0" fill="#4a382a"/><polygon points="97.4,28.0 89.0,21.2 89.0,32.0" fill="#2e221a"/><polygon points="80.6,28.0 89.0,24.0 97.4,28.0 89.0,21.2" fill="#3a2c22"/><polygon points="96.1,35.4 103.5,39.1 103.5,43.6 96.1,39.8" fill="#6f5238"/><polygon points="103.5,39.1 110.9,35.4 110.9,39.8 103.5,43.6" fill="#4d3826"/><polygon points="97.9,37.2 101.9,39.2 101.9,41.8 97.9,39.8" fill="#6aa6d8"/><polygon points="105.1,39.2 109.1,37.2 109.1,39.8 105.1,41.8" fill="#4a84b8"/><polygon points="95.1,35.2 103.5,28.4 103.5,39.2" fill="#4a382a"/><polygon points="111.9,35.2 103.5,28.4 103.5,39.2" fill="#2e221a"/><polygon points="95.1,35.2 103.5,31.2 111.9,35.2 103.5,28.4" fill="#3a2c22"/><polygon points="67.1,35.4 74.5,39.1 74.5,43.6 67.1,39.8" fill="#6f5238"/><polygon points="74.5,39.1 81.9,35.4 81.9,39.8 74.5,43.6" fill="#4d3826"/><polygon points="68.9,37.2 72.9,39.2 72.9,41.8 68.9,39.8" fill="#6aa6d8"/><polygon points="76.1,39.2 80.1,37.2 80.1,39.8 76.1,41.8" fill="#4a84b8"/><polygon points="66.1,35.2 74.5,28.4 74.5,39.2" fill="#4a382a"/><polygon points="82.9,35.2 74.5,28.4 74.5,39.2" fill="#2e221a"/><polygon points="66.1,35.2 74.5,31.2 82.9,35.2 74.5,28.4" fill="#3a2c22"/><polygon points="110.6,42.6 118.0,46.3 118.0,50.8 110.6,47.0" fill="#6f5238"/><polygon points="118.0,46.3 125.4,42.6 125.4,47.0 118.0,50.8" fill="#4d3826"/><polygon points="112.4,44.4 116.4,46.4 116.4,49.0 112.4,47.0" fill="#6aa6d8"/><polygon points="119.6,46.4 123.6,44.4 123.6,47.0 119.6,49.0" fill="#4a84b8"/><polygon points="109.6,42.4 118.0,35.6 118.0,46.4" fill="#4a382a"/><polygon points="126.4,42.4 118.0,35.6 118.0,46.4" fill="#2e221a"/><polygon points="109.6,42.4 118.0,38.4 126.4,42.4 118.0,35.6" fill="#3a2c22"/><polygon points="52.6,42.6 60.0,46.3 60.0,50.8 52.6,47.0" fill="#6f5238"/><polygon points="60.0,46.3 67.4,42.6 67.4,47.0 60.0,50.8" fill="#4d3826"/><polygon points="54.4,44.4 58.4,46.4 58.4,49.0 54.4,47.0" fill="#6aa6d8"/><polygon points="61.6,46.4 65.6,44.4 65.6,47.0 61.6,49.0" fill="#4a84b8"/><polygon points="51.6,42.4 60.0,35.6 60.0,46.4" fill="#4a382a"/><polygon points="68.4,42.4 60.0,35.6 60.0,46.4" fill="#2e221a"/><polygon points="51.6,42.4 60.0,38.4 68.4,42.4 60.0,35.6" fill="#3a2c22"/><polygon points="96.1,49.8 103.5,53.5 103.5,58.0 96.1,54.2" fill="#6f5238"/><polygon points="103.5,53.5 110.9,49.8 110.9,54.2 103.5,58.0" fill="#4d3826"/><polygon points="97.9,51.6 101.9,53.6 101.9,56.2 97.9,54.2" fill="#6aa6d8"/><polygon points="105.1,53.6 109.1,51.6 109.1,54.2 105.1,56.2" fill="#4a84b8"/><polygon points="95.1,49.6 103.5,42.8 103.5,53.6" fill="#4a382a"/><polygon points="111.9,49.6 103.5,42.8 103.5,53.6" fill="#2e221a"/><polygon points="95.1,49.6 103.5,45.6 111.9,49.6 103.5,42.8" fill="#3a2c22"/><polygon points="67.1,49.8 74.5,53.5 74.5,58.0 67.1,54.2" fill="#6f5238"/><polygon points="74.5,53.5 81.9,49.8 81.9,54.2 74.5,58.0" fill="#4d3826"/><polygon points="68.9,51.6 72.9,53.6 72.9,56.2 68.9,54.2" fill="#6aa6d8"/><polygon points="76.1,53.6 80.1,51.6 80.1,54.2 76.1,56.2" fill="#4a84b8"/><polygon points="66.1,49.6 74.5,42.8 74.5,53.6" fill="#4a382a"/><polygon points="82.9,49.6 74.5,42.8 74.5,53.6" fill="#2e221a"/><polygon points="66.1,49.6 74.5,45.6 82.9,49.6 74.5,42.8" fill="#3a2c22"/><polygon points="81.6,57.0 89.0,60.7 89.0,65.2 81.6,61.4" fill="#6f5238"/><polygon points="89.0,60.7 96.4,57.0 96.4,61.4 89.0,65.2" fill="#4d3826"/><polygon points="83.4,58.8 87.4,60.8 87.4,63.4 83.4,61.4" fill="#6aa6d8"/><polygon points="90.6,60.8 94.6,58.8 94.6,61.4 90.6,63.4" fill="#4a84b8"/><polygon points="80.6,56.8 89.0,50.0 89.0,60.8" fill="#4a382a"/><polygon points="97.4,56.8 89.0,50.0 89.0,60.8" fill="#2e221a"/><polygon points="80.6,56.8 89.0,52.8 97.4,56.8 89.0,50.0" fill="#3a2c22"/><rect x="44.5" y="38.1" width="1.1" height="7.0" fill="#7a4e22"/><path d="M45.0 35.3l2.2 1.1l2.8 0.2l-1.8 1.6l1.4 3.0l-4.6 -2.5l-4.6 2.5l1.4 -3.0Z" fill="#2a9a34"/><path d="M40.0 37.2l5.0 -1.8l0.0 2.6Z" fill="#69b870"/><rect x="50.5" y="33.6" width="1.1" height="8.0" fill="#7a4e22"/><path d="M51.0 30.8l2.2 1.1l2.8 0.2l-1.8 1.6l1.4 3.0l-4.6 -2.5l-4.6 2.5l1.4 -3.0Z" fill="#2a9a34"/><path d="M46.0 32.7l5.0 -1.8l0.0 2.6Z" fill="#69b870"/><rect x="57.5" y="29.6" width="1.1" height="8.0" fill="#7a4e22"/><path d="M58.0 26.8l2.2 1.1l2.8 0.2l-1.8 1.6l1.4 3.0l-4.6 -2.5l-4.6 2.5l1.4 -3.0Z" fill="#2a9a34"/><path d="M53.0 28.7l5.0 -1.8l0.0 2.6Z" fill="#69b870"/><rect x="62.5" y="27.1" width="1.1" height="7.5" fill="#7a4e22"/><path d="M63.0 24.3l2.2 1.1l2.8 0.2l-1.8 1.6l1.4 3.0l-4.6 -2.5l-4.6 2.5l1.4 -3.0Z" fill="#2a9a34"/><path d="M58.0 26.2l5.0 -1.8l0.0 2.6Z" fill="#69b870"/><rect x="92.5" y="16.6" width="1.1" height="8.0" fill="#7a4e22"/><path d="M93.0 13.8l2.2 1.1l2.8 0.2l-1.8 1.6l1.4 3.0l-4.6 -2.5l-4.6 2.5l1.4 -3.0Z" fill="#2a9a34"/><path d="M88.0 15.7l5.0 -1.8l0.0 2.6Z" fill="#69b870"/><rect x="85.5" y="18.6" width="1.1" height="7.0" fill="#7a4e22"/><path d="M86.0 15.8l2.2 1.1l2.8 0.2l-1.8 1.6l1.4 3.0l-4.6 -2.5l-4.6 2.5l1.4 -3.0Z" fill="#2a9a34"/><path d="M81.0 17.7l5.0 -1.8l0.0 2.6Z" fill="#69b870"/><rect x="117.5" y="26.6" width="1.1" height="8.0" fill="#7a4e22"/><path d="M118.0 23.8l2.2 1.1l2.8 0.2l-1.8 1.6l1.4 3.0l-4.6 -2.5l-4.6 2.5l1.4 -3.0Z" fill="#2a9a34"/><path d="M113.0 25.7l5.0 -1.8l0.0 2.6Z" fill="#69b870"/><rect x="124.5" y="30.6" width="1.1" height="8.0" fill="#7a4e22"/><path d="M125.0 27.8l2.2 1.1l2.8 0.2l-1.8 1.6l1.4 3.0l-4.6 -2.5l-4.6 2.5l1.4 -3.0Z" fill="#2a9a34"/><path d="M120.0 29.7l5.0 -1.8l0.0 2.6Z" fill="#69b870"/><rect x="130.5" y="35.6" width="1.1" height="8.0" fill="#7a4e22"/><path d="M131.0 32.8l2.2 1.1l2.8 0.2l-1.8 1.6l1.4 3.0l-4.6 -2.5l-4.6 2.5l1.4 -3.0Z" fill="#2a9a34"/><path d="M126.0 34.7l5.0 -1.8l0.0 2.6Z" fill="#69b870"/><rect x="132.5" y="40.6" width="1.1" height="6.0" fill="#7a4e22"/><path d="M133.0 37.8l2.2 1.1l2.8 0.2l-1.8 1.6l1.4 3.0l-4.6 -2.5l-4.6 2.5l1.4 -3.0Z" fill="#2a9a34"/><path d="M128.0 39.7l5.0 -1.8l0.0 2.6Z" fill="#69b870"/><ellipse cx="49.0" cy="49.6" rx="2.4" ry="2.0" fill="#23903a"/><ellipse cx="48.3" cy="48.9" rx="1.2" ry="1.1" fill="#65b175"/><ellipse cx="59.0" cy="54.6" rx="2.4" ry="2.0" fill="#23903a"/><ellipse cx="58.3" cy="53.9" rx="1.2" ry="1.1" fill="#65b175"/><ellipse cx="69.0" cy="59.6" rx="2.4" ry="2.0" fill="#23903a"/><ellipse cx="68.3" cy="58.9" rx="1.2" ry="1.1" fill="#65b175"/><ellipse cx="79.0" cy="64.6" rx="2.4" ry="2.0" fill="#23903a"/><ellipse cx="78.3" cy="63.9" rx="1.2" ry="1.1" fill="#65b175"/><ellipse cx="89.0" cy="68.6" rx="2.4" ry="2.0" fill="#23903a"/><ellipse cx="88.3" cy="67.9" rx="1.2" ry="1.1" fill="#65b175"/><ellipse cx="99.0" cy="64.6" rx="2.4" ry="2.0" fill="#23903a"/><ellipse cx="98.3" cy="63.9" rx="1.2" ry="1.1" fill="#65b175"/><ellipse cx="109.0" cy="59.6" rx="2.4" ry="2.0" fill="#23903a"/><ellipse cx="108.3" cy="58.9" rx="1.2" ry="1.1" fill="#65b175"/><ellipse cx="119.0" cy="54.6" rx="2.4" ry="2.0" fill="#23903a"/><ellipse cx="118.3" cy="53.9" rx="1.2" ry="1.1" fill="#65b175"/><ellipse cx="129.0" cy="48.6" rx="2.4" ry="2.0" fill="#23903a"/><ellipse cx="128.3" cy="47.9" rx="1.2" ry="1.1" fill="#65b175"/><ellipse cx="75.0" cy="56.6" rx="2.4" ry="2.0" fill="#23903a"/><ellipse cx="74.3" cy="55.9" rx="1.2" ry="1.1" fill="#65b175"/><ellipse cx="103.0" cy="57.6" rx="2.4" ry="2.0" fill="#23903a"/><ellipse cx="102.3" cy="56.9" rx="1.2" ry="1.1" fill="#65b175"/><ellipse cx="89.0" cy="60.6" rx="2.4" ry="2.0" fill="#23903a"/><ellipse cx="88.3" cy="59.9" rx="1.2" ry="1.1" fill="#65b175"/><ellipse cx="66.0" cy="42.6" rx="1.4" ry="0.9" fill="#f4ecd8"/><ellipse cx="83.0" cy="35.6" rx="1.4" ry="0.9" fill="#f4ecd8"/><ellipse cx="101.0" cy="37.6" rx="1.4" ry="0.9" fill="#f4ecd8"/><ellipse cx="109.0" cy="48.6" rx="1.4" ry="0.9" fill="#f4ecd8"/><ellipse cx="77.0" cy="52.6" rx="1.4" ry="0.9" fill="#f4ecd8"/><ellipse cx="95.0" cy="55.6" rx="1.4" ry="0.9" fill="#f4ecd8"/></g>
<use href="#i-hotel" transform="translate(5 5.5) scale(.5)"/>
<use href="#i-couple" transform="translate(5 50.6) scale(.5)"/>
</svg>
<span class="t r" style="left:3.8px;top:65.5px;font-size:6.86px;letter-spacing:0.89px;color:#1f1d1b;-webkit-text-stroke:.14px #1f1d1b;">TROPIC RESORT</span>
<div class="tag"></div>
<span class="t" style="left:125.0px;top:68.1px;font-size:5.35px;letter-spacing:1.06px;color:#fff;">-800.000</span>
</div>
<div class="card" style="left:1005px;top:315px">
<svg width="168" height="78" viewBox="0 0 168 78"><use href="#grid"/>
<g clip-path="url(#cardclip)"><polygon points="1.5,1.5 130.7,1.5 166.5,19.4 166.5,31.0 99.9,64.3 1.5,16.0" fill="#2fb02f"/><polygon points="1.5,1.5 125.0,1.5 160.0,19.0 160.0,30.0 99.6,60.4 1.5,12.4" fill="#4a4a4e"/><polygon points="1.5,3.4 106.4,55.2 99.6,58.6 1.5,10.6" fill="#333336"/><polyline points="3.0,7.4 101.0,55.6" fill="none" stroke="#f4f4f4" stroke-width="0.9" stroke-dasharray="1.6 1.8"/><polyline points="4.0,5.2 104.0,54.4" fill="none" stroke="#dcdcdc" stroke-width="0.5" stroke-dasharray=".8 1.8"/><polyline points="2.0,9.6 99.0,57.4" fill="none" stroke="#dcdcdc" stroke-width="0.5" stroke-dasharray=".8 1.8"/><polyline points="86.0,50.4 92.0,53.4" fill="none" stroke="#f0f0f0" stroke-width="0.7"/><polyline points="87.6,49.6 93.6,52.6" fill="none" stroke="#f0f0f0" stroke-width="0.7"/><polyline points="89.2,48.8 95.2,51.8" fill="none" stroke="#f0f0f0" stroke-width="0.7"/><polyline points="90.8,48.0 96.8,51.0" fill="none" stroke="#f0f0f0" stroke-width="0.7"/><polyline points="92.4,47.2 98.4,50.2" fill="none" stroke="#f0f0f0" stroke-width="0.7"/><polygon points="104.0,1.5 121.0,1.5 166.5,24.0 166.5,27.6 152.0,27.6" fill="#333336"/><polyline points="113.0,2.0 162.0,26.0" fill="none" stroke="#f4f4f4" stroke-width="0.9" stroke-dasharray="1.6 1.8"/><polyline points="146.0,21.0 152.0,24.0" fill="none" stroke="#f0f0f0" stroke-width="0.7"/><polyline points="147.6,20.2 153.6,23.2" fill="none" stroke="#f0f0f0" stroke-width="0.7"/><polyline points="149.2,19.4 155.2,22.4" fill="none" stroke="#f0f0f0" stroke-width="0.7"/><polyline points="150.8,18.6 156.8,21.6" fill="none" stroke="#f0f0f0" stroke-width="0.7"/><polyline points="152.4,17.8 158.4,20.8" fill="none" stroke="#f0f0f0" stroke-width="0.7"/><polygon points="17.0,1.5 28.0,1.5 43.0,9.0 37.4,11.8" fill="#2fb02f"/><polygon points="50.0,20.4 56.0,17.4 69.0,24.0 63.0,27.0" fill="#2fb02f"/><polygon points="75.0,33.0 82.0,29.4 112.0,44.4 105.0,48.0" fill="#2fb02f"/><polygon points="111.0,9.6 120.0,5.0 138.0,14.0 129.0,18.6" fill="#2fb02f"/><polygon points="134.0,1.5 144.0,1.5 166.5,13.0 166.5,18.6" fill="#2fb02f"/><polygon points="29.0,1.5 40.0,1.5 36.0,4.0" fill="#6e6e66"/><polygon points="5.0,11.7 5.7,10.7 15.5,6.8 16.5,7.1 14.8,8.2 7.1,12.1" fill="#ffffff"/><polygon points="9.9,8.9 5.7,5.7 6.8,5.4 12.0,8.5" fill="#f0f0f4"/><polygon points="10.2,10.0 14.1,13.8 15.2,13.5 12.3,9.3" fill="#f0f0f4"/><polygon points="15.1,6.9 16.2,4.7 16.9,5.0 16.3,7.2" fill="#e2e4ec"/><polygon points="56.0,20.1 57.2,18.4 74.8,11.4 76.5,11.9 73.5,13.9 59.8,20.9" fill="#ffffff"/><polygon points="64.8,15.1 57.2,9.4 59.2,8.9 68.5,14.4" fill="#f0f0f4"/><polygon points="65.2,17.1 72.2,23.9 74.2,23.4 69.0,15.9" fill="#f0f0f4"/><polygon points="74.0,11.6 76.0,7.6 77.2,8.1 76.2,12.1" fill="#e2e4ec"/><polygon points="73.2,9.9 74.5,8.1 92.7,0.8 94.5,1.3 91.4,3.4 77.1,10.7" fill="#ffffff"/><polygon points="82.3,4.7 74.5,-1.3 76.6,-1.8 86.2,3.9" fill="#f0f0f4"/><polygon points="82.8,6.8 90.1,13.8 92.2,13.3 86.7,5.5" fill="#f0f0f4"/><polygon points="91.9,1.1 94.0,-3.1 95.3,-2.6 94.3,1.6" fill="#e2e4ec"/><polygon points="82.2,32.3 83.5,30.5 101.7,23.2 103.5,23.7 100.4,25.8 86.1,33.1" fill="#ffffff"/><polygon points="91.3,27.1 83.5,21.1 85.6,20.6 95.2,26.3" fill="#f0f0f4"/><polygon points="91.8,29.2 99.1,36.2 101.2,35.7 95.7,27.9" fill="#f0f0f4"/><polygon points="100.9,23.5 103.0,19.3 104.3,19.8 103.3,24.0" fill="#e2e4ec"/><polygon points="98.8,17.1 99.7,15.8 112.3,10.8 113.6,11.2 111.4,12.6 101.5,17.6" fill="#ffffff"/><polygon points="105.1,13.5 99.7,9.4 101.1,9.0 107.8,13.0" fill="#f0f0f4"/><polygon points="105.5,14.9 110.5,19.8 111.9,19.4 108.2,14.0" fill="#f0f0f4"/><polygon points="111.8,11.0 113.2,8.1 114.1,8.5 113.4,11.3" fill="#e2e4ec"/><rect x="84.0" y="18.0" width="8.0" height="1.6" fill="#26264a"/><rect x="84.0" y="17.4" width="2.0" height="1.2" fill="#e8c030"/><polygon points="104.0,22.6 128.0,19.0 150.0,30.4 132.0,45.6 110.0,34.4" fill="#8c8b6a"/><polygon points="104.0,22.6 118.0,18.6 150.0,30.4 140.0,32.0 112.0,24.6" fill="#a9a888"/><polygon points="112.0,25.0 128.0,30.0 146.0,31.0 132.0,44.4" fill="#76755a"/><polygon points="105.0,24.0 112.0,28.0 118.0,36.6 110.0,34.6" fill="#8fc4e8"/><polygon points="110.0,34.6 132.0,45.6 132.0,51.0 110.0,40.0" fill="#7ab8e0"/><polyline points="111.4,35.4 111.4,40.6" fill="none" stroke="#d8ecfa" stroke-width="0.5"/><polyline points="114.1,36.8 114.1,42.0" fill="none" stroke="#d8ecfa" stroke-width="0.5"/><polyline points="116.8,38.1 116.8,43.3" fill="none" stroke="#d8ecfa" stroke-width="0.5"/><polyline points="119.5,39.5 119.5,44.7" fill="none" stroke="#d8ecfa" stroke-width="0.5"/><polyline points="122.2,40.8 122.2,46.0" fill="none" stroke="#d8ecfa" stroke-width="0.5"/><polyline points="124.9,42.1 124.9,47.4" fill="none" stroke="#d8ecfa" stroke-width="0.5"/><polyline points="127.6,43.5 127.6,48.7" fill="none" stroke="#d8ecfa" stroke-width="0.5"/><polyline points="130.3,44.9 130.3,50.1" fill="none" stroke="#d8ecfa" stroke-width="0.5"/><polygon points="132.0,45.6 150.0,36.6 150.0,42.0 132.0,51.0" fill="#2a2a2c"/><polygon points="132.0,45.6 150.0,30.4 150.0,36.6" fill="#5e5d48"/><rect x="145.6" y="40.0" width="0.7" height="16.0" fill="#f2f2f2"/><rect x="146.3" y="40.0" width="2.4" height="2.0" fill="#e8e8e8"/><rect x="149.6" y="37.8" width="0.7" height="16.0" fill="#f2f2f2"/><rect x="150.3" y="37.8" width="2.4" height="2.0" fill="#d8d030"/><rect x="153.6" y="35.6" width="0.7" height="16.0" fill="#f2f2f2"/><rect x="154.3" y="35.6" width="2.4" height="2.0" fill="#3a9a3a"/><rect x="157.6" y="33.4" width="0.7" height="16.0" fill="#f2f2f2"/><rect x="158.3" y="33.4" width="2.4" height="2.0" fill="#2a4ac8"/><rect x="161.6" y="31.2" width="0.7" height="16.0" fill="#f2f2f2"/><rect x="162.3" y="31.2" width="2.4" height="2.0" fill="#d8d030"/><rect x="126.5" y="50.0" width="1.1" height="6.0" fill="#7a4e22"/><path d="M127.0 47.2l2.2 1.1l2.8 0.2l-1.8 1.6l1.4 3.0l-4.6 -2.5l-4.6 2.5l1.4 -3.0Z" fill="#2f9a2c"/><path d="M122.0 49.1l5.0 -1.8l0.0 2.6Z" fill="#6db86b"/><rect x="161.5" y="36.0" width="1.1" height="6.0" fill="#7a4e22"/><path d="M162.0 33.2l2.2 1.1l2.8 0.2l-1.8 1.6l1.4 3.0l-4.6 -2.5l-4.6 2.5l1.4 -3.0Z" fill="#2f9a2c"/><path d="M157.0 35.1l5.0 -1.8l0.0 2.6Z" fill="#6db86b"/><ellipse cx="128.6" cy="54.0" rx="2.2" ry="1.9" fill="#2f9a30"/><ellipse cx="127.9" cy="53.3" rx="1.1" ry="1.0" fill="#6db86e"/><rect x="109.0" y="66.4" width="4.6" height="2.6" fill="#c82ac8"/><rect x="114.6" y="64.0" width="4.6" height="2.6" fill="#8ad0e8"/><rect x="120.2" y="61.6" width="4.6" height="2.6" fill="#e8d030"/><rect x="125.8" y="59.2" width="4.6" height="2.6" fill="#3aa83a"/><polygon points="100.0,64.6 134.0,47.6 166.5,47.6 166.5,31.4" fill="#00000000"/></g>
</svg>
<span class="t r" style="left:3.8px;top:65.5px;font-size:6.86px;letter-spacing:1.14px;color:#1f1d1b;-webkit-text-stroke:.14px #1f1d1b;">AIRPORT XXL</span>
<div class="tag"></div>
<span class="t" style="left:125.5px;top:68.1px;font-size:5.35px;letter-spacing:0.71px;color:#fff;">-3.1 MIO.</span>
</div>
<div class="card" style="left:1200px;top:315px">
<svg width="168" height="78" viewBox="0 0 168 78"><use href="#grid"/>
<g clip-path="url(#cardclip)"><polygon points="50.3,63.3 87.0,44.4 102.8,44.5 63.2,71.2" fill="#2f7cbc"/><polygon points="70.0,53.0 87.0,44.4 102.8,44.5 84.0,57.0" fill="#5fb4dc"/><polygon points="84.0,47.0 96.0,36.0 116.0,36.0 104.0,45.0 92.0,50.0" fill="#f1daa8"/><polygon points="86.0,45.6 92.0,43.6 98.0,46.0 88.0,51.0" fill="#cfeaf4"/><polygon points="66.6,58.6 108.7,36.6 112.0,38.2 70.0,60.4" fill="#8a6038"/><polygon points="66.6,58.6 70.0,60.4 70.0,62.0 66.6,60.2" fill="#5a3c20"/><polygon points="70.0,60.4 112.0,38.2 112.0,39.8 70.0,62.0" fill="#5a3c20"/><rect x="71.0" y="61.4" width="0.8" height="2.4" fill="#4a3018"/><rect x="75.0" y="59.3" width="0.8" height="2.4" fill="#4a3018"/><rect x="79.0" y="57.2" width="0.8" height="2.4" fill="#4a3018"/><rect x="83.0" y="55.1" width="0.8" height="2.4" fill="#4a3018"/><rect x="87.0" y="53.0" width="0.8" height="2.4" fill="#4a3018"/><rect x="91.0" y="50.9" width="0.8" height="2.4" fill="#4a3018"/><rect x="95.0" y="48.8" width="0.8" height="2.4" fill="#4a3018"/><rect x="99.0" y="46.7" width="0.8" height="2.4" fill="#4a3018"/><polygon points="98.0,36.6 103.6,36.6 102.8,16.0 98.8,16.0" fill="#8a6a3a"/><polygon points="100.8,36.6 103.6,36.6 102.8,16.0 100.8,16.0" fill="#6e5028"/><rect x="98.0" y="14.6" width="5.6" height="1.6" fill="#5a4020"/><rect x="99.0" y="11.6" width="3.6" height="3.0" fill="#f2d668"/><rect x="98.6" y="10.4" width="4.4" height="1.4" fill="#7a3a20"/><rect x="98.4" y="20.0" width="5.0" height="0.5" fill="#5a4020"/><rect x="98.4" y="23.4" width="5.0" height="0.5" fill="#5a4020"/><rect x="98.4" y="26.8" width="5.0" height="0.5" fill="#5a4020"/><rect x="98.4" y="30.2" width="5.0" height="0.5" fill="#5a4020"/><rect x="98.4" y="33.6" width="5.0" height="0.5" fill="#5a4020"/><polygon points="107.0,33.0 124.0,24.6 124.0,30.6 107.0,39.0" fill="#6a4a2a"/><polygon points="124.0,24.6 128.0,26.6 128.0,32.6 124.0,30.6" fill="#4a321c"/><polygon points="105.6,33.0 110.0,27.0 127.0,18.6 124.0,24.6" fill="#8a6238"/><polygon points="110.0,27.0 127.0,18.6 130.0,26.0 128.0,26.6 124.0,24.6" fill="#6e4a28"/></g>
<use href="#rot" x="136" y="48.6"/>
<use href="#i-light" transform="translate(5 5.5) scale(.5)"/>
</svg>
<span class="t r" style="left:3.8px;top:65.5px;font-size:6.86px;letter-spacing:1.05px;color:#1f1d1b;-webkit-text-stroke:.14px #1f1d1b;">SHIPPING S</span>
<div class="tag"></div>
<span class="t" style="left:127.2px;top:68.1px;font-size:5.35px;letter-spacing:1.11px;color:#fff;">-40.000</span>
</div>
<div class="card" style="left:1395px;top:315px">
<svg width="168" height="78" viewBox="0 0 168 78"><use href="#grid"/>
<g clip-path="url(#cardclip)"><polygon points="57.0,39.5 88.0,55.0 119.0,39.5 119.0,40.9 88.0,56.5 57.0,40.9" fill="#b89a68"/><polygon points="57.0,39.5 88.0,24.0 119.0,39.5 88.0,55.0" fill="#e9d3a6"/><polygon points="83.0,48.5 108.0,35.9 119.0,41.1 94.0,53.9" fill="#6c6c6e"/><polygon points="83.0,48.5 108.0,35.9 109.6,36.7 84.6,49.3" fill="#8a8a8c"/><polyline points="88.0,49.1 93.0,51.7" fill="none" stroke="#c8c8c8" stroke-width="0.4"/><polyline points="91.6,47.3 96.6,49.9" fill="none" stroke="#c8c8c8" stroke-width="0.4"/><polyline points="95.2,45.5 100.2,48.1" fill="none" stroke="#c8c8c8" stroke-width="0.4"/><polyline points="98.8,43.7 103.8,46.3" fill="none" stroke="#c8c8c8" stroke-width="0.4"/><polyline points="102.4,41.9 107.4,44.5" fill="none" stroke="#c8c8c8" stroke-width="0.4"/><polyline points="106.0,40.1 111.0,42.7" fill="none" stroke="#c8c8c8" stroke-width="0.4"/><ellipse cx="82.0" cy="49.9" rx="1.3" ry="1.1" fill="#c8b830"/><ellipse cx="81.6" cy="49.5" rx="0.7" ry="0.6" fill="#d8cd6e"/><ellipse cx="90.0" cy="53.9" rx="1.3" ry="1.1" fill="#c8b830"/><ellipse cx="89.6" cy="53.5" rx="0.7" ry="0.6" fill="#d8cd6e"/><ellipse cx="116.0" cy="38.3" rx="1.3" ry="1.1" fill="#c8b830"/><ellipse cx="115.6" cy="37.9" rx="0.7" ry="0.6" fill="#d8cd6e"/><ellipse cx="118.0" cy="42.1" rx="1.3" ry="1.1" fill="#c8b830"/><ellipse cx="117.6" cy="41.7" rx="0.7" ry="0.6" fill="#d8cd6e"/><polygon points="92.0,31.5 100.0,27.5 106.0,30.5 98.0,34.5" fill="#f6f2e6"/><polygon points="94.0,31.5 100.0,28.5 104.0,30.5 98.0,33.5" fill="#5cc0ee"/><rect x="91.1" y="16.9" width="1.1" height="11.0" fill="#7a4e22"/><path d="M91.6 14.1l2.2 1.1l2.8 0.2l-1.8 1.6l1.4 3.0l-4.6 -2.5l-4.6 2.5l1.4 -3.0Z" fill="#2f9a30"/><path d="M86.6 16.0l5.0 -1.8l0.0 2.6Z" fill="#6db86e"/><rect x="96.5" y="17.9" width="1.1" height="9.0" fill="#7a4e22"/><path d="M97.0 15.1l2.2 1.1l2.8 0.2l-1.8 1.6l1.4 3.0l-4.6 -2.5l-4.6 2.5l1.4 -3.0Z" fill="#2f9a30"/><path d="M92.0 17.0l5.0 -1.8l0.0 2.6Z" fill="#6db86e"/><polygon points="58.0,31.9 76.4,41.1 76.4,49.5 58.0,40.3" fill="#ecc684"/><polygon points="76.4,41.1 92.0,33.3 92.0,41.7 76.4,49.5" fill="#cfa460"/><polygon points="58.0,31.9 74.6,23.5 92.0,33.3 76.4,41.1" fill="#7a5c3e"/><polygon points="62.0,31.7 74.6,25.3 88.0,33.1 76.4,38.9" fill="#8c6c4c"/><polygon points="58.0,31.9 76.4,41.1 76.4,42.5 58.0,33.3" fill="#5a402a"/><polygon points="76.4,41.1 92.0,33.3 92.0,34.7 76.4,42.5" fill="#4a3422"/><polygon points="60.0,35.1 62.0,36.1 62.0,38.1 60.0,37.1" fill="#5a3a24"/><polygon points="63.4,36.8 65.4,37.8 65.4,39.8 63.4,38.8" fill="#5a3a24"/><polygon points="66.8,38.5 68.8,39.5 68.8,41.5 66.8,40.5" fill="#5a3a24"/><polygon points="70.2,40.2 72.2,41.2 72.2,43.2 70.2,42.2" fill="#5a3a24"/><polygon points="73.6,41.9 75.6,42.9 75.6,44.9 73.6,43.9" fill="#5a3a24"/><polygon points="78.4,41.9 80.4,40.9 80.4,42.9 78.4,43.9" fill="#7ac0e8"/><polygon points="81.8,40.2 83.8,39.2 83.8,41.2 81.8,42.2" fill="#7ac0e8"/><polygon points="85.2,38.5 87.2,37.5 87.2,39.5 85.2,40.5" fill="#7ac0e8"/><polygon points="88.6,36.8 90.6,35.8 90.6,37.8 88.6,38.8" fill="#7ac0e8"/><polygon points="60.0,39.1 62.0,40.1 62.0,42.1 60.0,41.1" fill="#5a3a24"/><polygon points="63.4,40.8 65.4,41.8 65.4,43.8 63.4,42.8" fill="#5a3a24"/><polygon points="66.8,42.5 68.8,43.5 68.8,45.5 66.8,44.5" fill="#5a3a24"/><polygon points="70.2,44.2 72.2,45.2 72.2,47.2 70.2,46.2" fill="#5a3a24"/><polygon points="73.6,45.9 75.6,46.9 75.6,48.9 73.6,47.9" fill="#5a3a24"/><polygon points="78.4,45.9 80.4,44.9 80.4,46.9 78.4,47.9" fill="#7ac0e8"/><polygon points="81.8,44.2 83.8,43.2 83.8,45.2 81.8,46.2" fill="#7ac0e8"/><polygon points="85.2,42.5 87.2,41.5 87.2,43.5 85.2,44.5" fill="#7ac0e8"/><polygon points="88.6,40.8 90.6,39.8 90.6,41.8 88.6,42.8" fill="#7ac0e8"/><ellipse cx="74.0" cy="29.9" rx="1.2" ry="0.7" fill="#e8e8e8"/><ellipse cx="79.0" cy="31.9" rx="1.2" ry="0.7" fill="#e8e8e8"/></g>
<use href="#i-hotel" transform="translate(5 5.5) scale(.5)"/>
<use href="#i-group" transform="translate(5 50.5) scale(.5)"/>
</svg>
<span class="t r" style="left:3.8px;top:65.5px;font-size:6.86px;letter-spacing:0.57px;color:#1f1d1b;-webkit-text-stroke:.14px #1f1d1b;">HI MOTEL</span>
<div class="tag"></div>
<span class="t" style="left:125.0px;top:68.1px;font-size:5.35px;letter-spacing:1.06px;color:#fff;">-226.000</span>
</div>
<div class="card" style="left:1590px;top:315px">
<svg width="168" height="78" viewBox="0 0 168 78"><use href="#grid"/>
<g clip-path="url(#cardclip)"><polygon points="58.0,39.5 88.0,54.5 118.0,39.5 118.0,40.9 88.0,55.9 58.0,40.9" fill="#1e3a22"/><polygon points="58.0,39.5 88.0,24.5 118.0,39.5 88.0,54.5" fill="#24502a"/><polygon points="60.4,39.5 88.0,25.7 115.6,39.5 88.0,53.3" fill="#eadcc6"/><polygon points="83.0,47.5 109.0,34.5 113.6,36.7 87.6,49.7" fill="#f1ece0"/><polygon points="85.0,47.5 108.6,35.7 111.0,36.9 87.4,48.7" fill="#5cc0ee"/><ellipse cx="110.0" cy="32.9" rx="1.6" ry="0.9" fill="#e8a870"/><polygon points="60.6,35.9 74.8,42.9 74.8,22.9 60.6,15.9" fill="#fafafa"/><polygon points="74.8,42.9 100.4,30.1 100.4,10.1 74.8,22.9" fill="#dcdce0"/><polygon points="60.6,15.9 86.2,3.1 100.4,10.1 74.8,22.9" fill="#f2f2f4"/><polygon points="63.0,15.7 86.2,4.5 98.0,9.9 74.8,21.3" fill="#5c5048"/><ellipse cx="76.0" cy="11.5" rx="1.4" ry="0.8" fill="#e8e8e8"/><ellipse cx="84.0" cy="8.5" rx="1.4" ry="0.8" fill="#e8e8e8"/><rect x="65.0" y="21.9" width="1.2" height="13.6" fill="#6ab8e8"/><rect x="62.6" y="19.5" width="1.6" height="2.4" fill="#f08a2a"/><polygon points="78.2,41.2 83.2,38.7 83.2,23.1 78.2,25.6" fill="#8a5a2a"/><polygon points="79.2,39.6 82.2,38.1 82.2,35.5 79.2,37.0" fill="#5aa8e8"/><polygon points="79.2,35.8 82.2,34.3 82.2,31.7 79.2,33.2" fill="#5aa8e8"/><polygon points="79.2,32.0 82.2,30.5 82.2,27.9 79.2,29.4" fill="#5aa8e8"/><polygon points="79.2,28.2 82.2,26.7 82.2,24.1 79.2,25.6" fill="#5aa8e8"/><polygon points="86.2,37.2 91.2,34.7 91.2,19.1 86.2,21.6" fill="#8a5a2a"/><polygon points="87.2,35.6 90.2,34.1 90.2,31.5 87.2,33.0" fill="#5aa8e8"/><polygon points="87.2,31.8 90.2,30.3 90.2,27.7 87.2,29.2" fill="#5aa8e8"/><polygon points="87.2,28.0 90.2,26.5 90.2,23.9 87.2,25.4" fill="#5aa8e8"/><polygon points="87.2,24.2 90.2,22.7 90.2,20.1 87.2,21.6" fill="#5aa8e8"/><polygon points="94.2,33.2 99.2,30.7 99.2,15.1 94.2,17.6" fill="#8a5a2a"/><polygon points="95.2,31.6 98.2,30.1 98.2,27.5 95.2,29.0" fill="#5aa8e8"/><polygon points="95.2,27.8 98.2,26.3 98.2,23.7 95.2,25.2" fill="#5aa8e8"/><polygon points="95.2,24.0 98.2,22.5 98.2,19.9 95.2,21.4" fill="#5aa8e8"/><polygon points="95.2,20.2 98.2,18.7 98.2,16.1 95.2,17.6" fill="#5aa8e8"/></g>
<use href="#i-hotel" transform="translate(5 5.5) scale(.5)"/>
<use href="#i-group" transform="translate(5 50.5) scale(.5)"/>
</svg>
<span class="t r" style="left:3.8px;top:65.5px;font-size:6.86px;letter-spacing:0.88px;color:#1f1d1b;-webkit-text-stroke:.14px #1f1d1b;">COMFORT FIVE</span>
<div class="tag"></div>
<span class="t" style="left:125.0px;top:68.1px;font-size:5.35px;letter-spacing:1.06px;color:#fff;">-730.000</span>
</div>
<div class="card" style="left:615px;top:419px">
<svg width="168" height="78" viewBox="0 0 168 78"><use href="#grid"/>
<g clip-path="url(#cardclip)"><polygon points="58.3,39.3 88.3,24.3 118.3,39.3 88.3,54.3" fill="#f3dbab"/><polygon points="62.3,39.3 88.3,26.3 114.3,39.3 88.3,52.3" fill="#efd09a"/><rect x="59.4" y="32.9" width="1.1" height="7.0" fill="#7a4e22"/><path d="M59.9 30.1l2.2 1.1l2.8 0.2l-1.8 1.6l1.4 3.0l-4.6 -2.5l-4.6 2.5l1.4 -3.0Z" fill="#1f7a2e"/><path d="M54.9 32.0l5.0 -1.8l0.0 2.6Z" fill="#62a16c"/><rect x="73.2" y="21.3" width="1.1" height="9.0" fill="#7a4e22"/><path d="M73.7 18.5l2.2 1.1l2.8 0.2l-1.8 1.6l1.4 3.0l-4.6 -2.5l-4.6 2.5l1.4 -3.0Z" fill="#2f9a2c"/><path d="M68.7 20.4l5.0 -1.8l0.0 2.6Z" fill="#6db86b"/><rect x="76.2" y="23.7" width="1.1" height="8.6" fill="#7a4e22"/><path d="M76.7 20.9l2.2 1.1l2.8 0.2l-1.8 1.6l1.4 3.0l-4.6 -2.5l-4.6 2.5l1.4 -3.0Z" fill="#2f9a2c"/><path d="M71.7 22.8l5.0 -1.8l0.0 2.6Z" fill="#6db86b"/><rect x="84.4" y="17.3" width="1.1" height="10.0" fill="#7a4e22"/><path d="M84.9 14.5l2.2 1.1l2.8 0.2l-1.8 1.6l1.4 3.0l-4.6 -2.5l-4.6 2.5l1.4 -3.0Z" fill="#2f9a2c"/><path d="M79.9 16.4l5.0 -1.8l0.0 2.6Z" fill="#6db86b"/><rect x="92.4" y="21.7" width="1.1" height="9.0" fill="#7a4e22"/><path d="M92.9 18.9l2.2 1.1l2.8 0.2l-1.8 1.6l1.4 3.0l-4.6 -2.5l-4.6 2.5l1.4 -3.0Z" fill="#2f9a2c"/><path d="M87.9 20.8l5.0 -1.8l0.0 2.6Z" fill="#6db86b"/><ellipse cx="85.7" cy="32.9" rx="4.4" ry="2.0" fill="#d9d9de"/><polygon points="81.3,32.9 85.7,24.9 90.1,32.9 85.7,34.9" fill="#ffffff"/><polygon points="85.7,24.9 90.1,32.9 85.7,34.9" fill="#d9dade"/><ellipse cx="69.3" cy="38.9" rx="5.6" ry="2.5" fill="#d9d9de"/><polygon points="63.7,38.9 69.3,33.3 74.9,38.9 69.3,41.4" fill="#ffffff"/><polygon points="69.3,33.3 74.9,38.9 69.3,41.4" fill="#d9dade"/><ellipse cx="97.9" cy="36.7" rx="5.4" ry="2.4" fill="#d9d9de"/><polygon points="92.5,36.7 97.9,30.7 103.3,36.7 97.9,39.1" fill="#ffffff"/><polygon points="97.9,30.7 103.3,36.7 97.9,39.1" fill="#d9dade"/><rect x="101.8" y="22.3" width="1.1" height="9.0" fill="#7a4e22"/><path d="M102.3 19.5l2.2 1.1l2.8 0.2l-1.8 1.6l1.4 3.0l-4.6 -2.5l-4.6 2.5l1.4 -3.0Z" fill="#2f9a2c"/><path d="M97.3 21.4l5.0 -1.8l0.0 2.6Z" fill="#6db86b"/><rect x="104.4" y="27.9" width="1.1" height="8.0" fill="#7a4e22"/><path d="M104.9 25.1l2.2 1.1l2.8 0.2l-1.8 1.6l1.4 3.0l-4.6 -2.5l-4.6 2.5l1.4 -3.0Z" fill="#2f9a2c"/><path d="M99.9 27.0l5.0 -1.8l0.0 2.6Z" fill="#6db86b"/><ellipse cx="75.9" cy="44.3" rx="5.4" ry="2.4" fill="#d9d9de"/><polygon points="70.5,44.3 75.9,37.9 81.3,44.3 75.9,46.7" fill="#ffffff"/><polygon points="75.9,37.9 81.3,44.3 75.9,46.7" fill="#d9dade"/><ellipse cx="89.3" cy="48.7" rx="5.4" ry="2.4" fill="#d9d9de"/><polygon points="83.9,48.7 89.3,42.1 94.7,48.7 89.3,51.1" fill="#ffffff"/><polygon points="89.3,42.1 94.7,48.7 89.3,51.1" fill="#d9dade"/><ellipse cx="108.9" cy="41.9" rx="4.8" ry="2.2" fill="#d9d9de"/><polygon points="104.1,41.9 108.9,35.5 113.7,41.9 108.9,44.1" fill="#ffffff"/><polygon points="108.9,35.5 113.7,41.9 108.9,44.1" fill="#d9dade"/><rect x="79.8" y="37.1" width="1.1" height="8.6" fill="#7a4e22"/><path d="M80.3 34.3l2.2 1.1l2.8 0.2l-1.8 1.6l1.4 3.0l-4.6 -2.5l-4.6 2.5l1.4 -3.0Z" fill="#2f9a2c"/><path d="M75.3 36.2l5.0 -1.8l0.0 2.6Z" fill="#6db86b"/><rect x="93.4" y="40.7" width="1.1" height="9.6" fill="#7a4e22"/><path d="M93.9 37.9l2.2 1.1l2.8 0.2l-1.8 1.6l1.4 3.0l-4.6 -2.5l-4.6 2.5l1.4 -3.0Z" fill="#2f9a2c"/><path d="M88.9 39.8l5.0 -1.8l0.0 2.6Z" fill="#6db86b"/><rect x="106.8" y="35.9" width="1.1" height="9.0" fill="#7a4e22"/><path d="M107.3 33.1l2.2 1.1l2.8 0.2l-1.8 1.6l1.4 3.0l-4.6 -2.5l-4.6 2.5l1.4 -3.0Z" fill="#2f9a2c"/><path d="M102.3 35.0l5.0 -1.8l0.0 2.6Z" fill="#6db86b"/><ellipse cx="86.1" cy="37.1" rx="1.6" ry="0.8" fill="#c9a45c"/></g>
<use href="#i-hotel" transform="translate(5 5.5) scale(.5)"/>
<use href="#i-couple" transform="translate(5 50.6) scale(.5)"/>
</svg>
<span class="t r" style="left:3.8px;top:65.5px;font-size:6.86px;letter-spacing:0.84px;color:#1f1d1b;-webkit-text-stroke:.14px #1f1d1b;">GLAMPING</span>
<div class="tag"></div>
<span class="t" style="left:125.5px;top:68.1px;font-size:5.35px;letter-spacing:0.71px;color:#fff;">-1.2 MIO.</span>
</div>
<div class="card" style="left:810px;top:419px">
<svg width="168" height="78" viewBox="0 0 168 78"><use href="#grid"/>
<g clip-path="url(#cardclip)"><polygon points="43.0,47.6 89.0,70.6 135.0,47.6 135.0,49.2 89.0,72.2 43.0,49.2" fill="#1c2a1c"/><polygon points="43.0,47.6 89.0,24.6 135.0,47.6 89.0,70.6" fill="#2d9b3c"/><polygon points="46.0,47.6 89.0,26.1 132.0,47.6 89.0,69.1" fill="#37a845"/><polygon points="107.0,35.6 132.0,47.6 109.0,58.6 87.0,48.6" fill="#857f73"/><ellipse cx="113.0" cy="45.6" rx="1.8" ry="1.0" fill="#f3e9d2"/><ellipse cx="113.6" cy="46.6" rx="1.0" ry="0.6" fill="#d8782a"/><ellipse cx="119.0" cy="43.6" rx="1.8" ry="1.0" fill="#f3e9d2"/><ellipse cx="119.6" cy="44.6" rx="1.0" ry="0.6" fill="#d8782a"/><ellipse cx="122.0" cy="48.6" rx="1.8" ry="1.0" fill="#f3e9d2"/><ellipse cx="122.6" cy="49.6" rx="1.0" ry="0.6" fill="#d8782a"/><ellipse cx="116.0" cy="50.6" rx="1.8" ry="1.0" fill="#f3e9d2"/><ellipse cx="116.6" cy="51.6" rx="1.0" ry="0.6" fill="#d8782a"/><polygon points="85.0,60.2 110.0,48.2 115.0,50.6 90.0,63.0" fill="#d8d2c4"/><polygon points="87.0,60.2 109.6,49.4 112.6,50.8 90.0,61.8" fill="#5cc0ee"/><rect x="45.5" y="37.6" width="1.1" height="9.0" fill="#7a4e22"/><path d="M46.0 34.8l2.2 1.1l2.8 0.2l-1.8 1.6l1.4 3.0l-4.6 -2.5l-4.6 2.5l1.4 -3.0Z" fill="#259638"/><path d="M41.0 36.7l5.0 -1.8l0.0 2.6Z" fill="#66b573"/><rect x="51.5" y="34.1" width="1.1" height="9.5" fill="#7a4e22"/><path d="M52.0 31.3l2.2 1.1l2.8 0.2l-1.8 1.6l1.4 3.0l-4.6 -2.5l-4.6 2.5l1.4 -3.0Z" fill="#259638"/><path d="M47.0 33.2l5.0 -1.8l0.0 2.6Z" fill="#66b573"/><rect x="56.5" y="30.6" width="1.1" height="10.0" fill="#7a4e22"/><path d="M57.0 27.8l2.2 1.1l2.8 0.2l-1.8 1.6l1.4 3.0l-4.6 -2.5l-4.6 2.5l1.4 -3.0Z" fill="#259638"/><path d="M52.0 29.7l5.0 -1.8l0.0 2.6Z" fill="#66b573"/><rect x="61.5" y="28.6" width="1.1" height="9.0" fill="#7a4e22"/><path d="M62.0 25.8l2.2 1.1l2.8 0.2l-1.8 1.6l1.4 3.0l-4.6 -2.5l-4.6 2.5l1.4 -3.0Z" fill="#259638"/><path d="M57.0 27.7l5.0 -1.8l0.0 2.6Z" fill="#66b573"/><rect x="109.5" y="24.6" width="1.1" height="9.0" fill="#7a4e22"/><path d="M110.0 21.8l2.2 1.1l2.8 0.2l-1.8 1.6l1.4 3.0l-4.6 -2.5l-4.6 2.5l1.4 -3.0Z" fill="#259638"/><path d="M105.0 23.7l5.0 -1.8l0.0 2.6Z" fill="#66b573"/><rect x="114.5" y="26.4" width="1.1" height="9.6" fill="#7a4e22"/><path d="M115.0 23.6l2.2 1.1l2.8 0.2l-1.8 1.6l1.4 3.0l-4.6 -2.5l-4.6 2.5l1.4 -3.0Z" fill="#259638"/><path d="M110.0 25.5l5.0 -1.8l0.0 2.6Z" fill="#66b573"/><rect x="119.5" y="28.6" width="1.1" height="10.0" fill="#7a4e22"/><path d="M120.0 25.8l2.2 1.1l2.8 0.2l-1.8 1.6l1.4 3.0l-4.6 -2.5l-4.6 2.5l1.4 -3.0Z" fill="#259638"/><path d="M115.0 27.7l5.0 -1.8l0.0 2.6Z" fill="#66b573"/><rect x="124.5" y="31.2" width="1.1" height="10.0" fill="#7a4e22"/><path d="M125.0 28.4l2.2 1.1l2.8 0.2l-1.8 1.6l1.4 3.0l-4.6 -2.5l-4.6 2.5l1.4 -3.0Z" fill="#259638"/><path d="M120.0 30.3l5.0 -1.8l0.0 2.6Z" fill="#66b573"/><rect x="129.5" y="34.0" width="1.1" height="9.6" fill="#7a4e22"/><path d="M130.0 31.2l2.2 1.1l2.8 0.2l-1.8 1.6l1.4 3.0l-4.6 -2.5l-4.6 2.5l1.4 -3.0Z" fill="#259638"/><path d="M125.0 33.1l5.0 -1.8l0.0 2.6Z" fill="#66b573"/><polygon points="63.4,46.4 87.4,58.2 87.4,17.2 63.4,5.4" fill="#6fb0e6"/><polygon points="87.4,58.2 109.0,47.0 109.0,6.0 87.4,17.2" fill="#4a8acb"/><polygon points="63.4,46.4 87.4,58.2 87.4,50.2 63.4,38.4" fill="#8a5a2a"/><polygon points="87.4,58.2 109.0,47.0 109.0,39.0 87.4,50.2" fill="#6a4420"/><polygon points="66.4,44.4 84.4,54.8 84.4,52.8 66.4,42.4" fill="#d8a24a"/><polygon points="63.4,30.8 87.4,42.6 87.4,41.0 63.4,29.2" fill="#d9c8a4"/><polygon points="87.4,42.6 109.0,31.4 109.0,29.8 87.4,41.0" fill="#b89a6e"/><polygon points="63.4,23.2 87.4,35.0 87.4,33.4 63.4,21.6" fill="#d9c8a4"/><polygon points="87.4,35.0 109.0,23.8 109.0,22.2 87.4,33.4" fill="#b89a6e"/><polygon points="63.4,15.6 87.4,27.4 87.4,25.8 63.4,14.0" fill="#d9c8a4"/><polygon points="87.4,27.4 109.0,16.2 109.0,14.6 87.4,25.8" fill="#b89a6e"/><polygon points="63.4,8.0 87.4,19.8 87.4,18.2 63.4,6.4" fill="#d9c8a4"/><polygon points="87.4,19.8 109.0,8.6 109.0,7.0 87.4,18.2" fill="#b89a6e"/><polyline points="66.4,38.9 66.4,6.9" fill="none" stroke="#9fd0f5" stroke-width="0.5"/><polyline points="69.4,40.4 69.4,8.4" fill="none" stroke="#9fd0f5" stroke-width="0.5"/><polyline points="72.4,41.8 72.4,9.8" fill="none" stroke="#9fd0f5" stroke-width="0.5"/><polyline points="75.4,43.3 75.4,11.3" fill="none" stroke="#9fd0f5" stroke-width="0.5"/><polyline points="78.4,44.8 78.4,12.8" fill="none" stroke="#9fd0f5" stroke-width="0.5"/><polyline points="81.4,46.2 81.4,14.2" fill="none" stroke="#9fd0f5" stroke-width="0.5"/><polyline points="84.4,47.7 84.4,15.7" fill="none" stroke="#9fd0f5" stroke-width="0.5"/><polyline points="90.5,47.6 90.5,15.6" fill="none" stroke="#3670ad" stroke-width="0.5"/><polyline points="93.6,46.0 93.6,14.0" fill="none" stroke="#3670ad" stroke-width="0.5"/><polyline points="96.7,44.4 96.7,12.4" fill="none" stroke="#3670ad" stroke-width="0.5"/><polyline points="99.7,42.8 99.7,10.8" fill="none" stroke="#3670ad" stroke-width="0.5"/><polyline points="102.8,41.2 102.8,9.2" fill="none" stroke="#3670ad" stroke-width="0.5"/><polyline points="105.9,39.6 105.9,7.6" fill="none" stroke="#3670ad" stroke-width="0.5"/><polygon points="63.4,5.4 87.4,17.2 109.0,6.0 85.0,-5.8" fill="#cfae7e"/><polygon points="67.8,5.4 87.4,15.0 104.6,6.0 86.0,-3.6" fill="#565658"/></g>
<use href="#i-hotel" transform="translate(5 5.5) scale(.5)"/>
<use href="#i-couple" transform="translate(5 50.6) scale(.5)"/>
</svg>
<span class="t r" style="left:3.8px;top:65.5px;font-size:6.86px;letter-spacing:1.00px;color:#1f1d1b;-webkit-text-stroke:.14px #1f1d1b;">PANDORA</span>
<div class="tag"></div>
<span class="t" style="left:125.5px;top:68.1px;font-size:5.35px;letter-spacing:0.71px;color:#fff;">-2.3 MIO.</span>
</div>
<div class="card" style="left:1005px;top:419px">
<svg width="168" height="78" viewBox="0 0 168 78"><use href="#grid"/>
<g clip-path="url(#cardclip)"><polygon points="41.5,55.4 86.0,33.0 111.8,49.4 73.2,71.2" fill="#2a6ca8"/><polygon points="52.0,53.6 88.0,36.0 109.0,48.6 74.0,67.6" fill="#36a0b8"/><polygon points="78.0,43.6 92.0,38.0 109.0,48.6 96.0,55.6" fill="#7ad0dc"/><polygon points="104.0,46.0 110.0,43.0 116.0,46.6 109.0,50.0" fill="#f1daa8"/><polygon points="82.0,38.0 88.0,35.0 92.0,37.0 86.0,40.0" fill="#f1daa8"/><polygon points="86.0,36.0 100.0,29.0 124.0,41.0 110.0,48.0" fill="#7c7c7a"/><polyline points="88.0,37.4 101.0,31.0" fill="none" stroke="#5e5e5c" stroke-width="0.5"/><polyline points="90.4,38.6 103.4,32.2" fill="none" stroke="#5e5e5c" stroke-width="0.5"/><polyline points="92.8,39.8 105.8,33.4" fill="none" stroke="#5e5e5c" stroke-width="0.5"/><polyline points="95.2,41.0 108.2,34.6" fill="none" stroke="#5e5e5c" stroke-width="0.5"/><polygon points="48.4,53.4 94.0,30.0 98.0,32.0 53.0,55.4" fill="#6f6f6f"/><polygon points="48.4,53.4 53.0,51.0 82.0,65.6 77.4,68.0" fill="#6f6f6f"/><polygon points="48.4,53.4 77.4,68.0 77.4,70.0 48.4,55.4" fill="#4a4a4a"/><polygon points="77.4,68.0 82.0,65.6 82.0,67.6 77.4,70.0" fill="#3c3c3c"/><polygon points="53.0,55.4 98.0,32.0 98.0,33.6 56.0,56.6" fill="#4f4f4f"/><ellipse cx="55.0" cy="51.6" rx="0.7" ry="0.5" fill="#2a2a2a"/><ellipse cx="62.0" cy="48.1" rx="0.7" ry="0.5" fill="#2a2a2a"/><ellipse cx="69.0" cy="44.6" rx="0.7" ry="0.5" fill="#2a2a2a"/><ellipse cx="76.0" cy="41.1" rx="0.7" ry="0.5" fill="#2a2a2a"/><ellipse cx="83.0" cy="37.6" rx="0.7" ry="0.5" fill="#2a2a2a"/><ellipse cx="90.0" cy="34.1" rx="0.7" ry="0.5" fill="#2a2a2a"/><polygon points="77.0,42.4 79.0,41.4 90.0,49.6 88.6,50.6" fill="#f4f4f4"/><polygon points="99.9,27.0 114.0,34.0 114.0,40.6 99.9,33.6" fill="#4f9fdc"/><polyline points="101.6,28.4 101.6,34.0" fill="none" stroke="#c8e6fa" stroke-width="0.6"/><polyline points="104.2,29.7 104.2,35.3" fill="none" stroke="#c8e6fa" stroke-width="0.6"/><polyline points="106.8,31.0 106.8,36.6" fill="none" stroke="#c8e6fa" stroke-width="0.6"/><polyline points="109.4,32.3 109.4,37.9" fill="none" stroke="#c8e6fa" stroke-width="0.6"/><polyline points="112.0,33.6 112.0,39.2" fill="none" stroke="#c8e6fa" stroke-width="0.6"/><polygon points="114.0,34.0 129.6,26.2 129.6,32.8 114.0,40.6" fill="#8a6a3a"/><polygon points="99.9,27.0 115.6,19.2 129.6,26.2 114.0,34.0" fill="#4a4038"/><polygon points="103.0,27.0 115.6,20.8 126.6,26.2 114.0,32.4" fill="#5e5248"/><polygon points="108.0,26.6 116.0,22.6 122.0,25.6 114.0,29.6" fill="#7ab8e0"/><ellipse cx="112.0" cy="24.4" rx="1.0" ry="0.6" fill="#f0f0f0"/><ellipse cx="120.6" cy="27.4" rx="1.0" ry="0.6" fill="#f0f0f0"/><rect x="90.9" y="15.0" width="1.1" height="12.0" fill="#7a4e22"/><path d="M91.4 12.2l2.2 1.1l2.8 0.2l-1.8 1.6l1.4 3.0l-4.6 -2.5l-4.6 2.5l1.4 -3.0Z" fill="#3aa830"/><path d="M86.4 14.1l5.0 -1.8l0.0 2.6Z" fill="#75c26e"/><rect x="98.8" y="9.0" width="1.1" height="14.0" fill="#7a4e22"/><path d="M99.3 6.2l2.2 1.1l2.8 0.2l-1.8 1.6l1.4 3.0l-4.6 -2.5l-4.6 2.5l1.4 -3.0Z" fill="#3aa830"/><path d="M94.3 8.1l5.0 -1.8l0.0 2.6Z" fill="#75c26e"/></g>
<use href="#rot" x="136" y="48.6"/>
<use href="#i-light" transform="translate(5 5.5) scale(.5)"/>
</svg>
<span class="t r" style="left:3.8px;top:65.5px;font-size:6.86px;letter-spacing:1.02px;color:#1f1d1b;-webkit-text-stroke:.14px #1f1d1b;">SHIPPING</span>
<div class="tag"></div>
<span class="t" style="left:125.0px;top:68.1px;font-size:5.35px;letter-spacing:1.06px;color:#fff;">-130.000</span>
</div>
<div class="card" style="left:1200px;top:419px">
<svg width="168" height="78" viewBox="0 0 168 78"><use href="#grid"/>
<g clip-path="url(#cardclip)"><polygon points="32.5,46.5 96.0,15.0 142.4,39.5 81.0,71.2" fill="#2a78b8"/><polygon points="60.0,40.0 100.0,21.0 120.0,31.0 84.0,50.0" fill="#3f94cc"/><polygon points="40.5,43.0 104.8,11.0 116.0,16.6 52.0,48.6" fill="#bb9c74"/><polygon points="104.8,11.0 143.0,30.0 137.0,33.0 98.6,14.0" fill="#bb9c74"/><polygon points="143.0,30.0 143.0,36.6 88.0,64.0 84.0,58.6 131.0,35.6" fill="#bb9c74"/><polygon points="40.5,43.0 52.0,48.6 52.0,50.6 40.5,45.0" fill="#7a5a3a"/><polygon points="52.0,48.6 116.0,16.6 116.0,18.6 52.0,50.6" fill="#8a6a48"/><polygon points="88.0,64.0 143.0,36.6 143.0,38.6 88.0,66.0" fill="#8a6a48"/><rect x="54.0" y="49.6" width="0.8" height="2.6" fill="#3a2a1c"/><rect x="60.6" y="46.3" width="0.8" height="2.6" fill="#3a2a1c"/><rect x="67.2" y="43.0" width="0.8" height="2.6" fill="#3a2a1c"/><rect x="73.8" y="39.7" width="0.8" height="2.6" fill="#3a2a1c"/><rect x="80.4" y="36.4" width="0.8" height="2.6" fill="#3a2a1c"/><rect x="87.0" y="33.1" width="0.8" height="2.6" fill="#3a2a1c"/><rect x="93.6" y="29.8" width="0.8" height="2.6" fill="#3a2a1c"/><rect x="100.2" y="26.5" width="0.8" height="2.6" fill="#3a2a1c"/><rect x="106.8" y="23.2" width="0.8" height="2.6" fill="#3a2a1c"/><rect x="90.0" y="64.6" width="0.8" height="2.6" fill="#3a2a1c"/><rect x="97.0" y="61.1" width="0.8" height="2.6" fill="#3a2a1c"/><rect x="104.0" y="57.6" width="0.8" height="2.6" fill="#3a2a1c"/><rect x="111.0" y="54.1" width="0.8" height="2.6" fill="#3a2a1c"/><rect x="118.0" y="50.6" width="0.8" height="2.6" fill="#3a2a1c"/><rect x="125.0" y="47.1" width="0.8" height="2.6" fill="#3a2a1c"/><rect x="132.0" y="43.6" width="0.8" height="2.6" fill="#3a2a1c"/><polygon points="60.0,37.6 104.6,15.4 104.6,7.8 60.0,30.0" fill="#6a4a30"/><polygon points="61.9,35.0 65.1,33.5 65.1,28.9 61.9,30.4" fill="#6f9ae6"/><polygon points="68.3,31.9 71.5,30.3 71.5,25.7 68.3,27.3" fill="#6f9ae6"/><polygon points="74.7,28.7 77.8,27.1 77.8,22.5 74.7,24.1" fill="#6f9ae6"/><polygon points="81.0,25.5 84.2,23.9 84.2,19.3 81.0,20.9" fill="#6f9ae6"/><polygon points="87.4,22.4 90.6,20.8 90.6,16.2 87.4,17.8" fill="#6f9ae6"/><polygon points="93.8,19.2 97.0,17.6 97.0,13.0 93.8,14.6" fill="#6f9ae6"/><polygon points="100.1,16.0 103.3,14.4 103.3,9.8 100.1,11.4" fill="#6f9ae6"/><polygon points="60.0,37.6 52.0,33.6 52.0,26.0 56.0,23.4 60.0,30.0" fill="#7a5838"/><polygon points="60.0,30.0 104.6,7.8 100.6,1.2 56.0,23.4" fill="#4a3428"/><polygon points="59.2,30.6 105.4,7.6 105.4,8.8 59.2,31.8" fill="#3a281e"/><polygon points="92.0,54.6 140.0,30.6 140.0,22.2 92.0,46.2" fill="#6a4a30"/><polygon points="93.8,52.1 96.8,50.6 96.8,45.2 93.8,46.7" fill="#6f9ae6"/><polygon points="99.8,49.1 102.8,47.6 102.8,42.2 99.8,43.7" fill="#6f9ae6"/><polygon points="105.8,46.1 108.8,44.6 108.8,39.2 105.8,40.7" fill="#6f9ae6"/><polygon points="111.8,43.1 114.8,41.6 114.8,36.2 111.8,37.7" fill="#6f9ae6"/><polygon points="117.8,40.1 120.8,38.6 120.8,33.2 117.8,34.7" fill="#6f9ae6"/><polygon points="123.8,37.1 126.8,35.6 126.8,30.2 123.8,31.7" fill="#6f9ae6"/><polygon points="129.8,34.1 132.8,32.6 132.8,27.2 129.8,28.7" fill="#6f9ae6"/><polygon points="135.8,31.1 138.8,29.6 138.8,24.2 135.8,25.7" fill="#6f9ae6"/><polygon points="92.0,54.6 84.0,50.6 84.0,42.2 88.0,39.2 92.0,46.2" fill="#7a5838"/><polygon points="92.0,46.2 140.0,22.2 136.0,15.2 88.0,39.2" fill="#4a3428"/><polygon points="91.2,46.8 140.8,22.0 140.8,23.2 91.2,48.0" fill="#3a281e"/><rect x="75.6" y="56.0" width="0.7" height="2.4" fill="#d8b080"/><rect x="84.0" y="61.0" width="0.7" height="2.4" fill="#d8b080"/></g>
<use href="#rot" x="136" y="48.6"/>
<use href="#i-light" transform="translate(5 5.5) scale(.5)"/>
</svg>
<span class="t r" style="left:3.8px;top:65.5px;font-size:6.86px;letter-spacing:1.13px;color:#1f1d1b;-webkit-text-stroke:.14px #1f1d1b;">SHIPPING XL</span>
<div class="tag"></div>
<span class="t" style="left:125.0px;top:68.1px;font-size:5.35px;letter-spacing:1.06px;color:#fff;">-460.000</span>
</div>
<div class="card" style="left:1395px;top:419px">
<svg width="168" height="78" viewBox="0 0 168 78"><use href="#grid"/>
<g clip-path="url(#cardclip)"><polygon points="57.5,40.0 88.5,55.5 119.5,40.0 119.5,41.4 88.5,57.0 57.5,41.4" fill="#5c564e"/><polygon points="57.5,40.0 88.5,24.5 119.5,40.0 88.5,55.5" fill="#8c847a"/><ellipse cx="60.5" cy="41.6" rx="1.1" ry="0.8" fill="#e8302a"/><ellipse cx="116.5" cy="41.6" rx="1.1" ry="0.8" fill="#3aa83a"/><ellipse cx="63.7" cy="43.1" rx="1.1" ry="0.8" fill="#3aa83a"/><ellipse cx="113.3" cy="43.1" rx="1.1" ry="0.8" fill="#e8302a"/><ellipse cx="66.9" cy="44.7" rx="1.1" ry="0.8" fill="#f0c030"/><ellipse cx="110.1" cy="44.7" rx="1.1" ry="0.8" fill="#c83ac8"/><ellipse cx="70.1" cy="46.2" rx="1.1" ry="0.8" fill="#e8302a"/><ellipse cx="106.9" cy="46.2" rx="1.1" ry="0.8" fill="#3aa83a"/><ellipse cx="73.3" cy="47.8" rx="1.1" ry="0.8" fill="#3aa83a"/><ellipse cx="103.7" cy="47.8" rx="1.1" ry="0.8" fill="#e8302a"/><ellipse cx="76.5" cy="49.4" rx="1.1" ry="0.8" fill="#f0c030"/><ellipse cx="100.5" cy="49.4" rx="1.1" ry="0.8" fill="#c83ac8"/><ellipse cx="79.7" cy="50.9" rx="1.1" ry="0.8" fill="#e8302a"/><ellipse cx="97.3" cy="50.9" rx="1.1" ry="0.8" fill="#3aa83a"/><ellipse cx="82.9" cy="52.5" rx="1.1" ry="0.8" fill="#3aa83a"/><ellipse cx="94.1" cy="52.5" rx="1.1" ry="0.8" fill="#e8302a"/><ellipse cx="86.1" cy="54.0" rx="1.1" ry="0.8" fill="#f0c030"/><ellipse cx="90.9" cy="54.0" rx="1.1" ry="0.8" fill="#c83ac8"/><polygon points="68.5,41.0 88.5,50.8 88.5,22.4 68.5,12.6" fill="#b48c5a"/><polygon points="88.5,50.8 108.9,41.0 108.9,12.6 88.5,22.4" fill="#8e6a40"/><polygon points="68.5,12.6 88.5,2.8 108.9,12.6 88.5,22.4" fill="#3fba3c"/><polygon points="68.5,12.6 88.5,22.4 108.9,12.6 108.9,14.2 88.5,24.0 68.5,14.2" fill="#2a8f2c"/><ellipse cx="86.5" cy="11.0" rx="2.0" ry="1.0" fill="#f0f0f0"/><ellipse cx="92.5" cy="14.0" rx="1.6" ry="0.8" fill="#f0f0f0"/><polygon points="70.9,17.0 74.9,19.0 74.9,24.0 70.9,22.0" fill="#62b4ea"/><polygon points="70.9,17.0 74.9,19.0 74.9,20.0 70.9,18.0" fill="#3f86c0"/><polygon points="82.5,22.4 88.5,25.4 88.5,31.4 82.5,28.4" fill="#62b4ea"/><polygon points="82.5,22.4 88.5,25.4 88.5,26.4 82.5,23.4" fill="#3f86c0"/><polygon points="74.5,29.6 78.1,31.4 78.1,36.4 74.5,34.6" fill="#62b4ea"/><polygon points="74.5,29.6 78.1,31.4 78.1,32.4 74.5,30.6" fill="#3f86c0"/><polygon points="70.5,35.6 75.1,37.9 75.1,43.9 70.5,41.6" fill="#62b4ea"/><polygon points="70.5,35.6 75.1,37.9 75.1,38.9 70.5,36.6" fill="#3f86c0"/><polygon points="79.9,40.0 81.9,41.0 81.9,44.0 79.9,43.0" fill="#62b4ea"/><polygon points="79.9,40.0 81.9,41.0 81.9,42.0 79.9,41.0" fill="#3f86c0"/><polygon points="84.5,41.6 86.5,42.6 86.5,45.6 84.5,44.6" fill="#62b4ea"/><polygon points="84.5,41.6 86.5,42.6 86.5,43.6 84.5,42.6" fill="#3f86c0"/><polygon points="90.5,24.4 95.5,21.9 95.5,27.9 90.5,30.4" fill="#62b4ea"/><polygon points="90.5,24.4 95.5,21.9 95.5,22.9 90.5,25.4" fill="#3f86c0"/><polygon points="100.5,19.4 102.9,18.2 102.9,21.6 100.5,22.8" fill="#62b4ea"/><polygon points="100.5,19.4 102.9,18.2 102.9,19.2 100.5,20.4" fill="#3f86c0"/><polygon points="101.5,29.0 106.5,26.5 106.5,32.5 101.5,35.0" fill="#62b4ea"/><polygon points="101.5,29.0 106.5,26.5 106.5,27.5 101.5,30.0" fill="#3f86c0"/><polygon points="93.5,35.6 95.5,34.6 95.5,37.2 93.5,38.2" fill="#62b4ea"/><polygon points="93.5,35.6 95.5,34.6 95.5,35.6 93.5,36.6" fill="#3f86c0"/><polygon points="96.1,41.0 100.7,38.7 100.7,44.7 96.1,47.0" fill="#62b4ea"/><polygon points="96.1,41.0 100.7,38.7 100.7,39.7 96.1,42.0" fill="#3f86c0"/><polygon points="104.5,37.0 107.5,35.5 107.5,39.5 104.5,41.0" fill="#62b4ea"/><polygon points="104.5,37.0 107.5,35.5 107.5,36.5 104.5,38.0" fill="#3f86c0"/><polygon points="104.5,16.0 107.5,14.5 107.5,18.5 104.5,20.0" fill="#62b4ea"/><polygon points="104.5,16.0 107.5,14.5 107.5,15.5 104.5,17.0" fill="#3f86c0"/></g>
<use href="#i-hotel" transform="translate(5 5.5) scale(.5)"/>
<use href="#i-group" transform="translate(5 50.5) scale(.5)"/>
</svg>
<span class="t r" style="left:3.8px;top:65.5px;font-size:6.86px;letter-spacing:0.91px;color:#1f1d1b;-webkit-text-stroke:.14px #1f1d1b;">GREENOVA</span>
<div class="tag"></div>
<span class="t" style="left:125.5px;top:68.1px;font-size:5.35px;letter-spacing:0.71px;color:#fff;">-1.2 MIO.</span>
</div>
<div class="card" style="left:1590px;top:419px">
<svg width="168" height="78" viewBox="0 0 168 78"><use href="#grid"/>
<g clip-path="url(#cardclip)"><polygon points="39.9,46.0 88.5,70.3 137.1,46.0 137.1,47.6 88.5,72.0 39.9,47.6" fill="#9a7a40"/><polygon points="39.9,46.0 88.5,21.7 137.1,46.0 88.5,70.3" fill="#d6b46c"/><polygon points="42.5,46.0 68.5,33.0 86.5,54.0 72.5,61.0" fill="#3a9a30"/><polygon points="96.5,58.0 118.5,46.0 134.5,47.0 102.5,63.0" fill="#3a9a30"/><polygon points="78.5,60.0 86.5,55.0 94.5,62.0 88.5,67.0" fill="#3a9a30"/><ellipse cx="94.5" cy="60.0" rx="9.0" ry="4.0" fill="#2f8f2c"/><polygon points="84.5,31.0 97.5,37.5 97.5,31.9 84.5,25.4" fill="#2a5ac8"/><polygon points="97.5,37.5 105.5,33.5 105.5,27.9 97.5,31.9" fill="#1e4090"/><polygon points="84.5,25.4 97.5,31.9 105.5,27.9 92.5,21.4" fill="#5f83d5"/><polygon points="97.5,37.5 110.5,44.0 110.5,38.4 97.5,31.9" fill="#f09020"/><polygon points="110.5,44.0 118.5,40.0 118.5,34.4 110.5,38.4" fill="#ac6717"/><polygon points="97.5,31.9 110.5,38.4 118.5,34.4 105.5,27.9" fill="#f3ab57"/><polygon points="84.5,25.4 97.5,31.9 97.5,26.3 84.5,19.8" fill="#f09020"/><polygon points="97.5,31.9 105.5,27.9 105.5,22.3 97.5,26.3" fill="#ac6717"/><polygon points="84.5,19.8 97.5,26.3 105.5,22.3 92.5,15.8" fill="#f3ab57"/><polygon points="97.5,31.9 110.5,38.4 110.5,32.8 97.5,26.3" fill="#2a5ac8"/><polygon points="110.5,38.4 118.5,34.4 118.5,28.8 110.5,32.8" fill="#1e4090"/><polygon points="97.5,26.3 110.5,32.8 118.5,28.8 105.5,22.3" fill="#5f83d5"/><polygon points="84.5,19.8 97.5,26.3 97.5,20.7 84.5,14.2" fill="#d82a2a"/><polygon points="97.5,26.3 105.5,22.3 105.5,16.7 97.5,20.7" fill="#9b1e1e"/><polygon points="84.5,14.2 97.5,20.7 105.5,16.7 92.5,10.2" fill="#e15f5f"/><polygon points="97.5,26.3 110.5,32.8 110.5,27.2 97.5,20.7" fill="#2a5ac8"/><polygon points="110.5,32.8 118.5,28.8 118.5,23.2 110.5,27.2" fill="#1e4090"/><polygon points="97.5,20.7 110.5,27.2 118.5,23.2 105.5,16.7" fill="#5f83d5"/><polygon points="84.5,14.2 97.5,20.7 97.5,15.1 84.5,8.6" fill="#2aa82a"/><polygon points="97.5,20.7 105.5,16.7 105.5,11.1 97.5,15.1" fill="#1e781e"/><polygon points="84.5,8.6 97.5,15.1 105.5,11.1 92.5,4.6" fill="#5fbd5f"/><polygon points="97.5,20.7 110.5,27.2 110.5,21.6 97.5,15.1" fill="#d82a2a"/><polygon points="110.5,27.2 118.5,23.2 118.5,17.6 110.5,21.6" fill="#9b1e1e"/><polygon points="97.5,15.1 110.5,21.6 118.5,17.6 105.5,11.1" fill="#e15f5f"/><polygon points="73.5,37.5 81.5,41.5 81.5,35.9 73.5,31.9" fill="#2a5ac8"/><polygon points="81.5,41.5 94.5,35.0 94.5,29.4 81.5,35.9" fill="#1e4090"/><polygon points="73.5,31.9 81.5,35.9 94.5,29.4 86.5,25.4" fill="#5f83d5"/><polygon points="60.5,44.0 68.5,48.0 68.5,42.4 60.5,38.4" fill="#2aa82a"/><polygon points="68.5,48.0 81.5,41.5 81.5,35.9 68.5,42.4" fill="#1e781e"/><polygon points="60.5,38.4 68.5,42.4 81.5,35.9 73.5,31.9" fill="#5fbd5f"/><polygon points="73.5,31.9 81.5,35.9 81.5,30.3 73.5,26.3" fill="#f0d020"/><polygon points="81.5,35.9 94.5,29.4 94.5,23.8 81.5,30.3" fill="#ac9517"/><polygon points="73.5,26.3 81.5,30.3 94.5,23.8 86.5,19.8" fill="#f3db57"/><polygon points="60.5,38.4 68.5,42.4 68.5,36.8 60.5,32.8" fill="#2a5ac8"/><polygon points="68.5,42.4 81.5,35.9 81.5,30.3 68.5,36.8" fill="#1e4090"/><polygon points="60.5,32.8 68.5,36.8 81.5,30.3 73.5,26.3" fill="#5f83d5"/><polygon points="73.5,26.3 81.5,30.3 81.5,24.7 73.5,20.7" fill="#d82a2a"/><polygon points="81.5,30.3 94.5,23.8 94.5,18.2 81.5,24.7" fill="#9b1e1e"/><polygon points="73.5,20.7 81.5,24.7 94.5,18.2 86.5,14.2" fill="#e15f5f"/><polygon points="60.5,32.8 68.5,36.8 68.5,31.2 60.5,27.2" fill="#f0d020"/><polygon points="68.5,36.8 81.5,30.3 81.5,24.7 68.5,31.2" fill="#ac9517"/><polygon points="60.5,27.2 68.5,31.2 81.5,24.7 73.5,20.7" fill="#f3db57"/><polygon points="73.5,20.7 81.5,24.7 81.5,19.1 73.5,15.1" fill="#f09020"/><polygon points="81.5,24.7 94.5,18.2 94.5,12.6 81.5,19.1" fill="#ac6717"/><polygon points="73.5,15.1 81.5,19.1 94.5,12.6 86.5,8.6" fill="#f3ab57"/><polygon points="68.5,48.0 76.5,52.0 76.5,46.4 68.5,42.4" fill="#2aa82a"/><polygon points="76.5,52.0 84.5,48.0 84.5,42.4 76.5,46.4" fill="#1e781e"/><polygon points="68.5,42.4 76.5,46.4 84.5,42.4 76.5,38.4" fill="#5fbd5f"/><polygon points="88.5,46.0 94.5,49.0 94.5,43.4 88.5,40.4" fill="#f0d020"/><polygon points="94.5,49.0 100.5,46.0 100.5,40.4 94.5,43.4" fill="#ac9517"/><polygon points="88.5,40.4 94.5,43.4 100.5,40.4 94.5,37.4" fill="#f3db57"/><polygon points="88.5,40.4 94.5,43.4 94.5,37.8 88.5,34.8" fill="#d82a2a"/><polygon points="94.5,43.4 100.5,40.4 100.5,34.8 94.5,37.8" fill="#9b1e1e"/><polygon points="88.5,34.8 94.5,37.8 100.5,34.8 94.5,31.8" fill="#e15f5f"/><polygon points="88.5,48.0 94.5,45.0 94.5,52.0 88.5,55.0" fill="#3a3a3a"/><rect x="44.0" y="35.0" width="1.1" height="10.0" fill="#7a4e22"/><path d="M44.5 32.2l2.2 1.1l2.8 0.2l-1.8 1.6l1.4 3.0l-4.6 -2.5l-4.6 2.5l1.4 -3.0Z" fill="#2a9430"/><path d="M39.5 34.1l5.0 -1.8l0.0 2.6Z" fill="#69b46e"/><rect x="48.0" y="39.0" width="1.1" height="9.0" fill="#7a4e22"/><path d="M48.5 36.2l2.2 1.1l2.8 0.2l-1.8 1.6l1.4 3.0l-4.6 -2.5l-4.6 2.5l1.4 -3.0Z" fill="#2a9430"/><path d="M43.5 38.1l5.0 -1.8l0.0 2.6Z" fill="#69b46e"/><rect x="54.0" y="30.0" width="1.1" height="10.0" fill="#7a4e22"/><path d="M54.5 27.2l2.2 1.1l2.8 0.2l-1.8 1.6l1.4 3.0l-4.6 -2.5l-4.6 2.5l1.4 -3.0Z" fill="#2a9430"/><path d="M49.5 29.1l5.0 -1.8l0.0 2.6Z" fill="#69b46e"/><rect x="58.0" y="44.0" width="1.1" height="9.0" fill="#7a4e22"/><path d="M58.5 41.2l2.2 1.1l2.8 0.2l-1.8 1.6l1.4 3.0l-4.6 -2.5l-4.6 2.5l1.4 -3.0Z" fill="#2a9430"/><path d="M53.5 43.1l5.0 -1.8l0.0 2.6Z" fill="#69b46e"/><rect x="66.0" y="47.4" width="1.1" height="9.6" fill="#7a4e22"/><path d="M66.5 44.6l2.2 1.1l2.8 0.2l-1.8 1.6l1.4 3.0l-4.6 -2.5l-4.6 2.5l1.4 -3.0Z" fill="#2a9430"/><path d="M61.5 46.5l5.0 -1.8l0.0 2.6Z" fill="#69b46e"/><rect x="71.0" y="51.6" width="1.1" height="8.0" fill="#7a4e22"/><path d="M71.5 48.8l2.2 1.1l2.8 0.2l-1.8 1.6l1.4 3.0l-4.6 -2.5l-4.6 2.5l1.4 -3.0Z" fill="#2a9430"/><path d="M66.5 50.7l5.0 -1.8l0.0 2.6Z" fill="#69b46e"/><rect x="78.0" y="55.0" width="1.1" height="9.0" fill="#7a4e22"/><path d="M78.5 52.2l2.2 1.1l2.8 0.2l-1.8 1.6l1.4 3.0l-4.6 -2.5l-4.6 2.5l1.4 -3.0Z" fill="#2a9430"/><path d="M73.5 54.1l5.0 -1.8l0.0 2.6Z" fill="#69b46e"/><rect x="74.0" y="43.0" width="1.1" height="9.0" fill="#7a4e22"/><path d="M74.5 40.2l2.2 1.1l2.8 0.2l-1.8 1.6l1.4 3.0l-4.6 -2.5l-4.6 2.5l1.4 -3.0Z" fill="#2a9430"/><path d="M69.5 42.1l5.0 -1.8l0.0 2.6Z" fill="#69b46e"/><rect x="112.0" y="19.0" width="1.1" height="9.0" fill="#7a4e22"/><path d="M112.5 16.2l2.2 1.1l2.8 0.2l-1.8 1.6l1.4 3.0l-4.6 -2.5l-4.6 2.5l1.4 -3.0Z" fill="#2a9430"/><path d="M107.5 18.1l5.0 -1.8l0.0 2.6Z" fill="#69b46e"/><rect x="118.0" y="22.4" width="1.1" height="9.6" fill="#7a4e22"/><path d="M118.5 19.6l2.2 1.1l2.8 0.2l-1.8 1.6l1.4 3.0l-4.6 -2.5l-4.6 2.5l1.4 -3.0Z" fill="#2a9430"/><path d="M113.5 21.5l5.0 -1.8l0.0 2.6Z" fill="#69b46e"/><rect x="124.0" y="28.0" width="1.1" height="10.0" fill="#7a4e22"/><path d="M124.5 25.2l2.2 1.1l2.8 0.2l-1.8 1.6l1.4 3.0l-4.6 -2.5l-4.6 2.5l1.4 -3.0Z" fill="#2a9430"/><path d="M119.5 27.1l5.0 -1.8l0.0 2.6Z" fill="#69b46e"/><rect x="129.0" y="32.0" width="1.1" height="10.0" fill="#7a4e22"/><path d="M129.5 29.2l2.2 1.1l2.8 0.2l-1.8 1.6l1.4 3.0l-4.6 -2.5l-4.6 2.5l1.4 -3.0Z" fill="#2a9430"/><path d="M124.5 31.1l5.0 -1.8l0.0 2.6Z" fill="#69b46e"/><rect x="132.0" y="37.0" width="1.1" height="9.0" fill="#7a4e22"/><path d="M132.5 34.2l2.2 1.1l2.8 0.2l-1.8 1.6l1.4 3.0l-4.6 -2.5l-4.6 2.5l1.4 -3.0Z" fill="#2a9430"/><path d="M127.5 36.1l5.0 -1.8l0.0 2.6Z" fill="#69b46e"/><rect x="118.0" y="43.0" width="1.1" height="9.0" fill="#7a4e22"/><path d="M118.5 40.2l2.2 1.1l2.8 0.2l-1.8 1.6l1.4 3.0l-4.6 -2.5l-4.6 2.5l1.4 -3.0Z" fill="#2a9430"/><path d="M113.5 42.1l5.0 -1.8l0.0 2.6Z" fill="#69b46e"/><rect x="104.0" y="47.0" width="1.1" height="9.0" fill="#7a4e22"/><path d="M104.5 44.2l2.2 1.1l2.8 0.2l-1.8 1.6l1.4 3.0l-4.6 -2.5l-4.6 2.5l1.4 -3.0Z" fill="#2a9430"/><path d="M99.5 46.1l5.0 -1.8l0.0 2.6Z" fill="#69b46e"/><rect x="98.0" y="52.4" width="1.1" height="8.6" fill="#7a4e22"/><path d="M98.5 49.6l2.2 1.1l2.8 0.2l-1.8 1.6l1.4 3.0l-4.6 -2.5l-4.6 2.5l1.4 -3.0Z" fill="#2a9430"/><path d="M93.5 51.5l5.0 -1.8l0.0 2.6Z" fill="#69b46e"/><rect x="86.0" y="48.0" width="1.1" height="8.0" fill="#7a4e22"/><path d="M86.5 45.2l2.2 1.1l2.8 0.2l-1.8 1.6l1.4 3.0l-4.6 -2.5l-4.6 2.5l1.4 -3.0Z" fill="#2a9430"/><path d="M81.5 47.1l5.0 -1.8l0.0 2.6Z" fill="#69b46e"/><rect x="110.0" y="40.0" width="1.1" height="8.0" fill="#7a4e22"/><path d="M110.5 37.2l2.2 1.1l2.8 0.2l-1.8 1.6l1.4 3.0l-4.6 -2.5l-4.6 2.5l1.4 -3.0Z" fill="#2a9430"/><path d="M105.5 39.1l5.0 -1.8l0.0 2.6Z" fill="#69b46e"/><rect x="102.5" y="57.0" width="5.0" height="2.0" fill="#d8a83a"/></g>
<use href="#i-hotel" transform="translate(5 5.5) scale(.5)"/>
<use href="#i-group" transform="translate(5 50.5) scale(.5)"/>
</svg>
<span class="t r" style="left:3.8px;top:65.5px;font-size:6.86px;letter-spacing:0.86px;color:#1f1d1b;-webkit-text-stroke:.14px #1f1d1b;">HOTEL BOXES</span>
<div class="tag"></div>
<span class="t" style="left:125.5px;top:68.1px;font-size:5.35px;letter-spacing:0.71px;color:#fff;">-2.2 MIO.</span>
</div>
<div class="card" style="left:615px;top:523px">
<svg width="168" height="78" viewBox="0 0 168 78"><use href="#grid"/>
<g clip-path="url(#cardclip)"><polygon points="41.5,47.0 88.5,70.5 135.5,47.0 135.5,49.0 88.5,72.6 41.5,49.0" fill="#3a281c"/><polygon points="41.5,47.0 88.5,23.5 135.5,47.0 88.5,70.5" fill="#5c4030"/><polygon points="45.5,47.0 88.5,25.5 131.5,47.0 88.5,68.5" fill="#6b4c38"/><polygon points="52.5,47.0 78.5,34.0 102.5,46.0 76.5,59.0" fill="#e9e4da"/><polygon points="54.5,48.0 76.5,59.0 76.5,61.6 54.5,50.6" fill="#4d7fc8"/><ellipse cx="84.5" cy="59.4" rx="19.0" ry="8.4" fill="#3c86c8"/><ellipse cx="84.5" cy="59.0" rx="17.4" ry="7.4" fill="#57a8e6"/><ellipse cx="78.5" cy="57.0" rx="7.0" ry="3.0" fill="#86c8f4"/><ellipse cx="74.5" cy="51.4" rx="6.0" ry="2.6" fill="#57a8e6"/><polygon points="68.5,39.0 94.5,52.0 94.5,58.6 68.5,45.6" fill="#f3f3f5"/><polygon points="94.5,52.0 113.5,42.6 113.5,49.2 94.5,58.6" fill="#c3c8d6"/><polygon points="70.5,42.4 92.5,53.4 92.5,55.6 70.5,44.6" fill="#4f86cf"/><polygon points="66.5,38.0 86.5,23.0 113.5,36.6 94.5,51.6" fill="#d8a84e"/><polygon points="66.5,38.0 86.5,23.0 89.5,24.6 69.5,39.4" fill="#ecc878"/><polygon points="86.5,23.0 113.5,36.6 113.5,41.0 94.5,51.6 94.5,47.0" fill="#c08c38"/><polygon points="66.5,38.0 94.5,51.6 94.5,54.0 66.5,40.4" fill="#a97a30"/><polygon points="76.5,28.4 84.5,21.6 94.5,26.6 85.5,33.6" fill="#e0b45c"/><polygon points="96.5,33.0 103.5,27.4 110.5,31.0 104.1,36.6" fill="#8a6a3a"/><rect x="44.0" y="36.0" width="1.1" height="9.0" fill="#7a4e22"/><path d="M44.5 33.2l2.2 1.1l2.8 0.2l-1.8 1.6l1.4 3.0l-4.6 -2.5l-4.6 2.5l1.4 -3.0Z" fill="#35b030"/><path d="M39.5 35.1l5.0 -1.8l0.0 2.6Z" fill="#71c76e"/><rect x="48.0" y="32.4" width="1.1" height="9.6" fill="#7a4e22"/><path d="M48.5 29.6l2.2 1.1l2.8 0.2l-1.8 1.6l1.4 3.0l-4.6 -2.5l-4.6 2.5l1.4 -3.0Z" fill="#35b030"/><path d="M43.5 31.5l5.0 -1.8l0.0 2.6Z" fill="#71c76e"/><rect x="54.0" y="29.0" width="1.1" height="10.0" fill="#7a4e22"/><path d="M54.5 26.2l2.2 1.1l2.8 0.2l-1.8 1.6l1.4 3.0l-4.6 -2.5l-4.6 2.5l1.4 -3.0Z" fill="#35b030"/><path d="M49.5 28.1l5.0 -1.8l0.0 2.6Z" fill="#71c76e"/><rect x="60.0" y="26.0" width="1.1" height="10.0" fill="#7a4e22"/><path d="M60.5 23.2l2.2 1.1l2.8 0.2l-1.8 1.6l1.4 3.0l-4.6 -2.5l-4.6 2.5l1.4 -3.0Z" fill="#35b030"/><path d="M55.5 25.1l5.0 -1.8l0.0 2.6Z" fill="#71c76e"/><rect x="66.0" y="22.6" width="1.1" height="10.4" fill="#7a4e22"/><path d="M66.5 19.8l2.2 1.1l2.8 0.2l-1.8 1.6l1.4 3.0l-4.6 -2.5l-4.6 2.5l1.4 -3.0Z" fill="#35b030"/><path d="M61.5 21.7l5.0 -1.8l0.0 2.6Z" fill="#71c76e"/><rect x="72.0" y="20.0" width="1.1" height="10.0" fill="#7a4e22"/><path d="M72.5 17.2l2.2 1.1l2.8 0.2l-1.8 1.6l1.4 3.0l-4.6 -2.5l-4.6 2.5l1.4 -3.0Z" fill="#35b030"/><path d="M67.5 19.1l5.0 -1.8l0.0 2.6Z" fill="#71c76e"/><rect x="79.0" y="16.4" width="1.1" height="10.0" fill="#7a4e22"/><path d="M79.5 13.6l2.2 1.1l2.8 0.2l-1.8 1.6l1.4 3.0l-4.6 -2.5l-4.6 2.5l1.4 -3.0Z" fill="#35b030"/><path d="M74.5 15.5l5.0 -1.8l0.0 2.6Z" fill="#71c76e"/><rect x="86.0" y="15.0" width="1.1" height="9.0" fill="#7a4e22"/><path d="M86.5 12.2l2.2 1.1l2.8 0.2l-1.8 1.6l1.4 3.0l-4.6 -2.5l-4.6 2.5l1.4 -3.0Z" fill="#35b030"/><path d="M81.5 14.1l5.0 -1.8l0.0 2.6Z" fill="#71c76e"/><rect x="95.0" y="20.0" width="1.1" height="9.0" fill="#7a4e22"/><path d="M95.5 17.2l2.2 1.1l2.8 0.2l-1.8 1.6l1.4 3.0l-4.6 -2.5l-4.6 2.5l1.4 -3.0Z" fill="#35b030"/><path d="M90.5 19.1l5.0 -1.8l0.0 2.6Z" fill="#71c76e"/><rect x="101.0" y="22.8" width="1.1" height="9.6" fill="#7a4e22"/><path d="M101.5 20.0l2.2 1.1l2.8 0.2l-1.8 1.6l1.4 3.0l-4.6 -2.5l-4.6 2.5l1.4 -3.0Z" fill="#35b030"/><path d="M96.5 21.9l5.0 -1.8l0.0 2.6Z" fill="#71c76e"/><rect x="122.0" y="32.0" width="1.1" height="9.0" fill="#7a4e22"/><path d="M122.5 29.2l2.2 1.1l2.8 0.2l-1.8 1.6l1.4 3.0l-4.6 -2.5l-4.6 2.5l1.4 -3.0Z" fill="#35b030"/><path d="M117.5 31.1l5.0 -1.8l0.0 2.6Z" fill="#71c76e"/><rect x="128.0" y="35.4" width="1.1" height="9.0" fill="#7a4e22"/><path d="M128.5 32.6l2.2 1.1l2.8 0.2l-1.8 1.6l1.4 3.0l-4.6 -2.5l-4.6 2.5l1.4 -3.0Z" fill="#35b030"/><path d="M123.5 34.5l5.0 -1.8l0.0 2.6Z" fill="#71c76e"/><rect x="125.0" y="31.0" width="1.1" height="8.0" fill="#7a4e22"/><path d="M125.5 28.2l2.2 1.1l2.8 0.2l-1.8 1.6l1.4 3.0l-4.6 -2.5l-4.6 2.5l1.4 -3.0Z" fill="#35b030"/><path d="M120.5 30.1l5.0 -1.8l0.0 2.6Z" fill="#71c76e"/><rect x="116.0" y="29.0" width="1.1" height="9.0" fill="#7a4e22"/><path d="M116.5 26.2l2.2 1.1l2.8 0.2l-1.8 1.6l1.4 3.0l-4.6 -2.5l-4.6 2.5l1.4 -3.0Z" fill="#35b030"/><path d="M111.5 28.1l5.0 -1.8l0.0 2.6Z" fill="#71c76e"/><rect x="50.0" y="41.4" width="1.1" height="8.6" fill="#7a4e22"/><path d="M50.5 38.6l2.2 1.1l2.8 0.2l-1.8 1.6l1.4 3.0l-4.6 -2.5l-4.6 2.5l1.4 -3.0Z" fill="#35b030"/><path d="M45.5 40.5l5.0 -1.8l0.0 2.6Z" fill="#71c76e"/><rect x="58.0" y="45.0" width="1.1" height="9.0" fill="#7a4e22"/><path d="M58.5 42.2l2.2 1.1l2.8 0.2l-1.8 1.6l1.4 3.0l-4.6 -2.5l-4.6 2.5l1.4 -3.0Z" fill="#35b030"/><path d="M53.5 44.1l5.0 -1.8l0.0 2.6Z" fill="#71c76e"/><rect x="66.0" y="49.0" width="1.1" height="9.0" fill="#7a4e22"/><path d="M66.5 46.2l2.2 1.1l2.8 0.2l-1.8 1.6l1.4 3.0l-4.6 -2.5l-4.6 2.5l1.4 -3.0Z" fill="#35b030"/><path d="M61.5 48.1l5.0 -1.8l0.0 2.6Z" fill="#71c76e"/><rect x="80.0" y="40.0" width="1.1" height="9.0" fill="#7a4e22"/><path d="M80.5 37.2l2.2 1.1l2.8 0.2l-1.8 1.6l1.4 3.0l-4.6 -2.5l-4.6 2.5l1.4 -3.0Z" fill="#35b030"/><path d="M75.5 39.1l5.0 -1.8l0.0 2.6Z" fill="#71c76e"/><rect x="88.0" y="43.0" width="1.1" height="10.0" fill="#7a4e22"/><path d="M88.5 40.2l2.2 1.1l2.8 0.2l-1.8 1.6l1.4 3.0l-4.6 -2.5l-4.6 2.5l1.4 -3.0Z" fill="#35b030"/><path d="M83.5 42.1l5.0 -1.8l0.0 2.6Z" fill="#71c76e"/><rect x="98.0" y="48.0" width="1.1" height="9.6" fill="#7a4e22"/><path d="M98.5 45.2l2.2 1.1l2.8 0.2l-1.8 1.6l1.4 3.0l-4.6 -2.5l-4.6 2.5l1.4 -3.0Z" fill="#35b030"/><path d="M93.5 47.1l5.0 -1.8l0.0 2.6Z" fill="#71c76e"/><rect x="105.0" y="43.0" width="1.1" height="10.0" fill="#7a4e22"/><path d="M105.5 40.2l2.2 1.1l2.8 0.2l-1.8 1.6l1.4 3.0l-4.6 -2.5l-4.6 2.5l1.4 -3.0Z" fill="#35b030"/><path d="M100.5 42.1l5.0 -1.8l0.0 2.6Z" fill="#71c76e"/><rect x="111.0" y="41.0" width="1.1" height="9.6" fill="#7a4e22"/><path d="M111.5 38.2l2.2 1.1l2.8 0.2l-1.8 1.6l1.4 3.0l-4.6 -2.5l-4.6 2.5l1.4 -3.0Z" fill="#35b030"/><path d="M106.5 40.1l5.0 -1.8l0.0 2.6Z" fill="#71c76e"/><rect x="117.0" y="39.0" width="1.1" height="9.0" fill="#7a4e22"/><path d="M117.5 36.2l2.2 1.1l2.8 0.2l-1.8 1.6l1.4 3.0l-4.6 -2.5l-4.6 2.5l1.4 -3.0Z" fill="#35b030"/><path d="M112.5 38.1l5.0 -1.8l0.0 2.6Z" fill="#71c76e"/><rect x="121.0" y="44.0" width="1.1" height="8.6" fill="#7a4e22"/><path d="M121.5 41.2l2.2 1.1l2.8 0.2l-1.8 1.6l1.4 3.0l-4.6 -2.5l-4.6 2.5l1.4 -3.0Z" fill="#35b030"/><path d="M116.5 43.1l5.0 -1.8l0.0 2.6Z" fill="#71c76e"/><rect x="74.0" y="55.4" width="1.1" height="8.6" fill="#7a4e22"/><path d="M74.5 52.6l2.2 1.1l2.8 0.2l-1.8 1.6l1.4 3.0l-4.6 -2.5l-4.6 2.5l1.4 -3.0Z" fill="#35b030"/><path d="M69.5 54.5l5.0 -1.8l0.0 2.6Z" fill="#71c76e"/><rect x="83.0" y="59.6" width="1.1" height="8.0" fill="#7a4e22"/><path d="M83.5 56.8l2.2 1.1l2.8 0.2l-1.8 1.6l1.4 3.0l-4.6 -2.5l-4.6 2.5l1.4 -3.0Z" fill="#35b030"/><path d="M78.5 58.7l5.0 -1.8l0.0 2.6Z" fill="#71c76e"/><rect x="93.0" y="55.0" width="1.1" height="9.0" fill="#7a4e22"/><path d="M93.5 52.2l2.2 1.1l2.8 0.2l-1.8 1.6l1.4 3.0l-4.6 -2.5l-4.6 2.5l1.4 -3.0Z" fill="#35b030"/><path d="M88.5 54.1l5.0 -1.8l0.0 2.6Z" fill="#71c76e"/><rect x="102.0" y="51.0" width="1.1" height="9.0" fill="#7a4e22"/><path d="M102.5 48.2l2.2 1.1l2.8 0.2l-1.8 1.6l1.4 3.0l-4.6 -2.5l-4.6 2.5l1.4 -3.0Z" fill="#35b030"/><path d="M97.5 50.1l5.0 -1.8l0.0 2.6Z" fill="#71c76e"/><ellipse cx="121.1" cy="36.0" rx="2.0" ry="1.6" fill="#e0282a"/><ellipse cx="58.5" cy="60.0" rx="1.6" ry="0.9" fill="#e9d9a0"/><ellipse cx="68.5" cy="65.0" rx="1.6" ry="0.9" fill="#e9d9a0"/><ellipse cx="78.5" cy="68.6" rx="1.6" ry="0.9" fill="#e9d9a0"/><ellipse cx="100.5" cy="66.0" rx="1.6" ry="0.9" fill="#e9d9a0"/><ellipse cx="112.5" cy="60.0" rx="1.6" ry="0.9" fill="#e9d9a0"/><ellipse cx="124.5" cy="54.0" rx="1.6" ry="0.9" fill="#e9d9a0"/></g>
<use href="#i-hotel" transform="translate(5 5.5) scale(.5)"/>
<use href="#i-couple" transform="translate(5 50.6) scale(.5)"/>
</svg>
<span class="t r" style="left:3.8px;top:65.5px;font-size:6.86px;letter-spacing:0.99px;color:#1f1d1b;-webkit-text-stroke:.14px #1f1d1b;">ALICE'S PALACE</span>
<div class="tag"></div>
<span class="t" style="left:125.5px;top:68.1px;font-size:5.35px;letter-spacing:0.71px;color:#fff;">-3.5 MIO.</span>
</div>
<div class="card" style="left:810px;top:523px">
<svg width="168" height="78" viewBox="0 0 168 78"><use href="#grid"/>
<g clip-path="url(#cardclip)"><polygon points="24.5,38.0 88.5,6.0 152.5,38.0 88.5,70.0" fill="#f0d8a6"/><polygon points="28.5,38.0 88.5,8.0 148.5,38.0 88.5,68.0" fill="#ecd09a"/><polyline points="88.5,70.0 152.5,38.0" fill="none" stroke="#e0982a" stroke-width="0.8" stroke-dasharray="1.4 1.8"/><polygon points="58.5,55.0 79.5,45.0 87.5,49.0 66.5,59.6" fill="#6cc8ee"/><polygon points="88.5,40.0 102.5,33.0 110.5,37.0 96.5,44.0" fill="#6cc8ee"/><polygon points="58.5,55.0 79.5,45.0 80.9,45.7 59.9,55.7" fill="#b0e4fa"/><polygon points="79.8,22.6 90.3,27.8 90.3,13.8 79.8,8.6" fill="#c69858"/><polygon points="90.3,27.8 100.8,22.6 100.8,8.6 90.3,13.8" fill="#9a6e3c"/><polygon points="79.8,8.6 90.3,13.8 100.8,8.6 90.3,3.3" fill="#6e5c4a"/><ellipse cx="88.3" cy="8.6" rx="1.0" ry="0.6" fill="#f2f2f2"/><ellipse cx="93.3" cy="7.2" rx="1.0" ry="0.6" fill="#f2f2f2"/><polygon points="92.3,25.2 94.3,24.2 94.3,19.2 92.3,20.2" fill="#5a3a20"/><polygon points="95.9,23.2 98.9,21.8 98.9,18.4 95.9,19.8" fill="#3a2a1c"/><polygon points="69.8,30.6 80.1,35.8 80.1,23.2 69.8,18.1" fill="#c69858"/><polygon points="80.1,35.8 90.4,30.6 90.4,18.1 80.1,23.2" fill="#9a6e3c"/><polygon points="69.8,18.1 80.1,23.2 90.4,18.1 80.1,12.9" fill="#6e5c4a"/><ellipse cx="78.1" cy="18.1" rx="1.0" ry="0.6" fill="#f2f2f2"/><ellipse cx="83.1" cy="16.7" rx="1.0" ry="0.6" fill="#f2f2f2"/><polygon points="82.1,33.2 84.1,32.2 84.1,27.2 82.1,28.2" fill="#5a3a20"/><polygon points="85.7,31.2 88.7,29.8 88.7,26.4 85.7,27.8" fill="#3a2a1c"/><polygon points="54.8,36.0 65.1,41.1 65.1,30.5 54.8,25.4" fill="#c69858"/><polygon points="65.1,41.1 75.4,36.0 75.4,25.4 65.1,30.5" fill="#9a6e3c"/><polygon points="54.8,25.4 65.1,30.5 75.4,25.4 65.1,20.2" fill="#6e5c4a"/><ellipse cx="63.1" cy="25.4" rx="1.0" ry="0.6" fill="#f2f2f2"/><ellipse cx="68.1" cy="23.9" rx="1.0" ry="0.6" fill="#f2f2f2"/><polygon points="67.1,38.5 69.1,37.5 69.1,32.5 67.1,33.5" fill="#5a3a20"/><polygon points="70.7,36.5 73.7,35.1 73.7,31.7 70.7,33.1" fill="#3a2a1c"/><polygon points="33.7,41.9 44.5,47.3 44.5,36.9 33.7,31.5" fill="#c69858"/><polygon points="44.5,47.3 55.3,41.9 55.3,31.5 44.5,36.9" fill="#9a6e3c"/><polygon points="33.7,31.5 44.5,36.9 55.3,31.5 44.5,26.1" fill="#6e5c4a"/><ellipse cx="42.5" cy="31.5" rx="1.0" ry="0.6" fill="#f2f2f2"/><ellipse cx="47.5" cy="30.1" rx="1.0" ry="0.6" fill="#f2f2f2"/><polygon points="46.5,44.7 48.5,43.7 48.5,38.7 46.5,39.7" fill="#5a3a20"/><polygon points="50.1,42.7 53.1,41.3 53.1,37.9 50.1,39.3" fill="#3a2a1c"/><rect x="68.0" y="11.0" width="1.1" height="10.0" fill="#7a4e22"/><path d="M68.5 8.2l2.2 1.1l2.8 0.2l-1.8 1.6l1.4 3.0l-4.6 -2.5l-4.6 2.5l1.4 -3.0Z" fill="#2f9a2c"/><path d="M63.5 10.1l5.0 -1.8l0.0 2.6Z" fill="#6db86b"/><rect x="73.4" y="8.4" width="1.1" height="10.0" fill="#7a4e22"/><path d="M73.9 5.6l2.2 1.1l2.8 0.2l-1.8 1.6l1.4 3.0l-4.6 -2.5l-4.6 2.5l1.4 -3.0Z" fill="#2f9a2c"/><path d="M68.9 7.5l5.0 -1.8l0.0 2.6Z" fill="#6db86b"/><rect x="96.6" y="9.0" width="1.1" height="10.0" fill="#7a4e22"/><path d="M97.1 6.2l2.2 1.1l2.8 0.2l-1.8 1.6l1.4 3.0l-4.6 -2.5l-4.6 2.5l1.4 -3.0Z" fill="#2f9a2c"/><path d="M92.1 8.1l5.0 -1.8l0.0 2.6Z" fill="#6db86b"/><rect x="111.0" y="7.0" width="1.1" height="11.0" fill="#7a4e22"/><path d="M111.5 4.2l2.2 1.1l2.8 0.2l-1.8 1.6l1.4 3.0l-4.6 -2.5l-4.6 2.5l1.4 -3.0Z" fill="#2f9a2c"/><path d="M106.5 6.1l5.0 -1.8l0.0 2.6Z" fill="#6db86b"/><rect x="40.4" y="29.4" width="1.1" height="8.0" fill="#7a4e22"/><path d="M40.9 26.6l2.2 1.1l2.8 0.2l-1.8 1.6l1.4 3.0l-4.6 -2.5l-4.6 2.5l1.4 -3.0Z" fill="#2f9a2c"/><path d="M35.9 28.5l5.0 -1.8l0.0 2.6Z" fill="#6db86b"/><ellipse cx="65.5" cy="40.0" rx="3.4" ry="2.9" fill="#3aa838"/><ellipse cx="64.5" cy="39.0" rx="1.7" ry="1.5" fill="#75c273"/><ellipse cx="46.5" cy="46.0" rx="2.4" ry="2.0" fill="#3aa838"/><ellipse cx="45.8" cy="45.3" rx="1.2" ry="1.1" fill="#75c273"/><polygon points="118.5,42.0 128.5,47.0 128.5,35.4 118.5,30.4" fill="#c69858"/><polygon points="128.5,47.0 138.5,42.0 138.5,30.4 128.5,35.4" fill="#9a6e3c"/><polygon points="118.5,30.4 128.5,35.4 138.5,30.4 128.5,25.4" fill="#6e5c4a"/><ellipse cx="126.5" cy="30.4" rx="1.0" ry="0.6" fill="#f2f2f2"/><ellipse cx="131.5" cy="29.0" rx="1.0" ry="0.6" fill="#f2f2f2"/><polygon points="130.5,44.4 132.5,43.4 132.5,38.4 130.5,39.4" fill="#5a3a20"/><polygon points="134.1,42.4 137.1,41.0 137.1,37.6 134.1,39.0" fill="#3a2a1c"/><polygon points="106.2,49.1 116.0,54.0 116.0,44.0 106.2,39.1" fill="#c69858"/><polygon points="116.0,54.0 125.8,49.1 125.8,39.1 116.0,44.0" fill="#9a6e3c"/><polygon points="106.2,39.1 116.0,44.0 125.8,39.1 116.0,34.2" fill="#6e5c4a"/><ellipse cx="114.0" cy="39.1" rx="1.0" ry="0.6" fill="#f2f2f2"/><ellipse cx="119.0" cy="37.7" rx="1.0" ry="0.6" fill="#f2f2f2"/><polygon points="118.0,51.4 120.0,50.4 120.0,45.4 118.0,46.4" fill="#5a3a20"/><polygon points="121.6,49.4 124.6,48.0 124.6,44.6 121.6,46.0" fill="#3a2a1c"/><polygon points="118.5,49.0 124.5,46.0 124.5,48.4 118.5,51.4" fill="#4a90d8"/><rect x="143.0" y="27.0" width="1.1" height="8.0" fill="#7a4e22"/><path d="M143.5 24.2l2.2 1.1l2.8 0.2l-1.8 1.6l1.4 3.0l-4.6 -2.5l-4.6 2.5l1.4 -3.0Z" fill="#2f9a2c"/><path d="M138.5 26.1l5.0 -1.8l0.0 2.6Z" fill="#6db86b"/><rect x="112.0" y="39.0" width="1.1" height="8.0" fill="#7a4e22"/><path d="M112.5 36.2l2.2 1.1l2.8 0.2l-1.8 1.6l1.4 3.0l-4.6 -2.5l-4.6 2.5l1.4 -3.0Z" fill="#2f9a2c"/><path d="M107.5 38.1l5.0 -1.8l0.0 2.6Z" fill="#6db86b"/><rect x="79.0" y="46.0" width="1.1" height="9.0" fill="#7a4e22"/><path d="M79.5 43.2l2.2 1.1l2.8 0.2l-1.8 1.6l1.4 3.0l-4.6 -2.5l-4.6 2.5l1.4 -3.0Z" fill="#2f9a2c"/><path d="M74.5 45.1l5.0 -1.8l0.0 2.6Z" fill="#6db86b"/><rect x="84.0" y="48.4" width="1.1" height="9.6" fill="#7a4e22"/><path d="M84.5 45.6l2.2 1.1l2.8 0.2l-1.8 1.6l1.4 3.0l-4.6 -2.5l-4.6 2.5l1.4 -3.0Z" fill="#2f9a2c"/><path d="M79.5 47.5l5.0 -1.8l0.0 2.6Z" fill="#6db86b"/><rect x="75.0" y="53.6" width="1.1" height="7.0" fill="#7a4e22"/><path d="M75.5 50.8l2.2 1.1l2.8 0.2l-1.8 1.6l1.4 3.0l-4.6 -2.5l-4.6 2.5l1.4 -3.0Z" fill="#2f9a2c"/><path d="M70.5 52.7l5.0 -1.8l0.0 2.6Z" fill="#6db86b"/><ellipse cx="77.5" cy="61.6" rx="2.6" ry="2.2" fill="#3aa838"/><ellipse cx="76.7" cy="60.8" rx="1.3" ry="1.2" fill="#75c273"/><ellipse cx="110.5" cy="21.0" rx="2.0" ry="1.0" fill="#38a8a0"/><ellipse cx="117.5" cy="24.0" rx="2.0" ry="1.0" fill="#38a8a0"/><ellipse cx="121.5" cy="26.6" rx="2.0" ry="1.0" fill="#38a8a0"/><ellipse cx="91.5" cy="32.6" rx="2.0" ry="1.0" fill="#38a8a0"/><ellipse cx="87.5" cy="36.0" rx="2.0" ry="1.0" fill="#38a8a0"/></g>
<use href="#i-hotel" transform="translate(5 5.5) scale(.5)"/>
<use href="#i-couple" transform="translate(5 50.6) scale(.5)"/>
</svg>
<span class="t r" style="left:3.8px;top:65.5px;font-size:6.86px;letter-spacing:0.75px;color:#1f1d1b;-webkit-text-stroke:.14px #1f1d1b;">RELEXO HOTEL</span>
<div class="tag"></div>
<span class="t" style="left:125.5px;top:68.1px;font-size:5.35px;letter-spacing:0.71px;color:#fff;">-6.7 MIO.</span>
</div>
<div class="card" style="left:1005px;top:523px">
<svg width="168" height="78" viewBox="0 0 168 78"><use href="#grid"/>
<g clip-path="url(#cardclip)"><polygon points="30.0,50.0 84.0,23.0 150.0,56.0 96.0,83.0" fill="#2a6ca8"/><polygon points="44.0,46.0 84.0,26.0 130.0,49.0 90.0,69.0" fill="#38a4bc"/><polygon points="64.0,36.0 84.0,26.0 112.0,40.0 92.0,50.0" fill="#7fd2de"/><polygon points="76.0,28.0 86.0,23.0 142.0,51.0 132.0,56.0" fill="#f1daa8"/><polygon points="44.5,47.5 104.0,36.6 112.0,40.6 62.0,56.0" fill="#6f6f6f"/><polygon points="92.0,44.0 104.0,36.6 112.0,40.6 100.0,47.6" fill="#6f6f6f"/><polygon points="100.0,32.0 112.0,26.0 120.0,30.0 108.0,36.0" fill="#6f6f6f"/><polygon points="100.0,34.0 118.0,25.0 142.0,37.0 124.0,46.0" fill="#717170"/><polyline points="112.0,32.0 118.0,29.0" fill="none" stroke="#e8e8e8" stroke-width="0.5"/><polyline points="115.0,33.5 121.0,30.5" fill="none" stroke="#e8e8e8" stroke-width="0.5"/><polyline points="118.0,35.0 124.0,32.0" fill="none" stroke="#e8e8e8" stroke-width="0.5"/><polyline points="121.0,36.5 127.0,33.5" fill="none" stroke="#e8e8e8" stroke-width="0.5"/><polyline points="124.0,38.0 130.0,35.0" fill="none" stroke="#e8e8e8" stroke-width="0.5"/><ellipse cx="112.0" cy="41.6" rx="1.4" ry="1.2" fill="#c8c030"/><ellipse cx="111.6" cy="41.2" rx="0.7" ry="0.6" fill="#d8d26e"/><ellipse cx="124.0" cy="44.6" rx="1.4" ry="1.2" fill="#c8c030"/><ellipse cx="123.6" cy="44.2" rx="0.7" ry="0.6" fill="#d8d26e"/><ellipse cx="140.0" cy="36.0" rx="1.4" ry="1.2" fill="#c8c030"/><ellipse cx="139.6" cy="35.6" rx="0.7" ry="0.6" fill="#d8d26e"/><ellipse cx="121.0" cy="25.0" rx="1.4" ry="1.2" fill="#c8c030"/><ellipse cx="120.6" cy="24.6" rx="0.7" ry="0.6" fill="#d8d26e"/><polygon points="80.0,22.0 92.0,16.0 100.0,20.0 88.0,26.0" fill="#717170"/><polygon points="90.0,21.0 108.0,30.0 108.0,22.0 90.0,13.0" fill="#8a6a3a"/><polygon points="98.0,25.0 108.0,30.0 108.0,23.0 98.0,18.0" fill="#4f9fdc"/><polygon points="108.0,30.0 120.0,24.0 120.0,16.0 108.0,22.0" fill="#4f9fdc"/><polygon points="90.0,13.0 102.0,7.0 120.0,16.0 108.0,22.0" fill="#5a4a3c"/><polyline points="90.0,13.0 102.0,7.0 120.0,16.0 108.0,22.0 90.0,13.0" fill="none" stroke="#f0f0f0" stroke-width="0.6"/><rect x="86.6" y="5.0" width="2.6" height="16.0" fill="#e9eef4"/><rect x="85.6" y="2.0" width="4.6" height="4.0" fill="#5a9ad8"/><rect x="85.6" y="1.4" width="4.6" height="1.0" fill="#c8a060"/><polygon points="62.0,41.0 64.0,40.0 78.0,45.0 76.6,46.0" fill="#f4f4f4"/><polygon points="90.0,45.0 92.0,44.0 100.0,50.0 98.6,51.0" fill="#f4f4f4"/><ellipse cx="52.0" cy="44.0" rx="1.0" ry="0.7" fill="#e8d030"/><ellipse cx="62.0" cy="49.0" rx="1.0" ry="0.7" fill="#e8d030"/></g>
<use href="#rot" x="136" y="48.6"/>
<use href="#i-light" transform="translate(5 5.5) scale(.5)"/>
</svg>
<span class="t r" style="left:3.8px;top:65.5px;font-size:6.86px;letter-spacing:1.12px;color:#1f1d1b;-webkit-text-stroke:.14px #1f1d1b;">SHIPPING XXL</span>
<div class="tag"></div>
<span class="t" style="left:125.5px;top:68.1px;font-size:5.35px;letter-spacing:0.71px;color:#fff;">-1.8 MIO.</span>
</div>
<div class="card" style="left:1200px;top:523px">
<svg width="168" height="78" viewBox="0 0 168 78"><use href="#grid"/>
<g clip-path="url(#cardclip)"><polygon points="57.0,38.6 89.0,54.6 121.0,38.6 121.0,40.2 89.0,56.2 57.0,40.2" fill="#2e2e2e"/><polygon points="57.0,38.6 89.0,22.6 121.0,38.6 89.0,54.6" fill="#4c4c4a"/><polygon points="60.0,38.6 89.0,24.1 118.0,38.6 89.0,53.1" fill="#58585a"/><polygon points="61.0,37.6 67.0,28.6 79.0,21.6 91.0,21.0 97.0,27.6 95.0,36.6 79.0,44.6" fill="#5d6a4c"/><polygon points="67.0,28.6 79.0,21.6 91.0,21.0 87.0,28.6 75.0,34.6" fill="#76806a"/><rect x="70.6" y="33.5" width="1.0" height="1.0" fill="#c83a3a"/><rect x="74.8" y="34.7" width="1.0" height="1.0" fill="#3aa83a"/><rect x="83.0" y="23.9" width="1.0" height="1.0" fill="#d8d8d8"/><rect x="71.3" y="27.3" width="1.0" height="1.0" fill="#c8a83a"/><rect x="94.9" y="32.0" width="1.0" height="1.0" fill="#3a6ac8"/><rect x="89.8" y="32.1" width="1.0" height="1.0" fill="#a83a8a"/><rect x="83.5" y="25.6" width="1.0" height="1.0" fill="#9ab870"/><rect x="83.3" y="40.0" width="1.0" height="1.0" fill="#c83a3a"/><rect x="79.7" y="37.4" width="1.0" height="1.0" fill="#3aa83a"/><rect x="84.5" y="23.9" width="1.0" height="1.0" fill="#d8d8d8"/><rect x="87.3" y="34.4" width="1.0" height="1.0" fill="#8a8a9a"/><rect x="90.7" y="32.1" width="1.0" height="1.0" fill="#3a6ac8"/><rect x="86.0" y="40.2" width="1.0" height="1.0" fill="#a83a8a"/><rect x="85.9" y="41.0" width="1.0" height="1.0" fill="#9ab870"/><rect x="75.6" y="38.6" width="1.0" height="1.0" fill="#c83a3a"/><rect x="77.2" y="41.3" width="1.0" height="1.0" fill="#3aa83a"/><rect x="93.9" y="31.3" width="1.0" height="1.0" fill="#c8a83a"/><rect x="83.1" y="28.6" width="1.0" height="1.0" fill="#3a6ac8"/><rect x="79.2" y="30.3" width="1.0" height="1.0" fill="#a83a8a"/><rect x="74.2" y="34.3" width="1.0" height="1.0" fill="#9ab870"/><rect x="81.7" y="40.7" width="1.0" height="1.0" fill="#c83a3a"/><rect x="84.8" y="41.2" width="1.0" height="1.0" fill="#3aa83a"/><rect x="84.5" y="25.9" width="1.0" height="1.0" fill="#8a8a9a"/><rect x="92.0" y="34.0" width="1.0" height="1.0" fill="#3a6ac8"/><rect x="85.8" y="26.8" width="1.0" height="1.0" fill="#a83a8a"/><rect x="89.6" y="34.1" width="1.0" height="1.0" fill="#9ab870"/><rect x="65.8" y="38.6" width="1.0" height="1.0" fill="#d8d8d8"/><rect x="76.1" y="25.6" width="1.0" height="1.0" fill="#8a8a9a"/><rect x="72.4" y="38.0" width="1.0" height="1.0" fill="#c8a83a"/><rect x="82.7" y="23.5" width="1.0" height="1.0" fill="#a83a8a"/><rect x="86.0" y="29.2" width="1.0" height="1.0" fill="#9ab870"/><rect x="79.2" y="42.6" width="1.0" height="1.0" fill="#3aa83a"/><rect x="82.2" y="23.2" width="1.0" height="1.0" fill="#8a8a9a"/><rect x="69.3" y="30.8" width="1.0" height="1.0" fill="#c8a83a"/><rect x="82.5" y="25.7" width="1.0" height="1.0" fill="#3a6ac8"/><rect x="73.0" y="41.8" width="1.0" height="1.0" fill="#9ab870"/><rect x="91.7" y="30.2" width="1.0" height="1.0" fill="#c83a3a"/><rect x="77.7" y="33.0" width="1.0" height="1.0" fill="#3aa83a"/><rect x="83.6" y="34.5" width="1.0" height="1.0" fill="#d8d8d8"/><rect x="80.9" y="35.0" width="1.0" height="1.0" fill="#8a8a9a"/><rect x="93.1" y="32.7" width="1.0" height="1.0" fill="#c8a83a"/><rect x="76.8" y="37.0" width="1.0" height="1.0" fill="#3a6ac8"/><rect x="70.6" y="28.6" width="1.0" height="1.0" fill="#a83a8a"/><rect x="94.3" y="33.0" width="1.0" height="1.0" fill="#9ab870"/><rect x="80.5" y="22.8" width="1.0" height="1.0" fill="#c83a3a"/><rect x="76.3" y="34.2" width="1.0" height="1.0" fill="#3aa83a"/><rect x="63.6" y="34.9" width="1.0" height="1.0" fill="#d8d8d8"/><rect x="83.2" y="23.8" width="1.0" height="1.0" fill="#8a8a9a"/><rect x="83.1" y="31.9" width="1.0" height="1.0" fill="#c8a83a"/><rect x="84.7" y="29.7" width="1.0" height="1.0" fill="#3a6ac8"/><rect x="85.6" y="37.4" width="1.0" height="1.0" fill="#a83a8a"/><rect x="84.6" y="41.9" width="1.0" height="1.0" fill="#c83a3a"/><rect x="71.0" y="31.7" width="1.0" height="1.0" fill="#3aa83a"/><rect x="82.0" y="29.0" width="1.0" height="1.0" fill="#d8d8d8"/><rect x="74.6" y="28.9" width="1.0" height="1.0" fill="#8a8a9a"/><rect x="74.8" y="34.5" width="1.0" height="1.0" fill="#c8a83a"/><rect x="72.6" y="30.1" width="1.0" height="1.0" fill="#3a6ac8"/><polygon points="89.0,30.6 101.0,36.6 101.0,43.6 89.0,37.6" fill="#a2a2a6"/><polygon points="101.0,36.6 119.0,27.6 119.0,34.6 101.0,43.6" fill="#78787c"/><polygon points="101.0,36.6 107.0,33.6 107.0,30.2 101.0,35.6" fill="#8c8c92"/><polygon points="89.0,30.6 101.0,36.6 101.0,35.6 107.0,30.2 95.0,24.2" fill="#b4b4ba"/><polygon points="107.0,33.6 113.0,30.6 113.0,27.2 107.0,32.6" fill="#8c8c92"/><polygon points="95.0,27.6 107.0,33.6 107.0,32.6 113.0,27.2 101.0,21.2" fill="#a6a6ac"/><polygon points="113.0,30.6 119.0,27.6 119.0,24.2 113.0,29.6" fill="#8c8c92"/><polygon points="101.0,24.6 113.0,30.6 113.0,29.6 119.0,24.2 107.0,18.2" fill="#b4b4ba"/><polygon points="89.0,30.6 95.0,27.6 95.0,24.0 89.0,27.0" fill="#e8e8ec"/><rect x="97.0" y="12.6" width="2.2" height="12.0" fill="#3a3a3c"/><rect x="99.4" y="13.6" width="2.2" height="11.0" fill="#4e4e52"/><ellipse cx="113.0" cy="33.6" rx="1.6" ry="1.6" fill="#2a7a4a"/><rect x="79.0" y="46.6" width="5.0" height="2.4" fill="#3a78c8"/><rect x="83.0" y="49.2" width="5.0" height="2.0" fill="#c8382a"/><rect x="103.0" y="45.2" width="1.4" height="1.0" fill="#e87a2a"/></g>
<use href="#i-med2" transform="translate(5 5.5) scale(.5)"/>
</svg>
<span class="t r" style="left:3.8px;top:65.5px;font-size:6.86px;letter-spacing:1.04px;color:#1f1d1b;-webkit-text-stroke:.14px #1f1d1b;">RECYCLING</span>
<div class="tag"></div>
<span class="t" style="left:125.0px;top:68.1px;font-size:5.35px;letter-spacing:1.06px;color:#fff;">-150.000</span>
</div>
<div class="card" style="left:1395px;top:523px">
<svg width="168" height="78" viewBox="0 0 168 78"><use href="#grid"/>
<g clip-path="url(#cardclip)"><polygon points="41.8,47.9 88.7,24.4 136.6,47.9 88.7,71.4" fill="#ded6cc"/><polygon points="62.0,57.0 88.7,44.0 115.0,57.0 88.7,70.0" fill="#e9e2da"/><polygon points="61.3,36.0 80.8,45.6 80.8,13.6 61.3,4.0" fill="#ebb649"/><rect x="62.3" y="32.7" width="1.1" height="2.2" fill="#5fa8e2"/><rect x="65.1" y="34.1" width="1.1" height="2.2" fill="#5fa8e2"/><rect x="67.8" y="35.4" width="1.1" height="2.2" fill="#5fa8e2"/><rect x="70.6" y="36.8" width="1.1" height="2.2" fill="#5fa8e2"/><rect x="73.4" y="38.2" width="1.1" height="2.2" fill="#5fa8e2"/><rect x="76.2" y="39.5" width="1.1" height="2.2" fill="#5fa8e2"/><rect x="79.0" y="40.9" width="1.1" height="2.2" fill="#5fa8e2"/><rect x="62.3" y="28.5" width="1.1" height="2.2" fill="#5fa8e2"/><rect x="65.1" y="29.9" width="1.1" height="2.2" fill="#5fa8e2"/><rect x="67.8" y="31.2" width="1.1" height="2.2" fill="#5fa8e2"/><rect x="70.6" y="32.6" width="1.1" height="2.2" fill="#5fa8e2"/><rect x="73.4" y="34.0" width="1.1" height="2.2" fill="#5fa8e2"/><rect x="76.2" y="35.3" width="1.1" height="2.2" fill="#5fa8e2"/><rect x="79.0" y="36.7" width="1.1" height="2.2" fill="#5fa8e2"/><rect x="62.3" y="24.3" width="1.1" height="2.2" fill="#5fa8e2"/><rect x="65.1" y="25.7" width="1.1" height="2.2" fill="#5fa8e2"/><rect x="67.8" y="27.0" width="1.1" height="2.2" fill="#5fa8e2"/><rect x="70.6" y="28.4" width="1.1" height="2.2" fill="#5fa8e2"/><rect x="73.4" y="29.8" width="1.1" height="2.2" fill="#5fa8e2"/><rect x="76.2" y="31.1" width="1.1" height="2.2" fill="#5fa8e2"/><rect x="79.0" y="32.5" width="1.1" height="2.2" fill="#5fa8e2"/><rect x="62.3" y="20.1" width="1.1" height="2.2" fill="#5fa8e2"/><rect x="65.1" y="21.5" width="1.1" height="2.2" fill="#5fa8e2"/><rect x="67.8" y="22.8" width="1.1" height="2.2" fill="#5fa8e2"/><rect x="70.6" y="24.2" width="1.1" height="2.2" fill="#5fa8e2"/><rect x="73.4" y="25.6" width="1.1" height="2.2" fill="#5fa8e2"/><rect x="76.2" y="26.9" width="1.1" height="2.2" fill="#5fa8e2"/><rect x="79.0" y="28.3" width="1.1" height="2.2" fill="#5fa8e2"/><rect x="62.3" y="15.9" width="1.1" height="2.2" fill="#5fa8e2"/><rect x="65.1" y="17.3" width="1.1" height="2.2" fill="#5fa8e2"/><rect x="67.8" y="18.6" width="1.1" height="2.2" fill="#5fa8e2"/><rect x="70.6" y="20.0" width="1.1" height="2.2" fill="#5fa8e2"/><rect x="73.4" y="21.4" width="1.1" height="2.2" fill="#5fa8e2"/><rect x="76.2" y="22.7" width="1.1" height="2.2" fill="#5fa8e2"/><rect x="79.0" y="24.1" width="1.1" height="2.2" fill="#5fa8e2"/><rect x="62.3" y="11.7" width="1.1" height="2.2" fill="#5fa8e2"/><rect x="65.1" y="13.1" width="1.1" height="2.2" fill="#5fa8e2"/><rect x="67.8" y="14.4" width="1.1" height="2.2" fill="#5fa8e2"/><rect x="70.6" y="15.8" width="1.1" height="2.2" fill="#5fa8e2"/><rect x="73.4" y="17.2" width="1.1" height="2.2" fill="#5fa8e2"/><rect x="76.2" y="18.5" width="1.1" height="2.2" fill="#5fa8e2"/><rect x="79.0" y="19.9" width="1.1" height="2.2" fill="#5fa8e2"/><rect x="62.3" y="7.5" width="1.1" height="2.2" fill="#5fa8e2"/><rect x="65.1" y="8.9" width="1.1" height="2.2" fill="#5fa8e2"/><rect x="67.8" y="10.2" width="1.1" height="2.2" fill="#5fa8e2"/><rect x="70.6" y="11.6" width="1.1" height="2.2" fill="#5fa8e2"/><rect x="73.4" y="13.0" width="1.1" height="2.2" fill="#5fa8e2"/><rect x="76.2" y="14.3" width="1.1" height="2.2" fill="#5fa8e2"/><rect x="79.0" y="15.7" width="1.1" height="2.2" fill="#5fa8e2"/><polygon points="96.6,45.6 117.0,36.0 117.0,4.0 96.6,13.6" fill="#c9922f"/><rect x="97.6" y="41.3" width="1.1" height="2.2" fill="#5fa8e2"/><rect x="100.5" y="39.9" width="1.1" height="2.2" fill="#5fa8e2"/><rect x="103.4" y="38.6" width="1.1" height="2.2" fill="#5fa8e2"/><rect x="106.4" y="37.2" width="1.1" height="2.2" fill="#5fa8e2"/><rect x="109.3" y="35.8" width="1.1" height="2.2" fill="#5fa8e2"/><rect x="112.2" y="34.5" width="1.1" height="2.2" fill="#5fa8e2"/><rect x="115.1" y="33.1" width="1.1" height="2.2" fill="#5fa8e2"/><rect x="97.6" y="37.1" width="1.1" height="2.2" fill="#5fa8e2"/><rect x="100.5" y="35.7" width="1.1" height="2.2" fill="#5fa8e2"/><rect x="103.4" y="34.4" width="1.1" height="2.2" fill="#5fa8e2"/><rect x="106.4" y="33.0" width="1.1" height="2.2" fill="#5fa8e2"/><rect x="109.3" y="31.6" width="1.1" height="2.2" fill="#5fa8e2"/><rect x="112.2" y="30.3" width="1.1" height="2.2" fill="#5fa8e2"/><rect x="115.1" y="28.9" width="1.1" height="2.2" fill="#5fa8e2"/><rect x="97.6" y="32.9" width="1.1" height="2.2" fill="#5fa8e2"/><rect x="100.5" y="31.5" width="1.1" height="2.2" fill="#5fa8e2"/><rect x="103.4" y="30.2" width="1.1" height="2.2" fill="#5fa8e2"/><rect x="106.4" y="28.8" width="1.1" height="2.2" fill="#5fa8e2"/><rect x="109.3" y="27.4" width="1.1" height="2.2" fill="#5fa8e2"/><rect x="112.2" y="26.1" width="1.1" height="2.2" fill="#5fa8e2"/><rect x="115.1" y="24.7" width="1.1" height="2.2" fill="#5fa8e2"/><rect x="97.6" y="28.7" width="1.1" height="2.2" fill="#5fa8e2"/><rect x="100.5" y="27.3" width="1.1" height="2.2" fill="#5fa8e2"/><rect x="103.4" y="26.0" width="1.1" height="2.2" fill="#5fa8e2"/><rect x="106.4" y="24.6" width="1.1" height="2.2" fill="#5fa8e2"/><rect x="109.3" y="23.2" width="1.1" height="2.2" fill="#5fa8e2"/><rect x="112.2" y="21.9" width="1.1" height="2.2" fill="#5fa8e2"/><rect x="115.1" y="20.5" width="1.1" height="2.2" fill="#5fa8e2"/><rect x="97.6" y="24.5" width="1.1" height="2.2" fill="#5fa8e2"/><rect x="100.5" y="23.1" width="1.1" height="2.2" fill="#5fa8e2"/><rect x="103.4" y="21.8" width="1.1" height="2.2" fill="#5fa8e2"/><rect x="106.4" y="20.4" width="1.1" height="2.2" fill="#5fa8e2"/><rect x="109.3" y="19.0" width="1.1" height="2.2" fill="#5fa8e2"/><rect x="112.2" y="17.7" width="1.1" height="2.2" fill="#5fa8e2"/><rect x="115.1" y="16.3" width="1.1" height="2.2" fill="#5fa8e2"/><rect x="97.6" y="20.3" width="1.1" height="2.2" fill="#5fa8e2"/><rect x="100.5" y="18.9" width="1.1" height="2.2" fill="#5fa8e2"/><rect x="103.4" y="17.6" width="1.1" height="2.2" fill="#5fa8e2"/><rect x="106.4" y="16.2" width="1.1" height="2.2" fill="#5fa8e2"/><rect x="109.3" y="14.8" width="1.1" height="2.2" fill="#5fa8e2"/><rect x="112.2" y="13.5" width="1.1" height="2.2" fill="#5fa8e2"/><rect x="115.1" y="12.1" width="1.1" height="2.2" fill="#5fa8e2"/><rect x="97.6" y="16.1" width="1.1" height="2.2" fill="#5fa8e2"/><rect x="100.5" y="14.7" width="1.1" height="2.2" fill="#5fa8e2"/><rect x="103.4" y="13.4" width="1.1" height="2.2" fill="#5fa8e2"/><rect x="106.4" y="12.0" width="1.1" height="2.2" fill="#5fa8e2"/><rect x="109.3" y="10.6" width="1.1" height="2.2" fill="#5fa8e2"/><rect x="112.2" y="9.3" width="1.1" height="2.2" fill="#5fa8e2"/><rect x="115.1" y="7.9" width="1.1" height="2.2" fill="#5fa8e2"/><polygon points="61.3,4.0 88.7,-9.6 117.0,4.0 88.7,17.6" fill="#d6b280"/><polygon points="70.0,2.0 80.0,-3.0 84.0,-1.0 74.0,4.0" fill="#f6f6f6"/><polygon points="94.0,-1.0 104.0,-6.0 108.0,-4.0 98.0,1.0" fill="#f6f6f6"/><polygon points="80.8,13.6 96.6,13.6 96.6,45.6 80.8,45.6" fill="#e0a63c"/><polygon points="80.8,45.6 88.7,49.6 96.6,45.6" fill="#e0a63c"/><rect x="85.6" y="1.5" width="6.4" height="12.4" fill="#d8e8f4"/><rect x="86.0" y="27.0" width="5.6" height="18.0" fill="#5fa8e2"/><rect x="87.6" y="27.0" width="0.8" height="18.0" fill="#d8ecfa"/><polygon points="78.6,24.6 98.8,24.6 96.6,22.4 80.8,22.4" fill="#f2cb6a"/><polygon points="44.5,47.9 63.1,56.8 63.1,39.1 44.5,30.2" fill="#ebb649"/><rect x="45.4" y="44.5" width="1.1" height="2.2" fill="#5fa8e2"/><rect x="48.1" y="45.8" width="1.1" height="2.2" fill="#5fa8e2"/><rect x="50.7" y="47.1" width="1.1" height="2.2" fill="#5fa8e2"/><rect x="53.4" y="48.4" width="1.1" height="2.2" fill="#5fa8e2"/><rect x="56.1" y="49.6" width="1.1" height="2.2" fill="#5fa8e2"/><rect x="58.7" y="50.9" width="1.1" height="2.2" fill="#5fa8e2"/><rect x="61.4" y="52.2" width="1.1" height="2.2" fill="#5fa8e2"/><rect x="45.4" y="40.3" width="1.1" height="2.2" fill="#5fa8e2"/><rect x="48.1" y="41.6" width="1.1" height="2.2" fill="#5fa8e2"/><rect x="50.7" y="42.9" width="1.1" height="2.2" fill="#5fa8e2"/><rect x="53.4" y="44.2" width="1.1" height="2.2" fill="#5fa8e2"/><rect x="56.1" y="45.4" width="1.1" height="2.2" fill="#5fa8e2"/><rect x="58.7" y="46.7" width="1.1" height="2.2" fill="#5fa8e2"/><rect x="61.4" y="48.0" width="1.1" height="2.2" fill="#5fa8e2"/><rect x="45.4" y="36.1" width="1.1" height="2.2" fill="#5fa8e2"/><rect x="48.1" y="37.4" width="1.1" height="2.2" fill="#5fa8e2"/><rect x="50.7" y="38.7" width="1.1" height="2.2" fill="#5fa8e2"/><rect x="53.4" y="40.0" width="1.1" height="2.2" fill="#5fa8e2"/><rect x="56.1" y="41.2" width="1.1" height="2.2" fill="#5fa8e2"/><rect x="58.7" y="42.5" width="1.1" height="2.2" fill="#5fa8e2"/><rect x="61.4" y="43.8" width="1.1" height="2.2" fill="#5fa8e2"/><rect x="45.4" y="31.9" width="1.1" height="2.2" fill="#5fa8e2"/><rect x="48.1" y="33.2" width="1.1" height="2.2" fill="#5fa8e2"/><rect x="50.7" y="34.5" width="1.1" height="2.2" fill="#5fa8e2"/><rect x="53.4" y="35.8" width="1.1" height="2.2" fill="#5fa8e2"/><rect x="56.1" y="37.0" width="1.1" height="2.2" fill="#5fa8e2"/><rect x="58.7" y="38.3" width="1.1" height="2.2" fill="#5fa8e2"/><rect x="61.4" y="39.6" width="1.1" height="2.2" fill="#5fa8e2"/><polygon points="63.1,56.8 79.9,48.4 79.9,30.7 63.1,39.1" fill="#c9922f"/><rect x="64.1" y="52.5" width="1.1" height="2.2" fill="#5fa8e2"/><rect x="66.9" y="51.1" width="1.1" height="2.2" fill="#5fa8e2"/><rect x="69.7" y="49.7" width="1.1" height="2.2" fill="#5fa8e2"/><rect x="72.5" y="48.3" width="1.1" height="2.2" fill="#5fa8e2"/><rect x="75.3" y="46.9" width="1.1" height="2.2" fill="#5fa8e2"/><rect x="78.1" y="45.5" width="1.1" height="2.2" fill="#5fa8e2"/><rect x="64.1" y="48.3" width="1.1" height="2.2" fill="#5fa8e2"/><rect x="66.9" y="46.9" width="1.1" height="2.2" fill="#5fa8e2"/><rect x="69.7" y="45.5" width="1.1" height="2.2" fill="#5fa8e2"/><rect x="72.5" y="44.1" width="1.1" height="2.2" fill="#5fa8e2"/><rect x="75.3" y="42.7" width="1.1" height="2.2" fill="#5fa8e2"/><rect x="78.1" y="41.3" width="1.1" height="2.2" fill="#5fa8e2"/><rect x="64.1" y="44.1" width="1.1" height="2.2" fill="#5fa8e2"/><rect x="66.9" y="42.7" width="1.1" height="2.2" fill="#5fa8e2"/><rect x="69.7" y="41.3" width="1.1" height="2.2" fill="#5fa8e2"/><rect x="72.5" y="39.9" width="1.1" height="2.2" fill="#5fa8e2"/><rect x="75.3" y="38.5" width="1.1" height="2.2" fill="#5fa8e2"/><rect x="78.1" y="37.1" width="1.1" height="2.2" fill="#5fa8e2"/><rect x="64.1" y="39.9" width="1.1" height="2.2" fill="#5fa8e2"/><rect x="66.9" y="38.5" width="1.1" height="2.2" fill="#5fa8e2"/><rect x="69.7" y="37.1" width="1.1" height="2.2" fill="#5fa8e2"/><rect x="72.5" y="35.7" width="1.1" height="2.2" fill="#5fa8e2"/><rect x="75.3" y="34.3" width="1.1" height="2.2" fill="#5fa8e2"/><rect x="78.1" y="32.9" width="1.1" height="2.2" fill="#5fa8e2"/><polygon points="44.5,30.2 61.3,22.2 79.9,31.1 63.1,39.1" fill="#d6b280"/><polygon points="49.6,29.4 59.0,25.0 64.6,27.6 55.0,32.0" fill="#5fb8ea"/><polyline points="44.5,30.2 63.1,39.1 79.9,31.1" fill="none" stroke="#f6dc9a" stroke-width="1.0"/><polygon points="97.6,48.4 114.4,56.8 114.4,39.1 97.6,30.7" fill="#ebb649"/><rect x="98.6" y="45.1" width="1.1" height="2.2" fill="#5fa8e2"/><rect x="101.4" y="46.5" width="1.1" height="2.2" fill="#5fa8e2"/><rect x="104.2" y="47.9" width="1.1" height="2.2" fill="#5fa8e2"/><rect x="107.0" y="49.3" width="1.1" height="2.2" fill="#5fa8e2"/><rect x="109.8" y="50.7" width="1.1" height="2.2" fill="#5fa8e2"/><rect x="112.6" y="52.1" width="1.1" height="2.2" fill="#5fa8e2"/><rect x="98.6" y="40.9" width="1.1" height="2.2" fill="#5fa8e2"/><rect x="101.4" y="42.3" width="1.1" height="2.2" fill="#5fa8e2"/><rect x="104.2" y="43.7" width="1.1" height="2.2" fill="#5fa8e2"/><rect x="107.0" y="45.1" width="1.1" height="2.2" fill="#5fa8e2"/><rect x="109.8" y="46.5" width="1.1" height="2.2" fill="#5fa8e2"/><rect x="112.6" y="47.9" width="1.1" height="2.2" fill="#5fa8e2"/><rect x="98.6" y="36.7" width="1.1" height="2.2" fill="#5fa8e2"/><rect x="101.4" y="38.1" width="1.1" height="2.2" fill="#5fa8e2"/><rect x="104.2" y="39.5" width="1.1" height="2.2" fill="#5fa8e2"/><rect x="107.0" y="40.9" width="1.1" height="2.2" fill="#5fa8e2"/><rect x="109.8" y="42.3" width="1.1" height="2.2" fill="#5fa8e2"/><rect x="112.6" y="43.7" width="1.1" height="2.2" fill="#5fa8e2"/><rect x="98.6" y="32.5" width="1.1" height="2.2" fill="#5fa8e2"/><rect x="101.4" y="33.9" width="1.1" height="2.2" fill="#5fa8e2"/><rect x="104.2" y="35.3" width="1.1" height="2.2" fill="#5fa8e2"/><rect x="107.0" y="36.7" width="1.1" height="2.2" fill="#5fa8e2"/><rect x="109.8" y="38.1" width="1.1" height="2.2" fill="#5fa8e2"/><rect x="112.6" y="39.5" width="1.1" height="2.2" fill="#5fa8e2"/><polygon points="114.4,56.8 133.0,47.9 133.0,30.2 114.4,39.1" fill="#c9922f"/><rect x="115.3" y="52.6" width="1.1" height="2.2" fill="#5fa8e2"/><rect x="118.0" y="51.3" width="1.1" height="2.2" fill="#5fa8e2"/><rect x="120.6" y="50.0" width="1.1" height="2.2" fill="#5fa8e2"/><rect x="123.3" y="48.7" width="1.1" height="2.2" fill="#5fa8e2"/><rect x="126.0" y="47.5" width="1.1" height="2.2" fill="#5fa8e2"/><rect x="128.6" y="46.2" width="1.1" height="2.2" fill="#5fa8e2"/><rect x="131.3" y="44.9" width="1.1" height="2.2" fill="#5fa8e2"/><rect x="115.3" y="48.4" width="1.1" height="2.2" fill="#5fa8e2"/><rect x="118.0" y="47.1" width="1.1" height="2.2" fill="#5fa8e2"/><rect x="120.6" y="45.8" width="1.1" height="2.2" fill="#5fa8e2"/><rect x="123.3" y="44.5" width="1.1" height="2.2" fill="#5fa8e2"/><rect x="126.0" y="43.3" width="1.1" height="2.2" fill="#5fa8e2"/><rect x="128.6" y="42.0" width="1.1" height="2.2" fill="#5fa8e2"/><rect x="131.3" y="40.7" width="1.1" height="2.2" fill="#5fa8e2"/><rect x="115.3" y="44.2" width="1.1" height="2.2" fill="#5fa8e2"/><rect x="118.0" y="42.9" width="1.1" height="2.2" fill="#5fa8e2"/><rect x="120.6" y="41.6" width="1.1" height="2.2" fill="#5fa8e2"/><rect x="123.3" y="40.3" width="1.1" height="2.2" fill="#5fa8e2"/><rect x="126.0" y="39.1" width="1.1" height="2.2" fill="#5fa8e2"/><rect x="128.6" y="37.8" width="1.1" height="2.2" fill="#5fa8e2"/><rect x="131.3" y="36.5" width="1.1" height="2.2" fill="#5fa8e2"/><rect x="115.3" y="40.0" width="1.1" height="2.2" fill="#5fa8e2"/><rect x="118.0" y="38.7" width="1.1" height="2.2" fill="#5fa8e2"/><rect x="120.6" y="37.4" width="1.1" height="2.2" fill="#5fa8e2"/><rect x="123.3" y="36.1" width="1.1" height="2.2" fill="#5fa8e2"/><rect x="126.0" y="34.9" width="1.1" height="2.2" fill="#5fa8e2"/><rect x="128.6" y="33.6" width="1.1" height="2.2" fill="#5fa8e2"/><rect x="131.3" y="32.3" width="1.1" height="2.2" fill="#5fa8e2"/><polygon points="97.6,31.1 116.2,22.2 133.0,30.2 114.4,39.1" fill="#d6b280"/><polyline points="97.6,31.1 114.4,39.1 133.0,30.2" fill="none" stroke="#f6dc9a" stroke-width="1.0"/><ellipse cx="106.0" cy="28.0" rx="1.6" ry="0.8" fill="#f6f2e6"/><ellipse cx="112.0" cy="27.0" rx="1.6" ry="0.8" fill="#f6f2e6"/><ellipse cx="118.0" cy="30.0" rx="1.6" ry="0.8" fill="#f6f2e6"/><ellipse cx="110.0" cy="31.6" rx="1.6" ry="0.8" fill="#f6f2e6"/><rect x="79.6" y="41.0" width="2.0" height="8.0" fill="#1f7a34"/><rect x="96.4" y="41.0" width="2.0" height="8.0" fill="#1f7a34"/><ellipse cx="62.0" cy="58.0" rx="1.3" ry="1.0" fill="#2a8a30"/><ellipse cx="66.0" cy="58.0" rx="1.3" ry="1.0" fill="#2a8a30"/><ellipse cx="70.0" cy="58.0" rx="1.3" ry="1.0" fill="#2a8a30"/><ellipse cx="104.0" cy="58.0" rx="1.3" ry="1.0" fill="#2a8a30"/><ellipse cx="108.0" cy="58.0" rx="1.3" ry="1.0" fill="#2a8a30"/><ellipse cx="112.0" cy="58.0" rx="1.3" ry="1.0" fill="#2a8a30"/><ellipse cx="88.7" cy="61.6" rx="9.6" ry="4.8" fill="#8fc8ee"/><ellipse cx="88.7" cy="61.2" rx="8.0" ry="3.8" fill="#4a9ee0"/><ellipse cx="88.7" cy="60.4" rx="3.6" ry="1.8" fill="#a8dcf6"/><polygon points="87.4,60.0 88.7,49.6 90.0,60.0" fill="#ffffff"/></g>
<use href="#i-hotel" transform="translate(5 5.5) scale(.5)"/>
<use href="#i-group" transform="translate(5 50.5) scale(.5)"/>
</svg>
<span class="t r" style="left:3.8px;top:65.5px;font-size:6.86px;letter-spacing:0.74px;color:#1f1d1b;-webkit-text-stroke:.14px #1f1d1b;">CAESAR HOTEL</span>
<div class="tag"></div>
<span class="t" style="left:125.5px;top:68.1px;font-size:5.35px;letter-spacing:0.71px;color:#fff;">-4.0 MIO.</span>
</div>
<div class="card" style="left:1590px;top:523px">
<svg width="168" height="78" viewBox="0 0 168 78"><use href="#grid"/>
<g clip-path="url(#cardclip)"><polygon points="25.7,39.1 89.0,7.4 152.3,39.1 152.3,40.8 88.5,72.6 25.7,40.8" fill="#7a5a30"/><polygon points="25.7,39.1 89.0,7.4 152.3,39.1 88.5,71.0" fill="#33b030"/><polygon points="36.0,39.0 89.0,12.6 144.0,39.4 88.5,66.6" fill="#cbb088"/><polygon points="68.6,52.6 120.0,27.0 143.0,36.4 140.0,43.6 90.0,68.6 72.0,60.6" fill="#2486cc"/><polygon points="72.0,52.6 118.0,30.0 130.0,35.0 84.0,58.6" fill="#4aa8e4"/><ellipse cx="104.0" cy="54.0" rx="12.0" ry="5.0" fill="#3a98da"/><ellipse cx="124.0" cy="39.0" rx="9.0" ry="4.0" fill="#52b2ea"/><polygon points="104.0,40.0 116.0,34.0 124.0,42.0 112.0,48.0" fill="#d4b890"/><polygon points="74.0,46.6 96.0,36.0 100.0,40.0 80.0,50.6" fill="#d4b890"/><polygon points="69.0,1.5 120.4,1.5 120.4,20.4 69.0,45.6" fill="#c4d8ea"/><polyline points="69.0,8.0 120.4,-17.6" fill="none" stroke="#6fa6d2" stroke-width="1.6"/><polyline points="69.0,10.4 120.4,-15.2" fill="none" stroke="#ffffff" stroke-width="1.2"/><polyline points="69.0,16.4 120.4,-9.2" fill="none" stroke="#6fa6d2" stroke-width="1.6"/><polyline points="69.0,18.8 120.4,-6.8" fill="none" stroke="#ffffff" stroke-width="1.2"/><polyline points="69.0,24.8 120.4,-0.8" fill="none" stroke="#6fa6d2" stroke-width="1.6"/><polyline points="69.0,27.2 120.4,1.6" fill="none" stroke="#ffffff" stroke-width="1.2"/><polyline points="69.0,33.2 120.4,7.6" fill="none" stroke="#6fa6d2" stroke-width="1.6"/><polyline points="69.0,35.6 120.4,10.0" fill="none" stroke="#ffffff" stroke-width="1.2"/><polyline points="69.0,41.6 120.4,16.0" fill="none" stroke="#6fa6d2" stroke-width="1.6"/><polyline points="69.0,44.0 120.4,18.4" fill="none" stroke="#ffffff" stroke-width="1.2"/><polyline points="72.0,1.5 72.0,43.6" fill="none" stroke="#f8fafc" stroke-width="0.9"/><polyline points="77.6,1.5 77.6,40.9" fill="none" stroke="#f8fafc" stroke-width="0.9"/><polyline points="83.2,1.5 83.2,38.1" fill="none" stroke="#f8fafc" stroke-width="0.9"/><polyline points="88.8,1.5 88.8,35.4" fill="none" stroke="#f8fafc" stroke-width="0.9"/><polyline points="94.4,1.5 94.4,32.6" fill="none" stroke="#f8fafc" stroke-width="0.9"/><polyline points="100.0,1.5 100.0,29.9" fill="none" stroke="#f8fafc" stroke-width="0.9"/><polyline points="105.6,1.5 105.6,27.1" fill="none" stroke="#f8fafc" stroke-width="0.9"/><polyline points="111.2,1.5 111.2,24.4" fill="none" stroke="#f8fafc" stroke-width="0.9"/><polyline points="116.8,1.5 116.8,21.6" fill="none" stroke="#f8fafc" stroke-width="0.9"/><polygon points="69.0,41.0 120.4,15.6 120.4,20.4 69.0,45.6" fill="#8a6a48"/><polygon points="34.0,1.5 58.6,1.5 58.6,49.0 34.0,37.0" fill="#b9d6e6"/><polyline points="36.0,1.5 36.0,38.0" fill="none" stroke="#f2f8fc" stroke-width="0.8"/><polyline points="40.0,1.5 40.0,40.0" fill="none" stroke="#f2f8fc" stroke-width="0.8"/><polyline points="44.0,1.5 44.0,42.0" fill="none" stroke="#f2f8fc" stroke-width="0.8"/><polyline points="48.0,1.5 48.0,44.0" fill="none" stroke="#f2f8fc" stroke-width="0.8"/><polyline points="52.0,1.5 52.0,46.0" fill="none" stroke="#f2f8fc" stroke-width="0.8"/><polyline points="56.0,1.5 56.0,48.0" fill="none" stroke="#f2f8fc" stroke-width="0.8"/><polyline points="34.0,4.0 58.6,16.0" fill="none" stroke="#8ab4cc" stroke-width="0.5"/><polyline points="34.0,9.6 58.6,21.6" fill="none" stroke="#8ab4cc" stroke-width="0.5"/><polyline points="34.0,15.2 58.6,27.2" fill="none" stroke="#8ab4cc" stroke-width="0.5"/><polyline points="34.0,20.8 58.6,32.8" fill="none" stroke="#8ab4cc" stroke-width="0.5"/><polyline points="34.0,26.4 58.6,38.4" fill="none" stroke="#8ab4cc" stroke-width="0.5"/><polyline points="34.0,32.0 58.6,44.0" fill="none" stroke="#8ab4cc" stroke-width="0.5"/><polyline points="34.0,37.6 58.6,49.6" fill="none" stroke="#8ab4cc" stroke-width="0.5"/><polygon points="58.6,1.5 69.6,1.5 69.6,43.6 58.6,49.0" fill="#f6f6f8"/><polygon points="62.0,12.0 64.6,10.8 64.6,24.0 62.0,25.2" fill="#e8c040"/><polygon points="77.6,45.6 80.0,43.6 82.4,45.6 80.0,46.5" fill="#f2d21e"/><rect x="79.7" y="46.2" width="0.6" height="2.0" fill="#f4f4f4"/><polygon points="82.6,43.0 85.0,41.0 87.4,43.0 85.0,43.9" fill="#f2d21e"/><rect x="84.7" y="43.6" width="0.6" height="2.0" fill="#f4f4f4"/><polygon points="87.6,46.0 90.0,44.0 92.4,46.0 90.0,46.9" fill="#f2d21e"/><rect x="89.7" y="46.6" width="0.6" height="2.0" fill="#f4f4f4"/><polygon points="104.6,27.0 107.0,25.0 109.4,27.0 107.0,27.9" fill="#f2d21e"/><rect x="106.7" y="27.6" width="0.6" height="2.0" fill="#f4f4f4"/><polygon points="109.6,24.6 112.0,22.6 114.4,24.6 112.0,25.5" fill="#f2d21e"/><rect x="111.7" y="25.2" width="0.6" height="2.0" fill="#f4f4f4"/><polygon points="113.6,28.0 116.0,26.0 118.4,28.0 116.0,28.9" fill="#f2d21e"/><rect x="115.7" y="28.6" width="0.6" height="2.0" fill="#f4f4f4"/><polygon points="107.6,38.0 110.0,36.0 112.4,38.0 110.0,38.9" fill="#f2d21e"/><rect x="109.7" y="38.6" width="0.6" height="2.0" fill="#f4f4f4"/><polygon points="114.6,37.0 117.0,35.0 119.4,37.0 117.0,37.9" fill="#f2d21e"/><rect x="116.7" y="37.6" width="0.6" height="2.0" fill="#f4f4f4"/><polygon points="119.6,41.0 122.0,39.0 124.4,41.0 122.0,41.9" fill="#f2d21e"/><rect x="121.7" y="41.6" width="0.6" height="2.0" fill="#f4f4f4"/><polygon points="117.6,45.0 120.0,43.0 122.4,45.0 120.0,45.9" fill="#f2d21e"/><rect x="119.7" y="45.6" width="0.6" height="2.0" fill="#f4f4f4"/><rect x="29.5" y="25.0" width="1.1" height="10.0" fill="#7a4e22"/><path d="M30.0 22.2l2.2 1.1l2.8 0.2l-1.8 1.6l1.4 3.0l-4.6 -2.5l-4.6 2.5l1.4 -3.0Z" fill="#2a9430"/><path d="M25.0 24.1l5.0 -1.8l0.0 2.6Z" fill="#69b46e"/><rect x="32.9" y="29.0" width="1.1" height="9.0" fill="#7a4e22"/><path d="M33.4 26.2l2.2 1.1l2.8 0.2l-1.8 1.6l1.4 3.0l-4.6 -2.5l-4.6 2.5l1.4 -3.0Z" fill="#2a9430"/><path d="M28.4 28.1l5.0 -1.8l0.0 2.6Z" fill="#69b46e"/><rect x="54.5" y="43.0" width="1.1" height="8.0" fill="#7a4e22"/><path d="M55.0 40.2l2.2 1.1l2.8 0.2l-1.8 1.6l1.4 3.0l-4.6 -2.5l-4.6 2.5l1.4 -3.0Z" fill="#2a9430"/><path d="M50.0 42.1l5.0 -1.8l0.0 2.6Z" fill="#69b46e"/><rect x="60.5" y="41.4" width="1.1" height="8.6" fill="#7a4e22"/><path d="M61.0 38.6l2.2 1.1l2.8 0.2l-1.8 1.6l1.4 3.0l-4.6 -2.5l-4.6 2.5l1.4 -3.0Z" fill="#2a9430"/><path d="M56.0 40.5l5.0 -1.8l0.0 2.6Z" fill="#69b46e"/><rect x="65.5" y="46.0" width="1.1" height="7.0" fill="#7a4e22"/><path d="M66.0 43.2l2.2 1.1l2.8 0.2l-1.8 1.6l1.4 3.0l-4.6 -2.5l-4.6 2.5l1.4 -3.0Z" fill="#2a9430"/><path d="M61.0 45.1l5.0 -1.8l0.0 2.6Z" fill="#69b46e"/><rect x="143.1" y="22.0" width="1.1" height="9.0" fill="#7a4e22"/><path d="M143.6 19.2l2.2 1.1l2.8 0.2l-1.8 1.6l1.4 3.0l-4.6 -2.5l-4.6 2.5l1.4 -3.0Z" fill="#2a9430"/><path d="M138.6 21.1l5.0 -1.8l0.0 2.6Z" fill="#69b46e"/><rect x="146.5" y="19.0" width="1.1" height="10.0" fill="#7a4e22"/><path d="M147.0 16.2l2.2 1.1l2.8 0.2l-1.8 1.6l1.4 3.0l-4.6 -2.5l-4.6 2.5l1.4 -3.0Z" fill="#2a9430"/><path d="M142.0 18.1l5.0 -1.8l0.0 2.6Z" fill="#69b46e"/><rect x="93.5" y="54.0" width="1.1" height="9.0" fill="#7a4e22"/><path d="M94.0 51.2l2.2 1.1l2.8 0.2l-1.8 1.6l1.4 3.0l-4.6 -2.5l-4.6 2.5l1.4 -3.0Z" fill="#2a9430"/><path d="M89.0 53.1l5.0 -1.8l0.0 2.6Z" fill="#69b46e"/><rect x="99.5" y="50.0" width="1.1" height="10.0" fill="#7a4e22"/><path d="M100.0 47.2l2.2 1.1l2.8 0.2l-1.8 1.6l1.4 3.0l-4.6 -2.5l-4.6 2.5l1.4 -3.0Z" fill="#2a9430"/><path d="M95.0 49.1l5.0 -1.8l0.0 2.6Z" fill="#69b46e"/><rect x="87.5" y="60.0" width="1.1" height="6.0" fill="#7a4e22"/><path d="M88.0 57.2l2.2 1.1l2.8 0.2l-1.8 1.6l1.4 3.0l-4.6 -2.5l-4.6 2.5l1.4 -3.0Z" fill="#2a9430"/><path d="M83.0 59.1l5.0 -1.8l0.0 2.6Z" fill="#69b46e"/><ellipse cx="60.0" cy="54.0" rx="1.4" ry="1.2" fill="#2a9430"/><ellipse cx="59.6" cy="53.6" rx="0.7" ry="0.6" fill="#69b46e"/><ellipse cx="63.6" cy="55.8" rx="1.4" ry="1.2" fill="#2a9430"/><ellipse cx="63.2" cy="55.4" rx="0.7" ry="0.6" fill="#69b46e"/><ellipse cx="67.2" cy="57.6" rx="1.4" ry="1.2" fill="#2a9430"/><ellipse cx="66.8" cy="57.2" rx="0.7" ry="0.6" fill="#69b46e"/><ellipse cx="70.8" cy="59.4" rx="1.4" ry="1.2" fill="#2a9430"/><ellipse cx="70.4" cy="59.0" rx="0.7" ry="0.6" fill="#69b46e"/><ellipse cx="74.4" cy="61.2" rx="1.4" ry="1.2" fill="#2a9430"/><ellipse cx="74.0" cy="60.8" rx="0.7" ry="0.6" fill="#69b46e"/><ellipse cx="78.0" cy="63.0" rx="1.4" ry="1.2" fill="#2a9430"/><ellipse cx="77.6" cy="62.6" rx="0.7" ry="0.6" fill="#69b46e"/><ellipse cx="81.6" cy="64.8" rx="1.4" ry="1.2" fill="#2a9430"/><ellipse cx="81.2" cy="64.4" rx="0.7" ry="0.6" fill="#69b46e"/><ellipse cx="85.2" cy="66.6" rx="1.4" ry="1.2" fill="#2a9430"/><ellipse cx="84.8" cy="66.2" rx="0.7" ry="0.6" fill="#69b46e"/></g>
<use href="#i-hotel" transform="translate(5 5.5) scale(.5)"/>
<use href="#i-group" transform="translate(5 50.5) scale(.5)"/>
</svg>
<span class="t r" style="left:3.8px;top:65.5px;font-size:6.86px;letter-spacing:0.79px;color:#1f1d1b;-webkit-text-stroke:.14px #1f1d1b;">SUNRISE HOTEL</span>
<div class="tag"></div>
<span class="t" style="left:125.5px;top:68.1px;font-size:5.35px;letter-spacing:0.71px;color:#fff;">-7.0 MIO.</span>
</div>
<div class="card" style="left:615px;top:627px">
<svg width="168" height="78" viewBox="0 0 168 78"><use href="#grid"/>
<g clip-path="url(#cardclip)"><polygon points="73.4,48.6 88.2,41.4 103.0,48.6 88.2,55.8" fill="#f6e0b4"/><rect x="86.4" y="43.8" width="8.4" height="5.4" fill="#d81b7a"/><rect x="87.4" y="44.8" width="6.6" height="1.6" fill="#ffffff"/><rect x="86.4" y="47.6" width="8.4" height="1.4" fill="#f7a8cc"/><rect x="88.6" y="49.2" width="5.0" height="1.0" fill="#4aa83a"/><rect x="85.0" y="44.6" width="1.0" height="5.0" fill="#6a4a3a"/><rect x="81.8" y="40.2" width="0.9" height="5.0" fill="#c8c8d0"/><rect x="82.6" y="40.2" width="2.2" height="2.0" fill="#e83a8a"/></g>
<use href="#i-rest" transform="translate(5 5.5) scale(.5)"/>
<use href="#i-group" transform="translate(5 50.5) scale(.5)"/>
</svg>
<span class="t r" style="left:3.8px;top:65.5px;font-size:6.86px;letter-spacing:0.51px;color:#1f1d1b;-webkit-text-stroke:.14px #1f1d1b;">GELATO</span>
<div class="tag"></div>
<span class="t" style="left:127.2px;top:68.1px;font-size:5.35px;letter-spacing:1.11px;color:#fff;">-15.000</span>
</div>
<div class="card" style="left:810px;top:627px">
<svg width="168" height="78" viewBox="0 0 168 78"><use href="#grid"/>
<g clip-path="url(#cardclip)"><polygon points="74.1,48.4 87.7,55.2 101.3,48.4 101.3,50.0 87.7,56.8 74.1,50.0" fill="#5a4a3c"/><polygon points="74.1,48.4 87.7,41.6 101.3,48.4 87.7,55.2" fill="#8c7a6a"/><rect x="77.7" y="44.3" width="2.2" height="4.6" fill="#9a5ad0"/><rect x="78.2" y="45.1" width="1.2" height="1.4" fill="#ffffff"/><rect x="80.9" y="43.4" width="2.2" height="4.6" fill="#f0c030"/><rect x="81.4" y="44.2" width="1.2" height="1.4" fill="#ffffff"/><rect x="84.1" y="42.5" width="2.2" height="4.6" fill="#e8782a"/><rect x="84.6" y="43.3" width="1.2" height="1.4" fill="#ffffff"/><rect x="87.3" y="41.6" width="2.2" height="4.6" fill="#d83a3a"/><rect x="87.8" y="42.4" width="1.2" height="1.4" fill="#ffffff"/><rect x="90.5" y="42.5" width="2.2" height="4.6" fill="#3a9ad8"/><rect x="91.0" y="43.3" width="1.2" height="1.4" fill="#ffffff"/><rect x="93.7" y="43.4" width="2.2" height="4.6" fill="#9a5ad0"/><rect x="94.2" y="44.2" width="1.2" height="1.4" fill="#ffffff"/><rect x="96.9" y="44.3" width="2.2" height="4.6" fill="#f0c030"/><rect x="97.4" y="45.1" width="1.2" height="1.4" fill="#ffffff"/><ellipse cx="79.7" cy="51.1" rx="1.0" ry="0.7" fill="#d83a3a"/><ellipse cx="82.3" cy="52.0" rx="1.0" ry="0.7" fill="#3aa83a"/><ellipse cx="84.9" cy="52.9" rx="1.0" ry="0.7" fill="#f0c030"/><ellipse cx="87.5" cy="52.9" rx="1.0" ry="0.7" fill="#d83a3a"/><ellipse cx="90.1" cy="52.0" rx="1.0" ry="0.7" fill="#3aa83a"/><ellipse cx="92.7" cy="51.1" rx="1.0" ry="0.7" fill="#e8782a"/></g>
<use href="#i-rest" transform="translate(5 5.5) scale(.5)"/>
<use href="#i-group" transform="translate(5 50.5) scale(.5)"/>
</svg>
<span class="t r" style="left:3.8px;top:65.5px;font-size:6.86px;letter-spacing:1.24px;color:#1f1d1b;-webkit-text-stroke:.14px #1f1d1b;">SNACKS</span>
<div class="tag"></div>
<span class="t" style="left:127.2px;top:68.1px;font-size:5.35px;letter-spacing:1.11px;color:#fff;">-25.000</span>
</div>
<div class="card" style="left:1200px;top:627px">
<svg width="168" height="78" viewBox="0 0 168 78"><use href="#grid"/>
<g clip-path="url(#cardclip)"><polygon points="55.5,39.4 87.5,55.4 119.5,39.4 119.5,41.0 87.5,57.0 55.5,41.0" fill="#2e2e30"/><polygon points="55.5,39.4 87.5,23.4 119.5,39.4 87.5,55.4" fill="#5a5a5e"/><polygon points="58.1,39.4 87.5,24.7 116.9,39.4 87.5,54.1" fill="#3aa83e"/><polygon points="59.5,39.4 87.5,25.4 97.5,30.4 69.5,44.4" fill="#16163e"/><polygon points="70.5,45.0 98.5,31.0 105.5,34.4 77.5,48.4" fill="#16163e"/><polyline points="61.5,38.4 71.5,43.4" fill="none" stroke="#35c04a" stroke-width="0.5"/><polyline points="65.5,36.4 75.5,41.4" fill="none" stroke="#35c04a" stroke-width="0.5"/><polyline points="69.5,34.4 79.5,39.4" fill="none" stroke="#35c04a" stroke-width="0.5"/><polyline points="73.5,32.4 83.5,37.4" fill="none" stroke="#35c04a" stroke-width="0.5"/><polyline points="77.5,30.4 87.5,35.4" fill="none" stroke="#35c04a" stroke-width="0.5"/><polyline points="81.5,28.4 91.5,33.4" fill="none" stroke="#35c04a" stroke-width="0.5"/><polyline points="85.5,26.4 95.5,31.4" fill="none" stroke="#35c04a" stroke-width="0.5"/><polyline points="71.5,44.4 78.5,48.0" fill="none" stroke="#35c04a" stroke-width="0.5"/><polyline points="76.1,42.1 83.1,45.7" fill="none" stroke="#35c04a" stroke-width="0.5"/><polyline points="80.7,39.8 87.7,43.4" fill="none" stroke="#35c04a" stroke-width="0.5"/><polyline points="85.3,37.5 92.3,41.1" fill="none" stroke="#35c04a" stroke-width="0.5"/><polyline points="89.9,35.2 96.9,38.8" fill="none" stroke="#35c04a" stroke-width="0.5"/><polyline points="94.5,32.9 101.5,36.5" fill="none" stroke="#35c04a" stroke-width="0.5"/><polyline points="65.5,40.4 93.5,26.4" fill="none" stroke="#3a3a8a" stroke-width="0.5"/><polyline points="70.5,42.9 98.5,28.9" fill="none" stroke="#3a3a8a" stroke-width="0.5"/><polyline points="75.5,45.4 103.5,31.4" fill="none" stroke="#3a3a8a" stroke-width="0.5"/><polyline points="80.5,47.9 108.5,33.9" fill="none" stroke="#3a3a8a" stroke-width="0.5"/><polyline points="85.5,50.4 113.5,36.4" fill="none" stroke="#3a3a8a" stroke-width="0.5"/><polygon points="85.5,48.4 97.5,42.4 105.5,46.4 93.5,52.4" fill="#6e6e72"/><polygon points="93.5,52.4 105.5,46.4 105.5,49.0 93.5,55.0" fill="#4a4a4e"/><rect x="96.5" y="36.4" width="3.4" height="5.0" fill="#3a9ab8"/><ellipse cx="98.2" cy="36.4" rx="1.7" ry="0.9" fill="#6fc8e0"/><rect x="100.5" y="38.4" width="3.4" height="5.0" fill="#3a9ab8"/><ellipse cx="102.2" cy="38.4" rx="1.7" ry="0.9" fill="#6fc8e0"/><rect x="81.5" y="48.4" width="5.0" height="3.0" fill="#2f8aa0"/><ellipse cx="84.0" cy="48.4" rx="2.5" ry="1.2" fill="#5fb8c8"/><polyline points="105.5,41.4 113.5,37.4" fill="none" stroke="#2a6a2e" stroke-width="1.0"/><rect x="99.5" y="47.4" width="1.4" height="1.0" fill="#e83a2a"/><rect x="87.4" y="7.8" width="1.3" height="19.8" fill="#8fbccf"/><polyline points="88.0,7.8 83.4,10.4" fill="none" stroke="#f4f8fa" stroke-width="0.9"/><polyline points="88.0,7.8 92.0,10.8" fill="none" stroke="#f4f8fa" stroke-width="0.9"/><polyline points="88.0,7.8 88.4,2.8" fill="none" stroke="#f4f8fa" stroke-width="0.9"/><rect x="96.3" y="13.7" width="1.3" height="17.8" fill="#8fbccf"/><polyline points="96.9,13.7 92.3,16.3" fill="none" stroke="#f4f8fa" stroke-width="0.9"/><polyline points="96.9,13.7 100.9,16.7" fill="none" stroke="#f4f8fa" stroke-width="0.9"/><polyline points="96.9,13.7 97.3,8.7" fill="none" stroke="#f4f8fa" stroke-width="0.9"/><rect x="105.8" y="17.7" width="1.3" height="17.8" fill="#8fbccf"/><polyline points="106.4,17.7 101.8,20.3" fill="none" stroke="#f4f8fa" stroke-width="0.9"/><polyline points="106.4,17.7 110.4,20.7" fill="none" stroke="#f4f8fa" stroke-width="0.9"/><polyline points="106.4,17.7 106.8,12.7" fill="none" stroke="#f4f8fa" stroke-width="0.9"/><rect x="114.1" y="22.6" width="1.3" height="17.8" fill="#8fbccf"/><polyline points="114.7,22.6 110.1,25.2" fill="none" stroke="#f4f8fa" stroke-width="0.9"/><polyline points="114.7,22.6 118.7,25.6" fill="none" stroke="#f4f8fa" stroke-width="0.9"/><polyline points="114.7,22.6 115.1,17.6" fill="none" stroke="#f4f8fa" stroke-width="0.9"/></g>
<use href="#i-med2" transform="translate(5 5.5) scale(.5)"/>
</svg>
<div class="tag"></div>
<span class="t" style="left:125.0px;top:68.1px;font-size:5.35px;letter-spacing:1.06px;color:#fff;">-600.000</span>
</div>
<div class="card" style="left:1395px;top:627px">
<svg width="168" height="78" viewBox="0 0 168 78"><use href="#grid"/>
<g clip-path="url(#cardclip)"><polygon points="75.4,48.3 90.4,41.1 105.4,48.3 90.4,55.5" fill="#f4e2c0"/><ellipse cx="82.0" cy="42.9" rx="5.6" ry="8.0" fill="#e8c030"/><ellipse cx="80.8" cy="41.9" rx="3.4" ry="6.0" fill="#f4d850"/><polyline points="77.4,39.3 86.4,42.3" fill="none" stroke="#b88a18" stroke-width="0.5"/><polyline points="86.4,39.3 77.4,42.3" fill="none" stroke="#b88a18" stroke-width="0.5"/><polyline points="77.4,42.3 86.4,45.3" fill="none" stroke="#b88a18" stroke-width="0.5"/><polyline points="86.4,42.3 77.4,45.3" fill="none" stroke="#b88a18" stroke-width="0.5"/><polyline points="77.4,45.3 86.4,48.3" fill="none" stroke="#b88a18" stroke-width="0.5"/><polyline points="86.4,45.3 77.4,48.3" fill="none" stroke="#b88a18" stroke-width="0.5"/><polyline points="77.4,48.3 86.4,51.3" fill="none" stroke="#b88a18" stroke-width="0.5"/><polyline points="86.4,48.3 77.4,51.3" fill="none" stroke="#b88a18" stroke-width="0.5"/><polygon points="81.4,35.3 74.8,31.3 78.8,30.3 76.4,24.3 80.4,27.3 81.4,20.3 83.0,27.3 86.8,24.3 84.8,30.3 88.8,30.9 82.4,35.3" fill="#2a9a30"/><polygon points="81.4,34.3 78.8,28.3 81.4,22.3 83.4,28.3" fill="#46b840"/><polygon points="78.4,46.3 85.4,46.3 85.4,50.3 78.4,50.3" fill="#c8a020"/><rect x="80.4" y="47.3" width="3.4" height="1.6" fill="#3a2a1a"/><ellipse cx="94.0" cy="43.5" rx="2.6" ry="1.2" fill="#f6ecd6"/><polygon points="91.2,40.9 94.0,38.7 96.8,40.9 94.0,41.9" fill="#e8302a"/><rect x="93.7" y="41.5" width="0.6" height="2.2" fill="#6a4a2a"/><ellipse cx="99.4" cy="46.5" rx="2.6" ry="1.2" fill="#f6ecd6"/><polygon points="96.6,43.9 99.4,41.7 102.2,43.9 99.4,44.9" fill="#e8302a"/><rect x="99.1" y="44.5" width="0.6" height="2.2" fill="#6a4a2a"/><ellipse cx="88.8" cy="52.5" rx="2.6" ry="1.2" fill="#f6ecd6"/><polygon points="86.0,49.9 88.8,47.7 91.6,49.9 88.8,50.9" fill="#e8302a"/><rect x="88.5" y="50.5" width="0.6" height="2.2" fill="#6a4a2a"/></g>
<use href="#i-rest" transform="translate(5 5.5) scale(.5)"/>
<use href="#i-couple" transform="translate(5 50.6) scale(.5)"/>
</svg>
<span class="t r" style="left:3.8px;top:65.5px;font-size:6.86px;letter-spacing:0.75px;color:#1f1d1b;-webkit-text-stroke:.14px #1f1d1b;">SMOOTHIE BAR</span>
<div class="tag"></div>
<span class="t" style="left:127.2px;top:68.1px;font-size:5.35px;letter-spacing:1.11px;color:#fff;">-40.000</span>
</div>
<div class="card" style="left:1590px;top:627px">
<svg width="168" height="78" viewBox="0 0 168 78"><use href="#grid"/>
<g clip-path="url(#cardclip)"><polygon points="73.5,47.3 88.5,54.9 103.5,47.3 103.5,48.5 88.5,56.1 73.5,48.5" fill="#6a4420"/><polygon points="73.5,47.3 88.5,39.7 103.5,47.3 88.5,54.9" fill="#a87038"/><polygon points="77.5,47.3 88.5,41.7 99.5,47.3 88.5,52.9" fill="#8c5a2a"/><rect x="77.4" y="38.7" width="1.1" height="5.6" fill="#7a4e22"/><path d="M77.9 35.9l2.2 1.1l2.8 0.2l-1.8 1.6l1.4 3.0l-4.6 -2.5l-4.6 2.5l1.4 -3.0Z" fill="#2f9a30"/><path d="M72.9 37.8l5.0 -1.8l0.0 2.6Z" fill="#6db86e"/><rect x="98.6" y="37.7" width="1.1" height="6.0" fill="#7a4e22"/><path d="M99.1 34.9l2.2 1.1l2.8 0.2l-1.8 1.6l1.4 3.0l-4.6 -2.5l-4.6 2.5l1.4 -3.0Z" fill="#2f9a30"/><path d="M94.1 36.8l5.0 -1.8l0.0 2.6Z" fill="#6db86e"/><rect x="81.1" y="39.7" width="0.9" height="6.0" fill="#5a3a1c"/><rect x="88.1" y="43.3" width="0.9" height="6.0" fill="#5a3a1c"/><rect x="95.1" y="39.7" width="0.9" height="6.0" fill="#5a3a1c"/><rect x="88.1" y="36.7" width="0.9" height="6.0" fill="#5a3a1c"/><rect x="83.5" y="42.7" width="10.0" height="3.0" fill="#c88a3a"/><polygon points="78.5,41.7 88.5,33.9 98.5,41.7 88.5,45.7" fill="#b5823c"/><polygon points="88.5,33.9 98.5,41.7 88.5,45.7" fill="#8e5f26"/><polygon points="82.5,38.7 88.5,33.9 89.5,39.3" fill="#d09c50"/><rect x="93.5" y="42.3" width="1.6" height="1.4" fill="#3a6ae0"/><rect x="95.5" y="43.1" width="1.4" height="1.2" fill="#e03a3a"/><rect x="92.5" y="49.9" width="1.4" height="2.0" fill="#e8482a"/></g>
<use href="#i-rest" transform="translate(5 5.5) scale(.5)"/>
<use href="#i-couple" transform="translate(5 50.6) scale(.5)"/>
</svg>
<span class="t r" style="left:3.8px;top:65.5px;font-size:6.86px;letter-spacing:0.68px;color:#1f1d1b;-webkit-text-stroke:.14px #1f1d1b;">COCOBAR</span>
<div class="tag"></div>
<span class="t" style="left:127.2px;top:68.1px;font-size:5.35px;letter-spacing:1.11px;color:#fff;">-80.000</span>
</div>
<div class="card" style="left:615px;top:731px">
<svg width="168" height="78" viewBox="0 0 168 78"><use href="#grid"/>
<g clip-path="url(#cardclip)"><polygon points="73.5,48.0 88.5,40.6 103.5,48.0 88.5,55.4" fill="#2fa838"/><polygon points="75.9,48.0 88.5,41.8 101.1,48.0 88.5,54.2" fill="#8a6038"/><polygon points="80.5,47.0 86.5,50.0 86.5,52.0 80.5,49.0" fill="#6e4a28"/><polygon points="85.1,42.4 94.5,47.0 94.5,50.4 85.1,45.8" fill="#ededf0"/><polygon points="94.5,47.0 100.1,44.2 100.1,47.6 94.5,50.4" fill="#c5c7cf"/><polygon points="85.1,42.4 90.7,39.6 100.1,44.2 94.5,47.0" fill="#fafafa"/><polygon points="85.7,43.0 93.9,47.0 93.9,48.4 85.7,44.4" fill="#d8282e"/><polygon points="95.5,46.6 99.1,44.8 99.1,46.6 95.5,48.4" fill="#4a5868"/><rect x="78.9" y="45.0" width="1.0" height="3.6" fill="#2a2018"/><rect x="82.5" y="48.2" width="0.9" height="2.6" fill="#e8c040"/><rect x="84.9" y="49.4" width="0.9" height="2.6" fill="#e8c040"/></g>
<use href="#i-rest" transform="translate(5 5.5) scale(.5)"/>
<use href="#i-group" transform="translate(5 50.5) scale(.5)"/>
</svg>
<span class="t r" style="left:3.8px;top:65.5px;font-size:6.86px;letter-spacing:0.98px;color:#1f1d1b;-webkit-text-stroke:.14px #1f1d1b;">BERNDS  FRIES</span>
<div class="tag"></div>
<span class="t" style="left:127.2px;top:68.1px;font-size:5.35px;letter-spacing:1.11px;color:#fff;">-40.000</span>
</div>
<div class="card" style="left:810px;top:731px">
<svg width="168" height="78" viewBox="0 0 168 78"><use href="#grid"/>
<g clip-path="url(#cardclip)"><polygon points="96.5,31.4 113.8,40.0 80.5,56.6 63.2,48.0" fill="#2f9a38"/><polygon points="96.5,32.6 111.2,40.0 80.5,55.4 65.8,48.0" fill="#8c7c6c"/><ellipse cx="66.1" cy="47.2" rx="1.1" ry="0.8" fill="#e03a3a"/><ellipse cx="72.5" cy="44.0" rx="1.1" ry="0.8" fill="#f0c838"/><ellipse cx="78.9" cy="40.8" rx="1.1" ry="0.8" fill="#e03a3a"/><ellipse cx="85.3" cy="37.6" rx="1.1" ry="0.8" fill="#3aa83a"/><ellipse cx="67.7" cy="49.6" rx="1.1" ry="0.8" fill="#f0c838"/><ellipse cx="74.1" cy="52.8" rx="1.1" ry="0.8" fill="#e03a3a"/><ellipse cx="80.5" cy="56.0" rx="1.1" ry="0.8" fill="#f0c838"/><ellipse cx="86.9" cy="52.8" rx="1.1" ry="0.8" fill="#3aa83a"/><ellipse cx="93.3" cy="49.6" rx="1.1" ry="0.8" fill="#e03a3a"/><ellipse cx="99.7" cy="46.4" rx="1.1" ry="0.8" fill="#f0c838"/><ellipse cx="75.7" cy="46.2" rx="1.2" ry="0.7" fill="#f4f0e8"/><ellipse cx="75.7" cy="47.2" rx="0.8" ry="0.5" fill="#5a4030"/><ellipse cx="82.9" cy="48.2" rx="1.2" ry="0.7" fill="#f4f0e8"/><ellipse cx="82.9" cy="49.2" rx="0.8" ry="0.5" fill="#5a4030"/><ellipse cx="83.7" cy="43.0" rx="1.2" ry="0.7" fill="#f4f0e8"/><ellipse cx="83.7" cy="44.0" rx="0.8" ry="0.5" fill="#5a4030"/><ellipse cx="90.9" cy="45.0" rx="1.2" ry="0.7" fill="#f4f0e8"/><ellipse cx="90.9" cy="46.0" rx="0.8" ry="0.5" fill="#5a4030"/><ellipse cx="75.7" cy="49.4" rx="1.2" ry="0.7" fill="#f4f0e8"/><ellipse cx="75.7" cy="50.4" rx="0.8" ry="0.5" fill="#5a4030"/><polygon points="88.5,39.2 98.1,44.0 98.1,38.0 88.5,33.2" fill="#f2efe8"/><polygon points="106.9,39.6 98.1,44.0 98.1,38.0 106.9,33.6" fill="#cfcac0"/><polygon points="97.3,28.8 106.9,33.6 98.1,38.0 88.5,33.2" fill="#e8e4dc"/><polygon points="97.3,27.2 110.1,33.6 98.1,37.1 85.3,30.7" fill="#3a8ad8"/><polygon points="85.3,30.7 98.1,37.1 98.1,39.1 85.3,32.7" fill="#e84a4a"/><polygon points="100.5,28.8 103.7,30.4 91.7,33.9 88.5,32.3" fill="#ffffff"/><polygon points="106.9,32.0 110.1,33.6 98.1,37.1 94.9,35.5" fill="#ffffff"/><circle cx="104.5" cy="24.0" r="1.2" fill="#3a8ad8"/></g>
<use href="#i-rest" transform="translate(5 5.5) scale(.5)"/>
<use href="#i-group" transform="translate(5 50.5) scale(.5)"/>
</svg>
<span class="t r" style="left:3.8px;top:65.5px;font-size:6.86px;letter-spacing:0.71px;color:#1f1d1b;-webkit-text-stroke:.14px #1f1d1b;">BISTRO</span>
<div class="tag"></div>
<span class="t" style="left:127.2px;top:68.1px;font-size:5.35px;letter-spacing:1.11px;color:#fff;">-90.000</span>
</div>
<div class="card" style="left:1395px;top:731px">
<svg width="168" height="78" viewBox="0 0 168 78"><use href="#grid"/>
<g clip-path="url(#cardclip)"><polygon points="57.8,40.2 88.4,25.2 119.0,40.2 88.4,55.2" fill="#f6e2b6"/><ellipse cx="88.8" cy="41.2" rx="23.0" ry="9.4" fill="#38b232"/><ellipse cx="108.8" cy="42.2" rx="1.1" ry="0.8" fill="#f0e030"/><ellipse cx="107.3" cy="45.1" rx="1.1" ry="0.8" fill="#f0e030"/><ellipse cx="102.9" cy="47.6" rx="1.1" ry="0.8" fill="#f0e030"/><ellipse cx="96.5" cy="49.2" rx="1.1" ry="0.8" fill="#f0e030"/><ellipse cx="88.8" cy="49.8" rx="1.1" ry="0.8" fill="#f0e030"/><ellipse cx="81.1" cy="49.2" rx="1.1" ry="0.8" fill="#f0e030"/><ellipse cx="74.7" cy="47.6" rx="1.1" ry="0.8" fill="#f0e030"/><ellipse cx="70.3" cy="45.1" rx="1.1" ry="0.8" fill="#f0e030"/><ellipse cx="68.8" cy="42.2" rx="1.1" ry="0.8" fill="#f0e030"/><rect x="65.9" y="28.8" width="1.1" height="11.0" fill="#7a4e22"/><path d="M66.4 26.0l2.2 1.1l2.8 0.2l-1.8 1.6l1.4 3.0l-4.6 -2.5l-4.6 2.5l1.4 -3.0Z" fill="#2f9a30"/><path d="M61.4 27.9l5.0 -1.8l0.0 2.6Z" fill="#6db86e"/><rect x="69.9" y="24.6" width="1.1" height="11.6" fill="#7a4e22"/><path d="M70.4 21.8l2.2 1.1l2.8 0.2l-1.8 1.6l1.4 3.0l-4.6 -2.5l-4.6 2.5l1.4 -3.0Z" fill="#2f9a30"/><path d="M65.4 23.7l5.0 -1.8l0.0 2.6Z" fill="#6db86e"/><ellipse cx="88.8" cy="40.2" rx="19.6" ry="8.0" fill="#8a4e20"/><ellipse cx="88.8" cy="38.6" rx="19.6" ry="8.0" fill="#b96f32"/><ellipse cx="76.4" cy="39.2" rx="3.0" ry="2.4" fill="#c98446"/><ellipse cx="100.4" cy="40.6" rx="3.6" ry="2.6" fill="#9a5a26"/><rect x="77.8" y="33.4" width="22.0" height="7.2" fill="#3a96e2"/><ellipse cx="88.8" cy="40.6" rx="11.0" ry="3.6" fill="#3a96e2"/><rect x="79.8" y="35.5" width="2.0" height="5.6" fill="#8fcbf4"/><rect x="82.8" y="35.2" width="2.0" height="5.6" fill="#8fcbf4"/><rect x="85.8" y="34.9" width="2.0" height="5.6" fill="#8fcbf4"/><rect x="88.8" y="34.6" width="2.0" height="5.6" fill="#8fcbf4"/><rect x="91.8" y="34.9" width="2.0" height="5.6" fill="#8fcbf4"/><rect x="94.8" y="35.2" width="2.0" height="5.6" fill="#8fcbf4"/><rect x="97.8" y="35.5" width="2.0" height="5.6" fill="#8fcbf4"/><ellipse cx="88.8" cy="33.4" rx="11.4" ry="4.0" fill="#d8302a"/><ellipse cx="88.8" cy="32.6" rx="11.4" ry="4.0" fill="#8a6a3a"/><ellipse cx="88.8" cy="31.8" rx="8.6" ry="2.8" fill="#caa070"/><ellipse cx="87.4" cy="31.6" rx="1.0" ry="0.6" fill="#f0f0f0"/><ellipse cx="91.4" cy="32.0" rx="1.0" ry="0.6" fill="#f0f0f0"/><rect x="86.4" y="43.8" width="5.0" height="3.0" fill="#7a4a22"/></g>
<use href="#i-rest" transform="translate(5 5.5) scale(.5)"/>
<use href="#i-couple" transform="translate(5 50.6) scale(.5)"/>
</svg>
<span class="t r" style="left:3.8px;top:65.5px;font-size:6.86px;letter-spacing:1.12px;color:#1f1d1b;-webkit-text-stroke:.14px #1f1d1b;">SKY LOUNGE</span>
<div class="tag"></div>
<span class="t" style="left:125.0px;top:68.1px;font-size:5.35px;letter-spacing:1.06px;color:#fff;">-300.000</span>
</div>
<div class="card" style="left:1590px;top:731px">
<svg width="168" height="78" viewBox="0 0 168 78"><use href="#grid"/>
<g clip-path="url(#cardclip)"><polygon points="57.5,39.3 88.5,54.8 119.5,39.3 119.5,40.9 88.5,56.5 57.5,40.9" fill="#2a1c10"/><polygon points="57.5,39.3 88.5,23.8 119.5,39.3 88.5,54.8" fill="#c8a030"/><polygon points="58.9,39.3 88.5,24.5 118.1,39.3 88.5,54.1" fill="#4e3824"/><polygon points="68.5,40.3 88.5,30.3 108.5,40.3 88.5,50.3" fill="#634628"/><polygon points="61.5,33.9 69.5,37.9 69.5,34.3 61.5,30.3" fill="#3a2a1c"/><polygon points="69.5,37.9 77.5,33.9 77.5,30.3 69.5,34.3" fill="#241a12"/><polygon points="59.9,30.9 69.5,23.9 79.1,30.9 69.5,35.9" fill="#2e2218"/><polygon points="69.5,23.9 79.1,30.9 69.5,35.9" fill="#1e1610"/><ellipse cx="63.5" cy="35.2" rx="0.8" ry="0.6" fill="#f2ead0"/><ellipse cx="68.1" cy="36.6" rx="0.8" ry="0.6" fill="#f2ead0"/><ellipse cx="72.7" cy="36.6" rx="0.8" ry="0.6" fill="#f2ead0"/><ellipse cx="77.3" cy="35.2" rx="0.8" ry="0.6" fill="#f2ead0"/><polygon points="91.9,32.3 101.5,37.1 101.5,33.5 91.9,28.7" fill="#3a2a1c"/><polygon points="101.5,37.1 111.1,32.3 111.1,28.7 101.5,33.5" fill="#241a12"/><polygon points="90.3,29.3 101.5,22.3 112.7,29.3 101.5,35.1" fill="#2e2218"/><polygon points="101.5,22.3 112.7,29.3 101.5,35.1" fill="#1e1610"/><ellipse cx="93.9" cy="33.6" rx="0.8" ry="0.6" fill="#f2ead0"/><ellipse cx="98.5" cy="35.0" rx="0.8" ry="0.6" fill="#f2ead0"/><ellipse cx="103.1" cy="35.0" rx="0.8" ry="0.6" fill="#f2ead0"/><ellipse cx="107.7" cy="33.6" rx="0.8" ry="0.6" fill="#f2ead0"/><rect x="76.4" y="22.3" width="1.0" height="8.0" fill="#5a3a1c"/><ellipse cx="76.9" cy="21.3" rx="3.6" ry="3.1" fill="#2a9a3a"/><ellipse cx="75.8" cy="20.2" rx="1.8" ry="1.6" fill="#69b875"/><ellipse cx="78.9" cy="23.9" rx="2.5" ry="2.1" fill="#23883a"/><ellipse cx="78.1" cy="23.1" rx="1.3" ry="1.1" fill="#65ab75"/><rect x="87.0" y="17.3" width="1.0" height="9.0" fill="#5a3a1c"/><ellipse cx="87.5" cy="16.3" rx="3.6" ry="3.1" fill="#2a9a3a"/><ellipse cx="86.4" cy="15.2" rx="1.8" ry="1.6" fill="#69b875"/><ellipse cx="89.5" cy="18.9" rx="2.5" ry="2.1" fill="#23883a"/><ellipse cx="88.7" cy="18.1" rx="1.3" ry="1.1" fill="#65ab75"/><rect x="80.4" y="26.3" width="1.0" height="6.0" fill="#5a3a1c"/><ellipse cx="80.9" cy="25.3" rx="3.0" ry="2.5" fill="#2a9a3a"/><ellipse cx="80.0" cy="24.4" rx="1.5" ry="1.4" fill="#69b875"/><ellipse cx="82.9" cy="27.9" rx="2.1" ry="1.8" fill="#23883a"/><ellipse cx="82.3" cy="27.3" rx="1.0" ry="0.9" fill="#65ab75"/><rect x="86.4" y="44.3" width="1.0" height="5.0" fill="#5a3a1c"/><ellipse cx="86.9" cy="43.3" rx="3.0" ry="2.5" fill="#2a9a3a"/><ellipse cx="86.0" cy="42.4" rx="1.5" ry="1.4" fill="#69b875"/><ellipse cx="88.9" cy="45.9" rx="2.1" ry="1.8" fill="#23883a"/><ellipse cx="88.3" cy="45.3" rx="1.0" ry="0.9" fill="#65ab75"/><rect x="82.5" y="45.3" width="2.4" height="1.2" fill="#2a1c12"/><rect x="92.5" y="48.3" width="2.4" height="1.2" fill="#2a1c12"/><rect x="98.5" y="44.3" width="2.4" height="1.2" fill="#2a1c12"/><rect x="76.5" y="42.3" width="2.4" height="1.2" fill="#2a1c12"/><rect x="88.5" y="51.3" width="2.4" height="1.2" fill="#2a1c12"/><rect x="110.5" y="37.3" width="1.4" height="2.4" fill="#f2f2f2"/></g>
<use href="#i-rest" transform="translate(5 5.5) scale(.5)"/>
<use href="#i-couple" transform="translate(5 50.6) scale(.5)"/>
</svg>
<span class="t r" style="left:3.8px;top:65.5px;font-size:6.86px;letter-spacing:0.95px;color:#1f1d1b;-webkit-text-stroke:.14px #1f1d1b;">SUSHI</span>
<div class="tag"></div>
<span class="t" style="left:125.0px;top:68.1px;font-size:5.35px;letter-spacing:1.06px;color:#fff;">-500.000</span>
</div>
<div class="card" style="left:615px;top:835px">
<svg width="168" height="78" viewBox="0 0 168 78"><use href="#grid"/>
<g clip-path="url(#cardclip)"><polygon points="58.1,39.7 88.7,55.0 119.3,39.7 119.3,41.7 88.7,57.1 58.1,41.7" fill="#6a4a2e"/><polygon points="58.1,39.7 88.7,24.4 119.3,39.7 88.7,55.0" fill="#8e6844"/><polygon points="61.1,39.7 88.7,25.9 116.3,39.7 88.7,53.5" fill="#9c744c"/><polygon points="79.7,29.3 90.7,34.7 90.7,41.3 79.7,35.9" fill="#ecc03a"/><polygon points="90.7,34.7 100.7,29.7 100.7,36.3 90.7,41.3" fill="#c8962a"/><polygon points="78.7,29.1 89.7,23.5 101.7,29.5 90.7,35.1" fill="#6c6c70"/><polygon points="81.7,28.7 89.7,24.7 98.3,29.1 90.7,32.9" fill="#8a8a90"/><polygon points="82.3,33.3 87.7,35.9 87.7,39.1 82.3,36.5" fill="#4a86c8"/><polygon points="92.7,35.3 98.7,32.3 98.7,35.3 92.7,38.3" fill="#7a5a2a"/><ellipse cx="96.7" cy="27.3" rx="1.6" ry="1.2" fill="#d8343a"/><ellipse cx="98.1" cy="28.3" rx="1.2" ry="0.9" fill="#3aa83a"/><ellipse cx="100.7" cy="30.7" rx="1.6" ry="1.2" fill="#d8343a"/><ellipse cx="102.1" cy="31.7" rx="1.2" ry="0.9" fill="#3aa83a"/><ellipse cx="104.3" cy="33.3" rx="1.6" ry="1.2" fill="#d8343a"/><ellipse cx="105.7" cy="34.3" rx="1.2" ry="0.9" fill="#3aa83a"/><ellipse cx="99.7" cy="36.7" rx="1.6" ry="1.2" fill="#d8343a"/><ellipse cx="101.1" cy="37.7" rx="1.2" ry="0.9" fill="#3aa83a"/><rect x="66.2" y="28.3" width="1.1" height="7.0" fill="#7a4e22"/><path d="M66.7 25.5l2.2 1.1l2.8 0.2l-1.8 1.6l1.4 3.0l-4.6 -2.5l-4.6 2.5l1.4 -3.0Z" fill="#2f9a34"/><path d="M61.7 27.4l5.0 -1.8l0.0 2.6Z" fill="#6db870"/><rect x="104.8" y="23.1" width="1.1" height="7.0" fill="#7a4e22"/><path d="M105.3 20.3l2.2 1.1l2.8 0.2l-1.8 1.6l1.4 3.0l-4.6 -2.5l-4.6 2.5l1.4 -3.0Z" fill="#2f9a34"/><path d="M100.3 22.2l5.0 -1.8l0.0 2.6Z" fill="#6db870"/><rect x="107.8" y="29.5" width="1.1" height="7.6" fill="#7a4e22"/><path d="M108.3 26.7l2.2 1.1l2.8 0.2l-1.8 1.6l1.4 3.0l-4.6 -2.5l-4.6 2.5l1.4 -3.0Z" fill="#2f9a34"/><path d="M103.3 28.6l5.0 -1.8l0.0 2.6Z" fill="#6db870"/><rect x="72.2" y="32.7" width="1.0" height="4.6" fill="#5a3a20"/><ellipse cx="72.7" cy="31.7" rx="3.2" ry="2.7" fill="#257a30"/><ellipse cx="71.7" cy="30.7" rx="1.6" ry="1.4" fill="#66a16e"/><rect x="74.6" y="37.7" width="1.0" height="4.6" fill="#5a3a20"/><ellipse cx="75.1" cy="36.7" rx="3.4" ry="2.9" fill="#257a30"/><ellipse cx="74.1" cy="35.7" rx="1.7" ry="1.5" fill="#66a16e"/><rect x="85.2" y="43.1" width="1.0" height="4.6" fill="#5a3a20"/><ellipse cx="85.7" cy="42.1" rx="3.4" ry="2.9" fill="#257a30"/><ellipse cx="84.7" cy="41.1" rx="1.7" ry="1.5" fill="#66a16e"/><rect x="70.2" y="28.7" width="1.0" height="4.6" fill="#5a3a20"/><ellipse cx="70.7" cy="27.7" rx="2.6" ry="2.2" fill="#257a30"/><ellipse cx="69.9" cy="26.9" rx="1.3" ry="1.2" fill="#66a16e"/><rect x="60.6" y="34.3" width="1.0" height="5.0" fill="#3a2a20"/><ellipse cx="61.1" cy="33.9" rx="1.2" ry="0.9" fill="#d8343a"/><ellipse cx="61.7" cy="40.9" rx="2.0" ry="1.7" fill="#2f9a34"/><ellipse cx="61.1" cy="40.3" rx="1.0" ry="0.9" fill="#6db870"/><rect x="114.8" y="34.3" width="1.0" height="5.0" fill="#3a2a20"/><ellipse cx="115.3" cy="33.9" rx="1.2" ry="0.9" fill="#d8343a"/><ellipse cx="115.9" cy="40.9" rx="2.0" ry="1.7" fill="#2f9a34"/><ellipse cx="115.3" cy="40.3" rx="1.0" ry="0.9" fill="#6db870"/><ellipse cx="89.7" cy="54.1" rx="2.2" ry="1.9" fill="#2f9a34"/><ellipse cx="89.0" cy="53.4" rx="1.1" ry="1.0" fill="#6db870"/><ellipse cx="87.7" cy="54.3" rx="1.0" ry="0.7" fill="#d8343a"/><rect x="70.7" y="42.7" width="3.4" height="1.0" fill="#6a4428"/><rect x="78.7" y="46.7" width="3.4" height="1.0" fill="#6a4428"/><rect x="94.7" y="46.3" width="3.4" height="1.0" fill="#6a4428"/><rect x="102.7" y="42.3" width="3.4" height="1.0" fill="#6a4428"/><rect x="92.7" y="50.3" width="3.4" height="1.0" fill="#6a4428"/><rect x="80.7" y="41.3" width="3.4" height="1.0" fill="#6a4428"/></g>
<use href="#i-rest" transform="translate(5 5.5) scale(.5)"/>
<use href="#i-group" transform="translate(5 50.5) scale(.5)"/>
</svg>
<span class="t r" style="left:3.8px;top:65.5px;font-size:6.86px;letter-spacing:0.75px;color:#1f1d1b;-webkit-text-stroke:.14px #1f1d1b;">CASA ROMEO</span>
<div class="tag"></div>
<span class="t" style="left:125.0px;top:68.1px;font-size:5.35px;letter-spacing:1.06px;color:#fff;">-160.000</span>
</div>
<div class="card" style="left:810px;top:835px">
<svg width="168" height="78" viewBox="0 0 168 78"><use href="#grid"/>
<g clip-path="url(#cardclip)"><polygon points="96.5,31.4 113.8,40.0 80.5,56.6 63.2,48.0" fill="#8a6238"/><polygon points="96.5,32.0 112.5,40.0 80.5,56.0 64.5,48.0" fill="#a87848"/><rect x="85.4" y="24.0" width="1.1" height="7.0" fill="#7a4e22"/><path d="M85.9 21.2l2.2 1.1l2.8 0.2l-1.8 1.6l1.4 3.0l-4.6 -2.5l-4.6 2.5l1.4 -3.0Z" fill="#2a8f30"/><path d="M80.9 23.1l5.0 -1.8l0.0 2.6Z" fill="#69b06e"/><polygon points="75.5,42.4 84.5,46.8 84.5,50.6 75.5,46.2" fill="#4a94dc"/><polygon points="84.5,46.8 87.5,45.4 87.5,49.0 84.5,50.6" fill="#2a6cb4"/><polyline points="76.5,43.0 76.5,46.6" fill="none" stroke="#a8d4f8" stroke-width="0.6"/><polyline points="78.7,44.1 78.7,47.7" fill="none" stroke="#a8d4f8" stroke-width="0.6"/><polyline points="80.9,45.2 80.9,48.8" fill="none" stroke="#a8d4f8" stroke-width="0.6"/><polyline points="83.1,46.3 83.1,49.9" fill="none" stroke="#a8d4f8" stroke-width="0.6"/><rect x="77.1" y="35.6" width="0.9" height="6.4" fill="#e9e9ee"/><rect x="87.1" y="40.6" width="0.9" height="6.4" fill="#e9e9ee"/><rect x="102.1" y="33.0" width="0.9" height="6.4" fill="#e9e9ee"/><rect x="92.1" y="28.2" width="0.9" height="6.4" fill="#e9e9ee"/><polygon points="75.9,35.6 92.1,27.6 104.5,33.6 87.9,41.8" fill="#f6e45a"/><polygon points="75.9,35.6 87.9,41.8 87.9,43.2 75.9,37.0" fill="#d8c23a"/><polygon points="87.9,41.8 104.5,33.6 104.5,35.0 87.9,43.2" fill="#b8a428"/><polygon points="78.5,35.4 92.1,28.8 94.5,30.0 80.9,36.6" fill="#fbf2a0"/><rect x="92.5" y="46.0" width="2.0" height="1.6" fill="#5a3a20"/><rect x="96.5" y="44.0" width="2.0" height="1.6" fill="#5a3a20"/><rect x="100.1" y="42.0" width="2.0" height="1.6" fill="#5a3a20"/></g>
<use href="#rot" x="136" y="48.6"/>
<use href="#i-rest" transform="translate(5 5.5) scale(.5)"/>
<use href="#i-group" transform="translate(5 50.5) scale(.5)"/>
</svg>
<span class="t r" style="left:3.8px;top:65.5px;font-size:6.86px;letter-spacing:0.00px;color:#1f1d1b;-webkit-text-stroke:.14px #1f1d1b;"> CAFÉ</span>
<div class="tag"></div>
<span class="t" style="left:125.0px;top:68.1px;font-size:5.35px;letter-spacing:1.06px;color:#fff;">-250.000</span>
</div>
<div class="card" style="left:1395px;top:835px">
<svg width="168" height="78" viewBox="0 0 168 78"><use href="#grid"/>
<g clip-path="url(#cardclip)"><polygon points="57.0,39.3 88.0,54.9 119.0,39.3 119.0,40.9 88.0,56.5 57.0,40.9" fill="#3a2e22"/><polygon points="57.0,39.3 88.0,23.7 119.0,39.3 88.0,54.9" fill="#2f9a38"/><polygon points="60.0,39.3 88.0,25.3 116.0,39.3 88.0,53.3" fill="#4c4c4a"/><polygon points="64.0,40.3 76.0,36.3 86.0,43.3 90.0,50.3 82.0,51.3" fill="#2a6cc8"/><ellipse cx="84.0" cy="47.9" rx="5.0" ry="3.0" fill="#3a84dc"/><rect x="71.0" y="34.9" width="3.0" height="1.6" fill="#8a5230"/><rect x="77.0" y="32.3" width="3.0" height="1.6" fill="#8a5230"/><rect x="84.0" y="40.9" width="3.0" height="1.6" fill="#8a5230"/><rect x="92.0" y="44.3" width="3.0" height="1.6" fill="#8a5230"/><rect x="98.0" y="47.3" width="3.0" height="1.6" fill="#8a5230"/><rect x="100.0" y="42.3" width="3.0" height="1.6" fill="#8a5230"/><polygon points="81.0,31.7 97.0,39.7 97.0,45.3 81.0,37.3" fill="#3a2c20"/><polygon points="97.0,39.7 112.0,32.3 112.0,37.9 97.0,45.3" fill="#2c2018"/><polygon points="82.4,33.9 88.0,36.7 88.0,39.3 82.4,36.5" fill="#3ad850"/><polygon points="90.0,37.7 96.0,40.7 96.0,43.3 90.0,40.3" fill="#5ab0e0"/><polygon points="98.0,40.9 104.0,37.9 104.0,40.9 98.0,43.9" fill="#5ab0e0"/><polygon points="79.6,31.9 90.0,17.7 113.4,29.5 97.0,39.9" fill="#4f3c2a"/><polygon points="79.6,31.9 90.0,17.7 91.6,18.5 81.4,32.7" fill="#6a5238"/><polygon points="90.0,17.7 113.4,29.5 113.4,32.5 97.0,39.9 97.0,40.9" fill="#3e2e20"/><polygon points="90.0,17.7 113.4,29.5 97.0,39.9" fill="#45331f"/><polyline points="91.0,18.9 82.0,33.3" fill="none" stroke="#5e4a34" stroke-width="0.4"/><polyline points="93.8,20.3 84.8,34.7" fill="none" stroke="#5e4a34" stroke-width="0.4"/><polyline points="96.6,21.7 87.6,36.1" fill="none" stroke="#5e4a34" stroke-width="0.4"/><polyline points="99.4,23.1 90.4,37.5" fill="none" stroke="#5e4a34" stroke-width="0.4"/><polyline points="102.2,24.5 93.2,38.9" fill="none" stroke="#5e4a34" stroke-width="0.4"/><polyline points="105.0,25.9 96.0,40.3" fill="none" stroke="#5e4a34" stroke-width="0.4"/><polyline points="107.8,27.3 98.8,41.7" fill="none" stroke="#5e4a34" stroke-width="0.4"/><polyline points="110.6,28.7 101.6,43.1" fill="none" stroke="#5e4a34" stroke-width="0.4"/><ellipse cx="60.0" cy="38.7" rx="1.8" ry="1.5" fill="#2f9a38"/><ellipse cx="59.5" cy="38.2" rx="0.9" ry="0.8" fill="#6db873"/><ellipse cx="114.0" cy="38.3" rx="1.8" ry="1.5" fill="#2f9a38"/><ellipse cx="113.5" cy="37.8" rx="0.9" ry="0.8" fill="#6db873"/><ellipse cx="108.0" cy="42.9" rx="1.8" ry="1.5" fill="#2f9a38"/><ellipse cx="107.5" cy="42.4" rx="0.9" ry="0.8" fill="#6db873"/><ellipse cx="86.0" cy="52.9" rx="1.8" ry="1.5" fill="#2f9a38"/><ellipse cx="85.5" cy="52.4" rx="0.9" ry="0.8" fill="#6db873"/><ellipse cx="104.0" cy="45.3" rx="1.8" ry="1.5" fill="#2f9a38"/><ellipse cx="103.5" cy="44.8" rx="0.9" ry="0.8" fill="#6db873"/></g>
<use href="#i-rest" transform="translate(5 5.5) scale(.5)"/>
<use href="#i-couple" transform="translate(5 50.6) scale(.5)"/>
</svg>
<span class="t r" style="left:3.8px;top:65.5px;font-size:6.86px;letter-spacing:0.94px;color:#1f1d1b;-webkit-text-stroke:.14px #1f1d1b;">LA CUISINE</span>
<div class="tag"></div>
<span class="t" style="left:125.0px;top:68.1px;font-size:5.35px;letter-spacing:1.06px;color:#fff;">-500.000</span>
</div>
<div class="card" style="left:1590px;top:835px">
<svg width="168" height="78" viewBox="0 0 168 78"><use href="#grid"/>
<g clip-path="url(#cardclip)"><polygon points="73.1,48.0 88.5,40.3 103.9,48.0 88.5,55.7" fill="#2fae30"/><polygon points="74.9,48.0 88.5,41.2 102.1,48.0 88.5,54.8" fill="#3f9a40"/><polyline points="77.5,46.8 90.5,53.4" fill="none" stroke="#2e8232" stroke-width="0.5" stroke-dasharray="1 1"/><polyline points="80.3,45.4 93.3,52.0" fill="none" stroke="#2e8232" stroke-width="0.5" stroke-dasharray="1 1"/><polyline points="83.1,44.0 96.1,50.6" fill="none" stroke="#2e8232" stroke-width="0.5" stroke-dasharray="1 1"/><polyline points="85.9,42.6 98.9,49.2" fill="none" stroke="#2e8232" stroke-width="0.5" stroke-dasharray="1 1"/><polyline points="88.7,41.2 101.7,47.8" fill="none" stroke="#2e8232" stroke-width="0.5" stroke-dasharray="1 1"/><polyline points="82.1,43.0 96.1,50.0" fill="none" stroke="#20202a" stroke-width="1.2"/><rect x="81.7" y="41.4" width="0.8" height="2.0" fill="#20202a"/><rect x="95.7" y="48.4" width="0.8" height="2.0" fill="#20202a"/></g>
<use href="#i-ball" transform="translate(5 5.5) scale(.5)"/>
<use href="#i-couple" transform="translate(5 50.6) scale(.5)"/>
</svg>
<span class="t r" style="left:3.8px;top:65.5px;font-size:6.86px;letter-spacing:0.95px;color:#1f1d1b;-webkit-text-stroke:.14px #1f1d1b;">TENNIS</span>
<div class="tag"></div>
<span class="t" style="left:127.2px;top:68.1px;font-size:5.35px;letter-spacing:1.11px;color:#fff;">-40.000</span>
</div>
<div class="card" style="left:615px;top:939px">
<svg width="168" height="78" viewBox="0 0 168 78"><use href="#grid"/>
<g clip-path="url(#cardclip)"><polygon points="57.9,40.0 88.5,55.3 119.1,40.0 119.1,41.6 88.5,57.0 57.9,41.6" fill="#9a6e38"/><polygon points="57.9,40.0 88.5,24.7 119.1,40.0 88.5,55.3" fill="#cc9c5c"/><polygon points="61.5,40.0 88.5,26.5 115.5,40.0 88.5,53.5" fill="#c49254"/><rect x="63.9" y="36.0" width="0.9" height="4.6" fill="#4a3424"/><rect x="62.5" y="37.4" width="3.6" height="0.9" fill="#4a3424"/><polygon points="73.5,32.4 85.9,38.6 85.9,52.6 73.5,46.4" fill="#8a4a30"/><polygon points="74.9,39.0 84.5,43.8 84.5,50.6 74.9,45.8" fill="#5a2e20"/><polygon points="75.9,40.6 83.5,44.4 83.5,46.0 75.9,42.2" fill="#d8862a"/><polygon points="71.9,32.0 93.5,21.0 106.5,27.6 85.9,38.4" fill="#5a4438"/><polygon points="77.5,26.0 92.1,18.6 104.5,24.8 90.5,32.0" fill="#7a5c48"/><polygon points="77.5,26.0 90.5,32.0 90.5,34.4 77.5,28.4" fill="#4a362c"/><polyline points="74.5,31.4 92.5,22.4" fill="none" stroke="#8a7262" stroke-width="0.5"/><polyline points="76.9,32.6 94.9,23.6" fill="none" stroke="#8a7262" stroke-width="0.5"/><polyline points="79.3,33.8 97.3,24.8" fill="none" stroke="#8a7262" stroke-width="0.5"/><polyline points="81.7,35.0 99.7,26.0" fill="none" stroke="#8a7262" stroke-width="0.5"/><polyline points="84.1,36.2 102.1,27.2" fill="none" stroke="#8a7262" stroke-width="0.5"/><polyline points="86.5,37.4 104.5,28.4" fill="none" stroke="#8a7262" stroke-width="0.5"/><polygon points="85.9,37.4 113.1,24.0 113.1,35.4 85.9,49.0" fill="#d9705c"/><polygon points="85.9,37.4 84.3,36.6 84.3,51.4 85.9,52.2" fill="#b6503e"/><polygon points="85.9,49.0 113.1,35.4 113.1,38.0 85.9,51.6" fill="#b6503e"/><polygon points="90.1,39.4 91.7,38.6 91.7,41.8 90.1,42.6" fill="#fbeee0"/><polygon points="93.7,37.6 95.3,36.8 95.3,40.0 93.7,40.8" fill="#fbeee0"/><polygon points="97.3,35.8 98.9,35.0 98.9,38.2 97.3,39.0" fill="#fbeee0"/><polygon points="100.9,34.0 102.5,33.2 102.5,36.4 100.9,37.2" fill="#fbeee0"/><polygon points="104.5,32.2 106.1,31.4 106.1,34.6 104.5,35.4" fill="#fbeee0"/><polygon points="108.1,30.4 109.7,29.6 109.7,32.8 108.1,33.6" fill="#fbeee0"/><polygon points="87.5,49.6 114.1,36.4 118.5,39.0 92.1,52.4" fill="#5a4034"/><polyline points="89.5,48.8 93.5,51.2" fill="none" stroke="#8a6e5c" stroke-width="0.5"/><polyline points="93.1,47.0 97.1,49.4" fill="none" stroke="#8a6e5c" stroke-width="0.5"/><polyline points="96.7,45.2 100.7,47.6" fill="none" stroke="#8a6e5c" stroke-width="0.5"/><polyline points="100.3,43.4 104.3,45.8" fill="none" stroke="#8a6e5c" stroke-width="0.5"/><polyline points="103.9,41.6 107.9,44.0" fill="none" stroke="#8a6e5c" stroke-width="0.5"/><polyline points="107.5,39.8 111.5,42.2" fill="none" stroke="#8a6e5c" stroke-width="0.5"/><polyline points="111.1,38.0 115.1,40.4" fill="none" stroke="#8a6e5c" stroke-width="0.5"/><polygon points="92.1,52.4 118.5,39.0 118.5,43.4 92.1,56.6" fill="#7a4a34"/><polygon points="85.9,52.4 92.1,55.4 92.1,57.0 85.9,54.0" fill="#5a3424"/></g>
<use href="#i-rest" transform="translate(5 5.5) scale(.5)"/>
<use href="#i-group" transform="translate(5 50.5) scale(.5)"/>
</svg>
<span class="t r" style="left:3.8px;top:65.5px;font-size:6.86px;letter-spacing:0.82px;color:#1f1d1b;-webkit-text-stroke:.14px #1f1d1b;">BEST BARBECUE</span>
<div class="tag"></div>
<span class="t" style="left:125.0px;top:68.1px;font-size:5.35px;letter-spacing:1.06px;color:#fff;">-500.000</span>
</div>
<div class="card" style="left:810px;top:939px">
<svg width="168" height="78" viewBox="0 0 168 78"><use href="#grid"/>
<g clip-path="url(#cardclip)"><polygon points="75.5,47.4 88.5,42.4 101.5,47.4 88.5,52.4" fill="#f8ecd8"/><rect x="82.1" y="38.4" width="14.6" height="10.0" fill="#2a78c8"/><rect x="83.5" y="39.6" width="11.8" height="4.0" fill="#8a8c92"/><rect x="84.1" y="44.4" width="10.6" height="4.0" fill="#1a1a22"/><ellipse cx="77.5" cy="45.0" rx="1.0" ry="0.9" fill="#e83a8a"/><ellipse cx="79.5" cy="47.6" rx="1.0" ry="0.9" fill="#f0c030"/><ellipse cx="80.9" cy="49.0" rx="1.0" ry="0.9" fill="#3ad8a8"/><ellipse cx="98.5" cy="46.6" rx="1.0" ry="0.9" fill="#d83ad8"/><ellipse cx="100.5" cy="45.0" rx="1.0" ry="0.9" fill="#3a8ae8"/><ellipse cx="75.9" cy="46.6" rx="1.0" ry="0.9" fill="#ffffff"/><ellipse cx="85.5" cy="46.4" rx="1.0" ry="0.9" fill="#e83a3a"/><ellipse cx="102.1" cy="47.0" rx="1.0" ry="0.9" fill="#ffffff"/><ellipse cx="90.1" cy="51.6" rx="1.0" ry="0.9" fill="#3ad83a"/><rect x="86.5" y="46.0" width="1.6" height="1.6" fill="#e83a3a"/><rect x="90.1" y="46.0" width="1.6" height="1.6" fill="#3ad83a"/></g>
<use href="#i-basket" transform="translate(5 5.5) scale(.5)"/>
<use href="#i-group" transform="translate(5 50.5) scale(.5)"/>
</svg>
<span class="t r" style="left:3.8px;top:65.5px;font-size:6.86px;letter-spacing:0.85px;color:#1f1d1b;-webkit-text-stroke:.14px #1f1d1b;">ACCESSORIES</span>
<div class="tag"></div>
<span class="t" style="left:127.2px;top:68.1px;font-size:5.35px;letter-spacing:1.11px;color:#fff;">-30.000</span>
</div>
<div class="card" style="left:1395px;top:939px">
<svg width="168" height="78" viewBox="0 0 168 78"><use href="#grid"/>
<g clip-path="url(#cardclip)"><polygon points="65.7,39.8 78.1,33.6 110.0,49.5 95.8,56.0" fill="#b8e0e0"/><polygon points="66.6,39.8 78.1,34.2 108.6,49.5 95.8,55.0" fill="#f2b48c"/><polygon points="72.6,40.2 79.6,36.8 102.4,48.2 95.4,51.6" fill="#3c9cec"/><polyline points="74.0,41.0 96.6,52.2" fill="none" stroke="#e8283a" stroke-width="0.5" stroke-dasharray="1 1"/><polyline points="75.2,40.4 97.8,51.6" fill="none" stroke="#e8283a" stroke-width="0.5" stroke-dasharray="1 1"/><polyline points="76.4,39.8 99.0,51.0" fill="none" stroke="#e8283a" stroke-width="0.5" stroke-dasharray="1 1"/><polyline points="77.6,39.2 100.2,50.4" fill="none" stroke="#e8283a" stroke-width="0.5" stroke-dasharray="1 1"/><polyline points="78.8,38.6 101.4,49.8" fill="none" stroke="#e8283a" stroke-width="0.5" stroke-dasharray="1 1"/><polyline points="80.0,38.0 102.6,49.2" fill="none" stroke="#e8283a" stroke-width="0.5" stroke-dasharray="1 1"/><rect x="78.6" y="29.6" width="3.6" height="1.2" fill="#e8302a"/><rect x="79.6" y="30.8" width="0.7" height="3.0" fill="#f2f2f2"/><rect x="95.0" y="36.6" width="3.0" height="1.6" fill="#3a4a9a"/><rect x="70.0" y="41.6" width="1.2" height="1.6" fill="#4a5a8a"/><rect x="74.0" y="44.0" width="1.2" height="1.6" fill="#4a5a8a"/><rect x="82.0" y="48.6" width="1.2" height="1.6" fill="#4a5a8a"/><rect x="90.0" y="52.6" width="1.2" height="1.6" fill="#4a5a8a"/><rect x="104.0" y="51.0" width="1.2" height="1.6" fill="#4a5a8a"/><rect x="99.0" y="53.6" width="1.2" height="1.6" fill="#4a5a8a"/><ellipse cx="101.6" cy="50.6" rx="1.6" ry="0.8" fill="#ffffff"/></g>
<use href="#rot" x="136" y="48.6"/>
<use href="#i-ball" transform="translate(5 5.5) scale(.5)"/>
<use href="#i-couple" transform="translate(5 50.6) scale(.5)"/>
</svg>
<span class="t r" style="left:3.8px;top:65.5px;font-size:6.86px;letter-spacing:0.78px;color:#1f1d1b;-webkit-text-stroke:.14px #1f1d1b;">SWIMMING POOL</span>
<div class="tag"></div>
<span class="t" style="left:125.0px;top:68.1px;font-size:5.35px;letter-spacing:1.06px;color:#fff;">-140.000</span>
</div>
<div class="card" style="left:1590px;top:939px">
<svg width="168" height="78" viewBox="0 0 168 78"><use href="#grid"/>
<g clip-path="url(#cardclip)"><polygon points="65.5,47.7 76.0,42.4 90.0,50.0 80.6,55.7" fill="#40b4d4"/><polygon points="68.0,47.7 76.0,43.6 84.0,48.0 77.0,52.0" fill="#7fd4e6"/><polygon points="74.4,45.6 100.4,32.6 113.0,38.0 86.0,51.6" fill="#c9a070"/><polygon points="74.4,45.6 86.0,51.6 86.0,53.0 74.4,47.0" fill="#8a6238"/><polygon points="86.0,51.6 113.0,38.0 113.0,39.6 86.0,53.0" fill="#7a5430"/><polyline points="78.0,44.4 88.0,49.6" fill="none" stroke="#a8825a" stroke-width="0.4"/><polyline points="81.6,42.6 91.6,47.8" fill="none" stroke="#a8825a" stroke-width="0.4"/><polyline points="85.2,40.8 95.2,46.0" fill="none" stroke="#a8825a" stroke-width="0.4"/><polyline points="88.8,39.0 98.8,44.2" fill="none" stroke="#a8825a" stroke-width="0.4"/><polyline points="92.4,37.2 102.4,42.4" fill="none" stroke="#a8825a" stroke-width="0.4"/><polyline points="96.0,35.4 106.0,40.6" fill="none" stroke="#a8825a" stroke-width="0.4"/><polyline points="99.6,33.6 109.6,38.8" fill="none" stroke="#a8825a" stroke-width="0.4"/><polygon points="93.0,31.0 102.0,35.6 102.0,39.6 93.0,35.0" fill="#5a3e28"/><polygon points="102.0,35.6 110.0,31.6 110.0,35.6 102.0,39.6" fill="#3e2a1a"/><polygon points="91.0,31.0 99.6,24.6 111.6,30.6 102.0,36.4" fill="#4a3424"/><polygon points="91.0,31.0 99.6,24.6 101.0,25.3 92.6,31.8" fill="#6a4e36"/><rect x="69.0" y="45.6" width="3.6" height="2.0" fill="#e8287a"/><rect x="71.6" y="47.4" width="3.6" height="2.0" fill="#d82a2a"/><rect x="68.6" y="44.6" width="1.6" height="1.4" fill="#1a1a2a"/><rect x="80.0" y="40.0" width="1.2" height="2.0" fill="#3ad8a0"/><rect x="83.0" y="38.0" width="1.2" height="2.0" fill="#2a2a3a"/><rect x="106.0" y="36.0" width="1.2" height="2.0" fill="#d8d83a"/><rect x="111.0" y="33.0" width="1.2" height="2.0" fill="#3a4ad8"/><rect x="97.0" y="40.0" width="1.2" height="2.0" fill="#3ad860"/><rect x="101.0" y="38.6" width="1.2" height="2.0" fill="#e83a8a"/><polyline points="84.0,44.0 96.0,41.0" fill="none" stroke="#3aa860" stroke-width="0.8"/></g>
<use href="#rot" x="136" y="48.6"/>
<use href="#i-ball" transform="translate(5 5.5) scale(.5)"/>
<use href="#i-couple" transform="translate(5 50.6) scale(.5)"/>
</svg>
<span class="t r" style="left:3.8px;top:65.5px;font-size:6.86px;letter-spacing:1.45px;color:#1f1d1b;-webkit-text-stroke:.14px #1f1d1b;">JET SKI</span>
<div class="tag"></div>
<span class="t" style="left:125.0px;top:68.1px;font-size:5.35px;letter-spacing:1.06px;color:#fff;">-260.000</span>
</div>
<div class="abs" style="left:12px;top:267px;width:488px;height:573px;background:#b9a680;box-shadow:0 0 16px 2px rgba(150,85,30,.55)"></div>
<div class="abs" style="left:15px;top:270px;width:211px;height:567px;background:#c9a583"></div>
<div class="abs" style="left:226px;top:270px;width:272px;height:567px;background:#edd4ba"></div>
<span class="t r" style="left:41.0px;top:284.5px;font-size:16.46px;letter-spacing:2.96px;color:#fffaf2;-webkit-text-stroke:0.80px #fffaf2;">KONSTRUKTION</span>
<div class="abs" style="left:50px;top:318px;width:176px;height:46px;background:#edd4ba"></div>
<div class="abs" style="left:40px;top:323px;width:186px;height:36px;background:#edd4ba"></div>
<div class="abs" style="left:35px;top:328px;width:191px;height:26px;background:#edd4ba"></div>
<div class="abs" style="left:30px;top:333px;width:196px;height:16px;background:#edd4ba"></div>
<div class="abs" style="left:45px;top:318px;width:5px;height:5px;background:#dbbd9f"></div>
<div class="abs" style="left:45px;top:359px;width:5px;height:5px;background:#dbbd9f"></div>
<div class="abs" style="left:35px;top:323px;width:5px;height:5px;background:#dbbd9f"></div>
<div class="abs" style="left:35px;top:354px;width:5px;height:5px;background:#dbbd9f"></div>
<div class="abs" style="left:30px;top:328px;width:5px;height:5px;background:#dbbd9f"></div>
<div class="abs" style="left:30px;top:349px;width:5px;height:5px;background:#dbbd9f"></div>
<svg class="abs" style="left:0;top:0;overflow:visible" width="240" height="840">
<use href="#i-house" transform="translate(45.0 330.0) scale(1.000)"/>
<use href="#i-hotel" transform="translate(45.0 376.0) scale(1.000)"/>
<use href="#i-rest" transform="translate(45.0 422.0) scale(1.000)"/>
<use href="#i-basket" transform="translate(45.0 468.0) scale(1.000)"/>
<use href="#i-ball" transform="translate(45.0 514.0) scale(1.000)"/>
<use href="#i-camera" transform="translate(45.0 560.0) scale(1.000)"/>
<use href="#i-tree" transform="translate(45.0 606.0) scale(1.000)"/>
<use href="#i-car" transform="translate(45.0 652.0) scale(1.000)"/>
<use href="#i-plane" transform="translate(45.0 698.0) scale(1.000)"/>
<use href="#i-light" transform="translate(45.0 744.0) scale(1.000)"/>
<use href="#i-med" transform="translate(45.0 790.0) scale(1.000)"/>
</svg>
<span class="t r" style="left:79.5px;top:336.1px;font-size:13.44px;letter-spacing:1.70px;color:#5a5242;-webkit-text-stroke:0.66px #5a5242;">HÄUSER</span>
<span class="t r" style="left:79.5px;top:382.1px;font-size:13.44px;letter-spacing:1.52px;color:#fffaf2;-webkit-text-stroke:0.66px #fffaf2;">HOTELS</span>
<span class="t r" style="left:79.5px;top:428.1px;font-size:13.44px;letter-spacing:2.24px;color:#fffaf2;-webkit-text-stroke:0.66px #fffaf2;">RESTAURANTS</span>
<span class="t r" style="left:79.5px;top:474.1px;font-size:13.44px;letter-spacing:2.09px;color:#fffaf2;-webkit-text-stroke:0.66px #fffaf2;">SUPERMÄRKTE</span>
<span class="t r" style="left:79.5px;top:520.1px;font-size:13.44px;letter-spacing:2.30px;color:#fffaf2;-webkit-text-stroke:0.66px #fffaf2;">SPORT</span>
<span class="t r" style="left:79.5px;top:566.1px;font-size:13.44px;letter-spacing:2.23px;color:#fffaf2;-webkit-text-stroke:0.66px #fffaf2;">ATTRAKTIONEN</span>
<span class="t r" style="left:79.5px;top:612.1px;font-size:13.44px;letter-spacing:3.04px;color:#fffaf2;-webkit-text-stroke:0.66px #fffaf2;">PARKS</span>
<span class="t r" style="left:79.5px;top:658.1px;font-size:13.44px;letter-spacing:1.83px;color:#fffaf2;-webkit-text-stroke:0.66px #fffaf2;">AUTOS</span>
<span class="t r" style="left:79.5px;top:704.1px;font-size:13.44px;letter-spacing:1.88px;color:#fffaf2;-webkit-text-stroke:0.66px #fffaf2;">FLUGHÄFEN</span>
<span class="t r" style="left:79.5px;top:750.1px;font-size:13.44px;letter-spacing:2.06px;color:#fffaf2;-webkit-text-stroke:0.66px #fffaf2;">SCHIFFSHÄFEN</span>
<span class="t r" style="left:79.5px;top:796.1px;font-size:13.44px;letter-spacing:2.04px;color:#fffaf2;-webkit-text-stroke:0.66px #fffaf2;">VERSORGUNG</span>
<div class="abs" style="left:240px;top:270px;width:258px;height:567px;overflow:hidden">
<svg class="abs" style="left:-240px;top:-270px" width="498" height="840" viewBox="0 0 498 840">
<use href="#grid2" y="0"/>
<polygon points="337.7,379.5 368.5,364.1 399.3,379.5 368.5,394.9" fill="#2fae30"/><polygon points="343.3,379.5 368.5,366.9 393.7,379.5 368.5,392.1" fill="#c4b072"/><ellipse cx="374.5" cy="381.5" rx="10.0" ry="4.4" fill="#d2c084"/><rect x="357.7" y="343.5" width="3.0" height="35.2" fill="#7a4e22"/><polygon points="359.3,337.3 363.3,339.3 367.7,339.7 364.5,343.3 366.5,348.5 359.3,343.7 351.7,348.5 354.1,343.3 350.5,339.7 355.3,339.3" fill="#2a8f2a"/><polygon points="351.3,339.7 359.3,336.9 359.3,341.7" fill="#46b840"/><polygon points="359.3,351.3 363.3,353.3 367.7,353.7 364.5,357.3 366.5,362.5 359.3,357.7 351.7,362.5 354.1,357.3 350.5,353.7 355.3,353.3" fill="#2a8f2a"/><polygon points="351.3,353.7 359.3,350.9 359.3,355.7" fill="#46b840"/><polygon points="365.3,376.7 371.3,369.5 376.5,376.7 370.9,379.1" fill="#3a8ac8"/><polygon points="371.3,369.5 376.5,376.7 370.9,379.1" fill="#2a6aa8"/><polygon points="378.5,382.7 385.3,374.3 390.5,381.5 384.5,384.7" fill="#f0b820"/><polygon points="385.3,374.3 390.5,381.5 384.5,384.7" fill="#d89810"/><ellipse cx="385.7" cy="373.5" rx="3.2" ry="2.7" fill="#3aa830"/><ellipse cx="384.7" cy="372.5" rx="1.6" ry="1.4" fill="#75c26e"/><ellipse cx="366.5" cy="387.5" rx="1.6" ry="1.2" fill="#d8482a"/>
<use href="#i-group" transform="translate(230.0 384.5) scale(1.000)"/>
<use href="#grid2" y="200"/>
<polygon points="337.7,579.5 368.5,564.1 399.3,579.5 368.5,594.9" fill="#2fae30"/><polygon points="343.3,579.5 368.5,566.9 393.7,579.5 368.5,592.1" fill="#8a6a48"/><rect x="341.5" y="554.3" width="2.2" height="18.0" fill="#7a4e22"/><path d="M342.5 548.7l4.4 2.2l5.6 0.4l-3.6 3.2l2.8 6.0l-9.2 -5.0l-9.2 5.0l2.8 -6.0Z" fill="#2f9a30"/><path d="M332.5 552.5l10.0 -3.6l0.0 5.2Z" fill="#6db86e"/><polygon points="345.3,559.5 361.7,567.5 361.7,589.5 345.3,581.5" fill="#4e463e"/><polygon points="361.7,567.5 374.5,561.1 374.5,583.1 361.7,589.5" fill="#3a332c"/><polygon points="345.3,559.5 358.1,549.5 374.5,561.1 361.7,567.5" fill="#2e2823"/><polyline points="348.5,561.1 348.5,582.7" fill="none" stroke="#5e554b" stroke-width="1.0"/><polyline points="352.5,563.1 352.5,584.7" fill="none" stroke="#5e554b" stroke-width="1.0"/><polyline points="356.5,565.1 356.5,586.7" fill="none" stroke="#5e554b" stroke-width="1.0"/><polyline points="360.5,567.1 360.5,588.7" fill="none" stroke="#5e554b" stroke-width="1.0"/><rect x="364.3" y="571.5" width="2.2" height="15.2" fill="#7a4e22"/><path d="M365.3 565.9l4.4 2.2l5.6 0.4l-3.6 3.2l2.8 6.0l-9.2 -5.0l-9.2 5.0l2.8 -6.0Z" fill="#2f9a30"/><path d="M355.3 569.7l10.0 -3.6l0.0 5.2Z" fill="#6db86e"/><polygon points="375.7,570.3 381.7,565.5 387.7,570.3" fill="#e8302a"/><polygon points="379.7,570.3 381.7,565.5 383.7,570.3" fill="#ffffff"/><rect x="381.1" y="570.3" width="1.4" height="6.8" fill="#e8e8e8"/><ellipse cx="371.7" cy="589.5" rx="4.0" ry="3.4" fill="#2f9a30"/><ellipse cx="370.5" cy="588.3" rx="2.0" ry="1.8" fill="#6db86e"/><ellipse cx="376.5" cy="586.3" rx="3.2" ry="2.7" fill="#38a838"/><ellipse cx="375.5" cy="585.3" rx="1.6" ry="1.4" fill="#73c273"/><ellipse cx="366.5" cy="592.7" rx="1.4" ry="1.2" fill="#e8302a"/>
<use href="#i-group" transform="translate(230.0 584.5) scale(1.000)"/>
<use href="#grid2" y="400"/>
<polygon points="339.8,780.6 367.0,767.0 394.2,780.6 367.0,794.2" fill="#f3d9a6"/><polygon points="341.0,780.6 367.0,767.8 393.0,780.6 367.0,793.4" fill="#37b038"/><ellipse cx="379.0" cy="778.0" rx="8.0" ry="4.0" fill="#2c9a2e"/><ellipse cx="356.6" cy="782.0" rx="10.4" ry="5.8" fill="#7a4c20"/><ellipse cx="356.6" cy="780.4" rx="10.4" ry="5.8" fill="#bd8a45"/><ellipse cx="373.4" cy="786.0" rx="8.0" ry="2.6" fill="#b9bac4"/><rect x="357.0" y="764.0" width="20.8" height="12.0" fill="#a2652a"/><ellipse cx="367.4" cy="776.0" rx="10.4" ry="3.4" fill="#a2652a"/><rect x="357.0" y="764.0" width="8.0" height="12.0" fill="#c0843c"/><rect x="359.8" y="767.2" width="2.0" height="6.4" fill="#8fd6f5"/><rect x="363.8" y="767.2" width="2.0" height="6.4" fill="#8fd6f5"/><rect x="370.2" y="767.2" width="2.0" height="6.4" fill="#8fd6f5"/><rect x="373.8" y="767.2" width="2.0" height="6.4" fill="#8fd6f5"/><polygon points="353.8,763.6 367.0,753.6 380.6,763.6 379.0,766.4 367.0,768.0 355.0,766.4" fill="#8e5e2a"/><polygon points="367.0,753.6 380.6,763.6 379.0,766.4 369.0,768.0" fill="#6b431c"/><polygon points="359.0,760.0 367.0,753.6 369.0,761.0" fill="#b07c3c"/>
<use href="#i-man" transform="translate(232.0 784.5) scale(1.000)"/>
</svg>
<div class="abs" style="left:2.6px;top:144px;width:200px;height:20px;overflow:hidden">
<span class="t r" style="left:-10.9px;top:3.3px;font-size:14.13px;letter-spacing:1.61px;color:#1f1d1b;-webkit-text-stroke:.35px #1f1d1b;">CAMPING</span>
</div>
<div class="abs" style="left:158px;top:159px;width:82px;height:16px;background:#1e9971"></div>
<div class="abs" style="left:150px;top:159px;width:0;height:0;border-style:solid;border-width:8px;border-color:#1e9971 #1e9971 #1e9971 transparent"></div>
<span class="t" style="left:167.0px;top:162.9px;font-size:9.88px;letter-spacing:2.63px;color:#fff;">-19.000</span>
<div class="abs" style="left:2.6px;top:344px;width:200px;height:20px;overflow:hidden">
<span class="t r" style="left:-10.6px;top:3.3px;font-size:14.13px;letter-spacing:2.25px;color:#1f1d1b;-webkit-text-stroke:.35px #1f1d1b;">STAY4EVER</span>
</div>
<div class="abs" style="left:158px;top:359px;width:82px;height:16px;background:#1e9971"></div>
<div class="abs" style="left:150px;top:359px;width:0;height:0;border-style:solid;border-width:8px;border-color:#1e9971 #1e9971 #1e9971 transparent"></div>
<span class="t" style="left:167.0px;top:362.9px;font-size:9.88px;letter-spacing:2.63px;color:#fff;">-37.000</span>
<div class="abs" style="left:2.6px;top:544px;width:200px;height:20px;overflow:hidden">
<span class="t r" style="left:-10.6px;top:3.3px;font-size:14.13px;letter-spacing:2.22px;color:#1f1d1b;-webkit-text-stroke:.35px #1f1d1b;">TINY VILLA</span>
</div>
</div>
<div class="abs" style="left:484px;top:285px;width:10px;height:30px;background:#fff6ea"></div>
<svg class="abs" style="left:886px;top:552px" width="44" height="46"><path d="M5.3 7.2L38.2 19.7L24 23.5L17.4 38.9Z" fill="#fbfbfd" fill-opacity=".96"/><path d="M5.3 7.2L24 23.5L17.4 38.9Z" fill="#dfe3ec" fill-opacity=".9"/></svg>
<div class="abs" style="left:910.5px;top:575.5px;width:336px;height:305.5px;background:#b8a27f;box-shadow:1px 2px 5px rgba(60,30,20,.35)"></div>
<div class="abs" style="left:913.5px;top:578.8px;width:329.8px;height:299px;background:#fdf5e4"></div>
<div class="abs" style="left:913.5px;top:744px;width:329.8px;height:133.8px;background:#f8e7d3"></div>
<span class="t r" style="left:931.6px;top:601.2px;font-size:10.97px;letter-spacing:2.11px;color:#7c7061;-webkit-text-stroke:0.30px #7c7061;">GEBÄUDEKOSTEN</span>
<span class="t r" style="left:1071.5px;top:601.2px;font-size:10.97px;letter-spacing:1.79px;color:#7c7061;-webkit-text-stroke:0.30px #7c7061;">BAUZEIT</span>
<span class="t r" style="left:951.6px;top:620.0px;font-size:10.97px;letter-spacing:2.08px;color:#625a50;-webkit-text-stroke:0.30px #625a50;">6.7 MIO. EURO</span>
<span class="t r" style="left:1101.6px;top:620.0px;font-size:10.97px;letter-spacing:2.37px;color:#625a50;-webkit-text-stroke:0.30px #625a50;">215 TAGE</span>
<span class="t r" style="left:931.6px;top:651.2px;font-size:10.97px;letter-spacing:2.55px;color:#7c7061;-webkit-text-stroke:0.30px #7c7061;">FIXKOSTEN</span>
<span class="t r" style="left:1071.5px;top:651.2px;font-size:10.97px;letter-spacing:2.51px;color:#7c7061;-webkit-text-stroke:0.30px #7c7061;">KAPAZITÄT</span>
<span class="t r" style="left:951.6px;top:669.9px;font-size:10.97px;letter-spacing:2.17px;color:#625a50;-webkit-text-stroke:0.30px #625a50;">51.000 EURO</span>
<span class="t r" style="left:1101.6px;top:669.9px;font-size:10.97px;letter-spacing:2.58px;color:#625a50;-webkit-text-stroke:0.30px #625a50;">100 PERSONEN</span>
<span class="t r" style="left:931.6px;top:701.2px;font-size:10.97px;letter-spacing:1.56px;color:#7c7061;-webkit-text-stroke:0.30px #7c7061;">MIETE</span>
<span class="t r" style="left:981.7px;top:720.2px;font-size:10.97px;letter-spacing:2.42px;color:#625a50;-webkit-text-stroke:0.30px #625a50;">860 EURO</span>
<span class="t r" style="left:1069.9px;top:720.2px;font-size:10.97px;letter-spacing:2.67px;color:#625a50;-webkit-text-stroke:0.30px #625a50;">/PERS.</span>
<span class="t r" style="left:931.6px;top:751.2px;font-size:10.97px;letter-spacing:2.16px;color:#7c7061;-webkit-text-stroke:0.30px #7c7061;">BESCHREIBUNG</span>
<div class="abs" style="left:931px;top:783.0px;width:293px;height:25px;background:#fcf0e0"></div>
<div class="abs" style="left:931px;top:810.8px;width:293px;height:25px;background:#fcf0e0"></div>
<div class="abs" style="left:931px;top:838.8px;width:293px;height:25px;background:#fcf0e0"></div>
<div class="abs" style="left:987px;top:779.8px;width:115px;height:3.2px;background:#1e9971"></div>
<div class="abs" style="left:1109px;top:779.8px;width:115px;height:3.2px;background:#e0394a"></div>
<svg class="abs" style="left:0;top:0;overflow:visible" width="1250" height="890">
<use href="#i-euro" transform="translate(930.6 618.2) scale(1.000)"/>
<use href="#i-hour" transform="translate(1072.0 617.8) scale(1.050)"/>
<use href="#i-euro" transform="translate(929.0 667.8) scale(1.000)"/>
<use href="#i-pers" transform="translate(1070.8 666.5) scale(1.000)"/>
<use href="#i-euro" transform="translate(929.0 715.5) scale(1.000)"/>
<path d="M942.5 729.5L947.5 716.5" stroke="#d4bd9f" stroke-width="2"/>
<use href="#i-pers" transform="translate(947.7 714.5) scale(1.000)"/>
<use href="#i-up" transform="translate(1036.6 761.5) scale(1.000)"/>
<use href="#i-down" transform="translate(1158.5 761.5) scale(1.000)"/>
<use href="#i-group" transform="translate(934.8 785.5) scale(0.910)"/>
<use href="#i-house" transform="translate(1107.0 787.8) scale(0.727)"/>
<use href="#i-hotel" transform="translate(1127.0 787.8) scale(0.727)"/>
<use href="#i-rest" transform="translate(1147.0 787.8) scale(0.727)"/>
<use href="#i-basket" transform="translate(1167.0 787.8) scale(0.727)"/>
<use href="#i-camera" transform="translate(1187.0 787.8) scale(0.727)"/>
<use href="#i-car" transform="translate(1207.0 787.8) scale(0.727)"/>
<use href="#i-couple" transform="translate(943.0 813.3) scale(0.920)"/>
<use href="#i-rest" transform="translate(995.0 818.0) scale(0.727)"/>
<use href="#i-basket" transform="translate(1015.0 818.0) scale(0.727)"/>
<use href="#i-ball" transform="translate(1035.0 818.0) scale(0.727)"/>
<use href="#i-camera" transform="translate(1055.0 818.0) scale(0.727)"/>
<use href="#i-tree" transform="translate(1075.0 818.0) scale(0.727)"/>
<use href="#i-hotel" transform="translate(1157.0 818.0) scale(0.727)"/>
<use href="#i-plane" transform="translate(1137.0 845.5) scale(0.727)"/>
<use href="#i-light" transform="translate(1159.0 845.0) scale(0.727)"/>
<use href="#i-med" transform="translate(1177.0 846.5) scale(0.727)"/>
</svg>
<div class="tb"></div>
<div class="abs" style="left:1294px;top:1037px;width:38px;height:38px;border-radius:4px;background:rgba(255,255,255,.45);border:1px solid rgba(255,255,255,.5)"></div>
<svg class="abs" style="left:0;top:0" width="1920" height="1079" viewBox="0 0 1920 1079"><defs><linearGradient id="wl" x1="0" y1="0" x2="1" y2="1"><stop offset="0" stop-color="#4cc2f5"/><stop offset="1" stop-color="#0a6fcf"/></linearGradient><linearGradient id="ml" x1="0" y1="0" x2="1" y2="1"><stop offset="0" stop-color="#35c1f1"/><stop offset="1" stop-color="#0f78d4"/></linearGradient><linearGradient id="ff" x1="0" y1="0" x2="0" y2="1"><stop offset="0" stop-color="#ffd43a"/><stop offset=".5" stop-color="#ff7a1a"/><stop offset="1" stop-color="#e3207a"/></linearGradient><linearGradient id="eg" x1="0" y1="0" x2="1" y2="1"><stop offset="0" stop-color="#2bc3d2"/><stop offset=".6" stop-color="#1a78c8"/><stop offset="1" stop-color="#0c4a9a"/></linearGradient></defs><g fill="url(#wl)"><rect x="597" y="1045" width="11" height="11" rx=".8"/><rect x="609" y="1045" width="11" height="11" rx=".8"/><rect x="597" y="1057" width="11" height="11" rx=".8"/><rect x="609" y="1057" width="11" height="11" rx=".8"/></g><circle cx="655" cy="1054" r="7.4" fill="none" stroke="#1c1c1c" stroke-width="2.6"/><path d="M649.6 1060L643.8 1066.2" stroke="#1c1c1c" stroke-width="3" stroke-linecap="round"/><rect x="691" y="1045" width="18" height="15.5" rx="1.5" fill="#f2f2f2" stroke="#d6d6d6" stroke-width=".6"/><rect x="685" y="1051" width="18" height="16" rx="1.5" fill="#1f1f1f"/><rect x="691" y="1051" width="12" height="9.5" fill="#9a9a9a" opacity=".55"/><circle cx="741" cy="1056" r="12" fill="#fff"/><path d="M743 1048q3 3-1 6q-5 2-6 7q4-3 8-1q3-2 3-6M736 1065q6-2 10-7" stroke="#444" stroke-width="1" fill="none"/><circle cx="785" cy="1055.5" r="9.6" fill="#f4f7ff" stroke="#3a76f0" stroke-width="2.2"/><path d="M776.5 1062L775.3 1066.6L780 1065.2Z" fill="#3a76f0"/><path d="M817 1053L829 1045L841 1053V1066.5H817Z" fill="#1565c0"/><path d="M820 1049.5H838V1060H820Z" fill="#eef3f8"/><path d="M817 1053L829 1060.5L841 1053V1066.5H817Z" fill="url(#ml)"/><path d="M817 1066.5L829 1060.5L841 1066.5Z" fill="#1e9de6"/><path d="M861 1047.5Q861 1046 862.5 1046H869L871 1048H884Q885.5 1048 885.5 1049.5V1052H861Z" fill="#e6a413"/><rect x="861" y="1049.6" width="24.5" height="17" rx="1.2" fill="#ffd257"/><rect x="861" y="1058" width="24.5" height="8.6" fill="#f6be2e"/><rect x="866" y="1060" width="14.5" height="6.6" rx="1" fill="#1583d8"/><rect x="869" y="1061.8" width="8.5" height="1.6" fill="#0d5fae"/><circle cx="917" cy="1056" r="12" fill="url(#eg)"/><path d="M907 1052Q912 1043 922 1045.5Q929 1048 929 1055Q927 1060 921 1059Q924 1054 919 1051Q912 1049 907 1052Z" fill="#5ad66a"/><path d="M913 1057Q913 1063 921 1065Q915 1069 909 1063Q906 1058 909 1054Q912 1052 915 1054Q913 1055 913 1057Z" fill="#0d3f8c"/><path d="M916 1056Q918 1061 925 1060Q922 1064 918 1063Q914 1061 916 1056Z" fill="#f4f7fb"/><circle cx="961" cy="1057" r="11" fill="url(#ff)"/><path d="M955 1049Q957 1044 962 1044Q962 1047 966 1049Q972 1052 971 1060Q969 1052 963 1052Q958 1051 955 1049Z" fill="#ffb52a"/><circle cx="962" cy="1057.5" r="5.4" fill="#7a3ad8"/><path d="M957 1055Q960 1052 965 1054Q962 1054 961 1057Q958 1058 957 1055Z" fill="#ff8a2a"/><path d="M1010 1045L1016 1047.6V1064.4L1010 1067L995.5 1054.5L999 1052Z" fill="#2a9cf0"/><path d="M1010 1045L1016 1047.6V1064.4L1010 1067Z" fill="#1473c6"/><path d="M993.6 1050.6L996 1049L1010.5 1062V1067L993.6 1052.6Z" fill="#1e88dd"/><path d="M993.6 1061.4L996 1063L1010.5 1050V1045L993.6 1059.4Z" fill="#2a9cf0"/><rect x="1038.5" y="1045" width="17.5" height="22" fill="#fbfbf6" stroke="#9a9a8a" stroke-width=".8"/><rect x="1039.2" y="1058" width="16.2" height="8.4" fill="#6fc83a"/><path d="M1042 1050V1059M1044.5 1054h6" stroke="#222" stroke-width="1.3"/><path d="M1058 1045.5L1060.4 1047L1050.6 1062L1047.6 1063.6L1048 1060.4Z" fill="#e8b02a" stroke="#8a5a1a" stroke-width=".5"/><path d="M1058 1045.5L1060.4 1047L1059.2 1048.8L1056.8 1047.3Z" fill="#d8484a"/><rect x="1082" y="1045" width="22" height="22" rx="1.6" fill="#2c2c2c"/><path d="M1093 1057H1104L1093 1067Z" fill="#f7d51e"/><path d="M1093 1057H1104V1065.4Q1104 1067 1102.4 1067H1093Z" fill="#f7d51e"/><path d="M1125 1045.5H1138L1147 1056L1138 1066.5H1131L1140 1056L1134 1049Z" fill="#2563e0"/><path d="M1125 1045.5H1138L1147 1056H1134Z" fill="#1b4fd0"/><path d="M1140 1056L1147 1056L1138 1066.5H1131Z" fill="#6aa8f8"/><path d="M1125 1066.5L1134 1056L1137.5 1060L1132 1066.5Z" fill="#3a86f0"/><rect x="1168.5" y="1044" width="24" height="24" rx="3" fill="#fff"/><path d="M1180.5 1046.5L1189 1051.2V1061L1184.5 1063.6L1180.5 1066.5V1063.6L1172 1061V1051.2Z" fill="#13294a"/><path d="M1177 1059L1184 1055.6L1178 1052.6M1177 1059V1053" stroke="#fff" stroke-width="1" fill="none"/><circle cx="1177" cy="1059" r="1.1" fill="#fff"/><circle cx="1184" cy="1055.6" r="1.1" fill="#fff"/><circle cx="1178" cy="1052.6" r="1.1" fill="#fff"/><rect x="1213" y="1046" width="22.5" height="18.5" rx="1" fill="#0c0c0c"/><rect x="1213" y="1046" width="22.5" height="2.4" fill="#8a8a8a"/><path d="M1216 1052h3m1 0h2M1223.5 1054.5H1232" stroke="#e8e8e8" stroke-width="1.1"/><circle cx="1268.8" cy="1056" r="11.5" fill="#e8453c"/><path d="M1268.8 1056L1258.9 1050.2A11.5 11.5 0 0 0 1263 1066Z" fill="#2da94f"/><path d="M1268.8 1056L1263 1066A11.5 11.5 0 0 0 1280.3 1056Z" fill="#fbc116"/><path d="M1268.8 1056H1280.3A11.5 11.5 0 0 0 1278.7 1050.2H1268.8Z" fill="#e8453c"/><circle cx="1268.8" cy="1056" r="5.3" fill="#fff"/><circle cx="1268.8" cy="1056" r="4.2" fill="#4a8af4"/><rect x="1301" y="1044.5" width="17" height="17" rx="2" fill="#f3e9ea"/><rect x="1303.5" y="1047" width="11" height="11" rx="1.5" fill="none" stroke="#d43a2a" stroke-width="2" stroke-dasharray="3 1.6"/><path d="M1314 1054L1321.6 1060M1314.5 1062.5L1325 1058" stroke="#9aa0a6" stroke-width="2"/><circle cx="1323.2" cy="1057.8" r="1.9" fill="none" stroke="#1f8be0" stroke-width="1.4"/><circle cx="1313.6" cy="1065" r="1.9" fill="none" stroke="#1f8be0" stroke-width="1.4"/><rect x="870.0" y="1072" width="6" height="2.6" rx="1.3" fill="#8c8a88"/><rect x="958.0" y="1072" width="6" height="2.6" rx="1.3" fill="#8c8a88"/><rect x="1002.0" y="1072" width="6" height="2.6" rx="1.3" fill="#8c8a88"/><rect x="1046.0" y="1072" width="6" height="2.6" rx="1.3" fill="#8c8a88"/><rect x="1090.0" y="1072" width="6" height="2.6" rx="1.3" fill="#8c8a88"/><rect x="1134.0" y="1072" width="6" height="2.6" rx="1.3" fill="#8c8a88"/><rect x="1178.0" y="1072" width="6" height="2.6" rx="1.3" fill="#8c8a88"/><rect x="1222.0" y="1072" width="6" height="2.6" rx="1.3" fill="#8c8a88"/><rect x="1266.0" y="1072" width="6" height="2.6" rx="1.3" fill="#8c8a88"/><rect x="1305" y="1072" width="16" height="2.8" rx="1.4" fill="#1a8a1e"/><path d="M1651.5 1059L1656.8 1053.6L1662 1059" fill="none" stroke="#1c1c1c" stroke-width="1.4"/><path d="M1676 1060.5Q1672.6 1060 1673.4 1056.6Q1674.4 1054.6 1676.6 1055Q1677.6 1051 1681.6 1051.2Q1685.4 1051.6 1686 1055.4Q1689 1055.8 1688.6 1058.6" fill="none" stroke="#2c2c2c" stroke-width="1.5"/><circle cx="1684.6" cy="1060" r="4.2" fill="#8a8a8a"/><path d="M1683.4 1057.8V1062.2M1685.8 1057.8V1062.2" stroke="#fff" stroke-width="1"/><path d="M1746 1054.4Q1752.6 1048.4 1759.4 1054.4M1748.2 1057Q1752.6 1053 1757.2 1057M1750.4 1059.4Q1752.6 1057.6 1754.8 1059.4" fill="none" stroke="#1c1c1c" stroke-width="1.2"/><circle cx="1752.6" cy="1061.2" r="1" fill="#1c1c1c"/><path d="M1769 1054.6H1771.6L1775 1051.4V1061.8L1771.6 1058.6H1769Z" fill="none" stroke="#1c1c1c" stroke-width="1.1"/><path d="M1778 1054L1783 1059M1783 1054L1778 1059" stroke="#1c1c1c" stroke-width="1"/><rect x="1797.6" y="1052.4" width="10.6" height="7" rx="1" fill="#1c1c1c"/><rect x="1808.4" y="1054.4" width="1.4" height="3" fill="#1c1c1c"/><path d="M1794.6 1049.6V1052M1797 1049.6V1052M1793.8 1052H1797.8V1054Q1797.8 1055.4 1796.6 1055.6V1060H1798" fill="none" stroke="#1c1c1c" stroke-width="1"/><circle cx="1892" cy="1056.2" r="8" fill="#118a11"/></svg>
<span class="ls" style="left:1704px;top:1050.5px;font-size:11.2px;color:#1c1c1c">DEU</span>
<span class="ls" style="right:43.6px;top:1042.4px;font-size:11.4px;color:#1c1c1c">20:58</span>
<span class="ls" style="right:43.6px;top:1059px;font-size:11.4px;letter-spacing:-.15px;color:#1c1c1c">20.11.2021</span>
<span class="ls" style="left:1888.7px;top:1050.4px;font-size:11.5px;color:#fff">2</span>
</body></html>
